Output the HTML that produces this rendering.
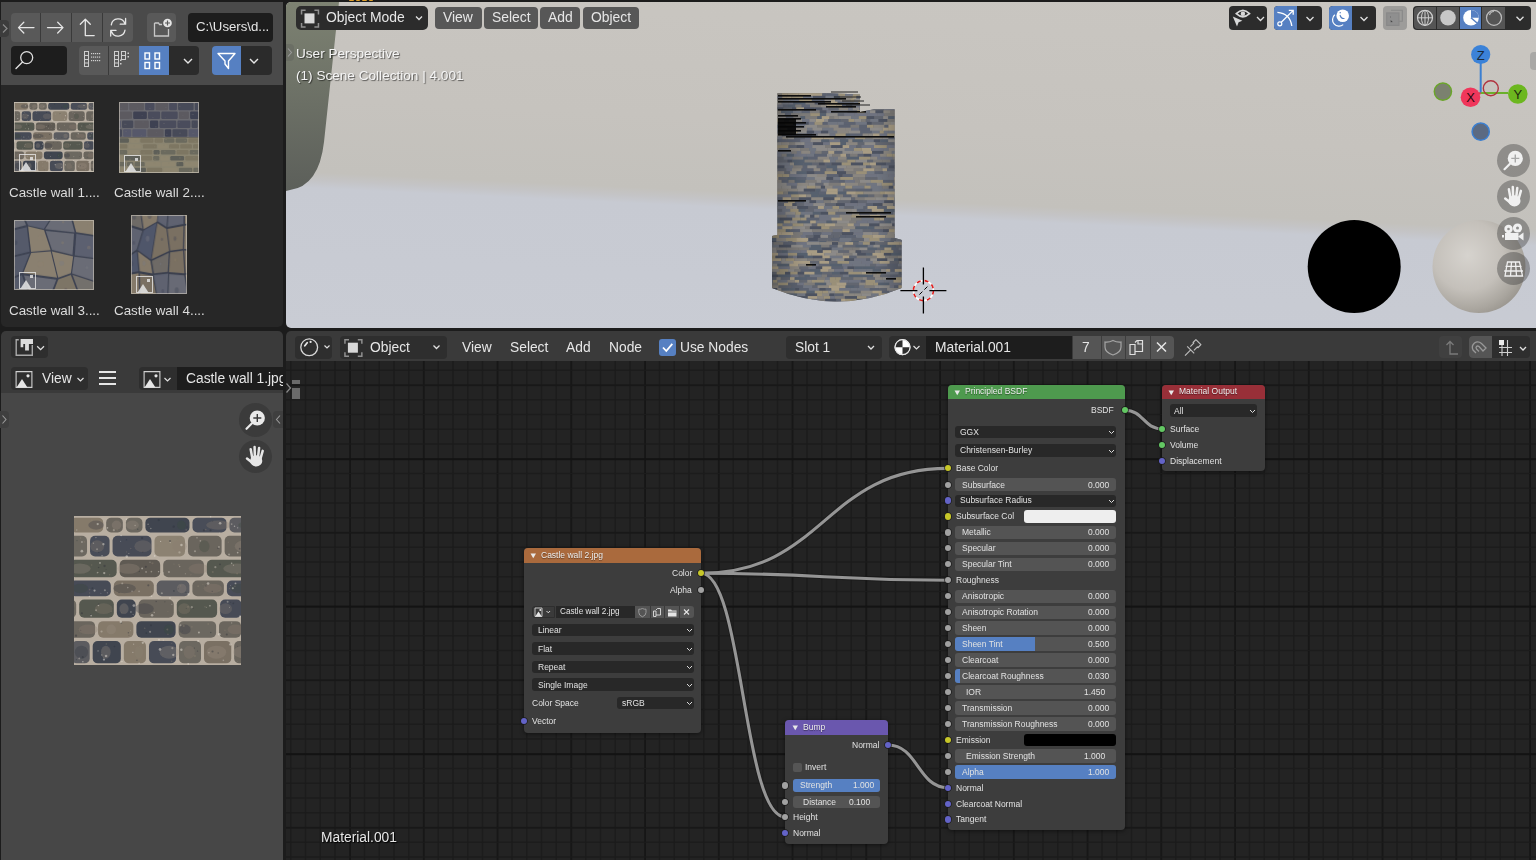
<!DOCTYPE html><html><head><meta charset="utf-8"><style>
*{box-sizing:border-box}
html,body{margin:0;padding:0}
body{width:1536px;height:860px;overflow:hidden;position:relative;background:#1c1c1c;font-family:"Liberation Sans", sans-serif;color:#e0e0e0}
.a{position:absolute}
.t{position:absolute;white-space:nowrap;line-height:1;will-change:transform}
.btn{position:absolute;background:#595959;border-radius:4px}
.fld{position:absolute;background:#1d1d1d;border-radius:4px}
.nd{position:absolute;border-radius:4px;background:#3d3d3d;box-shadow:0 1px 4px rgba(0,0,0,.5)}
.nh{position:absolute;left:0;top:0;right:0;border-radius:4px 4px 0 0}
.nt{position:absolute;white-space:nowrap;line-height:1;font-size:8.5px;color:#e4e4e4;will-change:transform}
.dd{position:absolute;background:#282828;border-radius:3px}
.sl{position:absolute;background:#545454;border-radius:3px;overflow:hidden}
.sk{position:absolute;width:7px;height:7px;border-radius:50%;border:1px solid #1e1e1e}
</style></head><body>
<svg width="0" height="0" style="position:absolute"><defs><filter id="soft"><feGaussianBlur stdDeviation="0.9"/></filter><symbol id="w1" viewBox="0 0 200 180" preserveAspectRatio="none"><g filter="url(#soft)"><rect width="200" height="180" fill="#b8aea1"/><rect x="-4.1" y="2.0" width="39.1" height="18.0" rx="6.0" fill="#857a6b"/><ellipse cx="26.5" cy="11.0" rx="9.4" ry="5.5" fill="#2f333c" opacity=".3"/><circle cx="19.1" cy="16.7" r="1.0" fill="#8a8070" opacity=".4"/><circle cx="6.2" cy="17.9" r="1.0" fill="#8a8070" opacity=".4"/><circle cx="14.6" cy="12.9" r="0.7" fill="#8a8070" opacity=".4"/><circle cx="3.3" cy="17.0" r="0.9" fill="#d8d0c4" opacity=".4"/><circle cx="21.3" cy="4.9" r="1.2" fill="#8a8070" opacity=".4"/><rect x="38.5" y="2.0" width="20.0" height="18.0" rx="6.0" fill="#6a655d"/><ellipse cx="51.0" cy="11.0" rx="5.8" ry="5.5" fill="#9a9080" opacity=".3"/><circle cx="51.9" cy="16.9" r="0.9" fill="#8a8070" opacity=".4"/><circle cx="47.7" cy="17.1" r="1.3" fill="#d8d0c4" opacity=".4"/><rect x="62.2" y="2.0" width="19.8" height="18.0" rx="6.0" fill="#6c6860"/><ellipse cx="70.0" cy="11.0" rx="7.7" ry="5.5" fill="#9a9080" opacity=".3"/><circle cx="76.3" cy="16.0" r="0.9" fill="#2e3038" opacity=".4"/><circle cx="73.2" cy="11.5" r="0.9" fill="#d8d0c4" opacity=".4"/><rect x="85.5" y="2.0" width="52.8" height="18.0" rx="6.0" fill="#3f4550"/><ellipse cx="128.7" cy="11.0" rx="5.4" ry="5.5" fill="#3d4a3a" opacity=".3"/><circle cx="135.6" cy="13.4" r="0.7" fill="#2e3038" opacity=".4"/><circle cx="134.4" cy="16.7" r="1.1" fill="#8a8070" opacity=".4"/><circle cx="119.4" cy="12.9" r="1.4" fill="#2e3038" opacity=".4"/><circle cx="101.5" cy="4.9" r="1.3" fill="#2e3038" opacity=".4"/><circle cx="92.0" cy="15.2" r="0.9" fill="#d8d0c4" opacity=".4"/><circle cx="88.7" cy="10.0" r="0.9" fill="#d8d0c4" opacity=".4"/><circle cx="89.9" cy="12.6" r="0.6" fill="#8a8070" opacity=".4"/><rect x="141.9" y="2.0" width="40.7" height="18.0" rx="6.0" fill="#4a4e58"/><ellipse cx="173.0" cy="11.0" rx="14.6" ry="5.5" fill="#8a7f70" opacity=".3"/><circle cx="180.3" cy="8.3" r="0.7" fill="#8a8070" opacity=".4"/><circle cx="163.5" cy="17.3" r="1.4" fill="#2e3038" opacity=".4"/><circle cx="166.2" cy="6.2" r="0.6" fill="#2e3038" opacity=".4"/><circle cx="155.5" cy="17.4" r="1.3" fill="#2e3038" opacity=".4"/><circle cx="157.8" cy="16.2" r="0.9" fill="#8a8070" opacity=".4"/><rect x="186.2" y="2.0" width="44.3" height="18.0" rx="6.0" fill="#5b5c60"/><ellipse cx="212.1" cy="11.0" rx="15.3" ry="5.5" fill="#3d4a3a" opacity=".3"/><circle cx="205.6" cy="14.1" r="0.8" fill="#2e3038" opacity=".4"/><circle cx="205.8" cy="7.6" r="0.8" fill="#2e3038" opacity=".4"/><circle cx="188.8" cy="9.8" r="1.1" fill="#d8d0c4" opacity=".4"/><circle cx="203.4" cy="12.2" r="0.7" fill="#8a8070" opacity=".4"/><circle cx="213.4" cy="10.5" r="1.1" fill="#2e3038" opacity=".4"/><rect x="-13.4" y="24.0" width="29.0" height="25.0" rx="6.0" fill="#6c6860"/><ellipse cx="-6.9" cy="36.5" rx="5.4" ry="7.2" fill="#2f333c" opacity=".3"/><circle cx="12.5" cy="31.3" r="1.0" fill="#8a8070" opacity=".4"/><circle cx="3.6" cy="29.7" r="0.7" fill="#2e3038" opacity=".4"/><circle cx="9.5" cy="31.5" r="1.2" fill="#d8d0c4" opacity=".4"/><circle cx="7.8" cy="26.6" r="1.1" fill="#8a8070" opacity=".4"/><rect x="19.2" y="24.0" width="23.4" height="25.0" rx="6.0" fill="#4a4e58"/><ellipse cx="27.8" cy="36.5" rx="8.2" ry="7.2" fill="#8a7f70" opacity=".3"/><circle cx="27.6" cy="40.2" r="1.1" fill="#d8d0c4" opacity=".4"/><circle cx="23.3" cy="32.8" r="0.9" fill="#d8d0c4" opacity=".4"/><circle cx="29.7" cy="44.0" r="0.7" fill="#2e3038" opacity=".4"/><rect x="46.2" y="24.0" width="46.6" height="25.0" rx="6.0" fill="#464b57"/><ellipse cx="82.6" cy="36.5" rx="10.3" ry="7.2" fill="#8a7f70" opacity=".3"/><circle cx="81.6" cy="26.7" r="1.4" fill="#2e3038" opacity=".4"/><circle cx="82.4" cy="43.6" r="0.7" fill="#2e3038" opacity=".4"/><circle cx="62.7" cy="43.4" r="0.7" fill="#8a8070" opacity=".4"/><circle cx="62.9" cy="28.7" r="0.8" fill="#2e3038" opacity=".4"/><circle cx="68.0" cy="39.3" r="0.8" fill="#8a8070" opacity=".4"/><circle cx="65.7" cy="45.3" r="0.7" fill="#d8d0c4" opacity=".4"/><rect x="96.4" y="24.0" width="36.5" height="25.0" rx="6.0" fill="#8c8272"/><ellipse cx="126.4" cy="36.5" rx="8.6" ry="7.2" fill="#8a7f70" opacity=".3"/><circle cx="99.6" cy="35.6" r="1.2" fill="#8a8070" opacity=".4"/><circle cx="115.3" cy="32.1" r="0.9" fill="#d8d0c4" opacity=".4"/><circle cx="126.3" cy="44.0" r="1.4" fill="#d8d0c4" opacity=".4"/><circle cx="124.6" cy="26.9" r="1.3" fill="#8a8070" opacity=".4"/><circle cx="115.0" cy="30.2" r="1.3" fill="#2e3038" opacity=".4"/><rect x="136.5" y="24.0" width="40.3" height="25.0" rx="6.0" fill="#6a655d"/><ellipse cx="156.1" cy="36.5" rx="6.2" ry="7.2" fill="#3d4a3a" opacity=".3"/><circle cx="147.3" cy="26.4" r="1.0" fill="#d8d0c4" opacity=".4"/><circle cx="172.4" cy="38.9" r="0.9" fill="#2e3038" opacity=".4"/><circle cx="173.6" cy="37.4" r="1.2" fill="#d8d0c4" opacity=".4"/><circle cx="151.3" cy="30.1" r="1.0" fill="#d8d0c4" opacity=".4"/><circle cx="144.9" cy="42.6" r="1.3" fill="#d8d0c4" opacity=".4"/><rect x="180.4" y="24.0" width="49.7" height="25.0" rx="6.0" fill="#6a655d"/><ellipse cx="204.8" cy="36.5" rx="12.3" ry="7.2" fill="#9a9080" opacity=".3"/><circle cx="184.9" cy="31.7" r="0.8" fill="#8a8070" opacity=".4"/><circle cx="206.2" cy="27.1" r="0.9" fill="#d8d0c4" opacity=".4"/><circle cx="221.5" cy="42.3" r="0.6" fill="#d8d0c4" opacity=".4"/><circle cx="185.7" cy="46.5" r="1.3" fill="#d8d0c4" opacity=".4"/><circle cx="206.0" cy="36.3" r="0.7" fill="#d8d0c4" opacity=".4"/><circle cx="198.5" cy="39.6" r="1.1" fill="#2e3038" opacity=".4"/><rect x="-4.8" y="53.0" width="55.9" height="21.0" rx="6.0" fill="#55584f"/><ellipse cx="6.8" cy="63.5" rx="13.2" ry="6.2" fill="#9a9080" opacity=".3"/><circle cx="38.4" cy="64.6" r="0.6" fill="#2e3038" opacity=".4"/><circle cx="28.5" cy="68.3" r="0.9" fill="#d8d0c4" opacity=".4"/><circle cx="29.5" cy="62.3" r="0.9" fill="#2e3038" opacity=".4"/><circle cx="36.6" cy="60.4" r="1.4" fill="#2e3038" opacity=".4"/><circle cx="21.1" cy="59.2" r="1.0" fill="#8a8070" opacity=".4"/><circle cx="27.8" cy="68.7" r="0.8" fill="#d8d0c4" opacity=".4"/><circle cx="42.7" cy="70.9" r="0.9" fill="#8a8070" opacity=".4"/><rect x="54.7" y="53.0" width="48.5" height="21.0" rx="6.0" fill="#5f5a53"/><ellipse cx="65.3" cy="63.5" rx="13.5" ry="6.2" fill="#9a9080" opacity=".3"/><circle cx="86.3" cy="67.5" r="1.1" fill="#d8d0c4" opacity=".4"/><circle cx="92.7" cy="67.2" r="1.0" fill="#d8d0c4" opacity=".4"/><circle cx="91.0" cy="55.8" r="0.7" fill="#d8d0c4" opacity=".4"/><circle cx="86.0" cy="61.4" r="1.3" fill="#2e3038" opacity=".4"/><circle cx="94.0" cy="57.1" r="1.3" fill="#8a8070" opacity=".4"/><circle cx="78.2" cy="66.8" r="0.8" fill="#2e3038" opacity=".4"/><rect x="106.8" y="53.0" width="48.8" height="21.0" rx="6.0" fill="#6a655d"/><ellipse cx="149.2" cy="63.5" rx="12.0" ry="6.2" fill="#8a7f70" opacity=".3"/><circle cx="113.7" cy="67.7" r="1.3" fill="#d8d0c4" opacity=".4"/><circle cx="133.4" cy="69.8" r="0.7" fill="#d8d0c4" opacity=".4"/><circle cx="119.7" cy="58.1" r="0.8" fill="#8a8070" opacity=".4"/><circle cx="140.0" cy="71.0" r="0.8" fill="#8a8070" opacity=".4"/><circle cx="126.6" cy="61.0" r="0.9" fill="#d8d0c4" opacity=".4"/><circle cx="125.6" cy="59.0" r="1.3" fill="#8a8070" opacity=".4"/><rect x="159.1" y="53.0" width="55.1" height="21.0" rx="6.0" fill="#55584f"/><ellipse cx="194.9" cy="63.5" rx="16.0" ry="6.2" fill="#9a9080" opacity=".3"/><circle cx="169.3" cy="61.8" r="1.3" fill="#d8d0c4" opacity=".4"/><circle cx="166.2" cy="67.7" r="1.3" fill="#8a8070" opacity=".4"/><circle cx="209.6" cy="65.0" r="1.3" fill="#d8d0c4" opacity=".4"/><circle cx="174.9" cy="58.4" r="1.1" fill="#2e3038" opacity=".4"/><circle cx="208.8" cy="69.5" r="1.0" fill="#2e3038" opacity=".4"/><circle cx="195.4" cy="69.5" r="1.1" fill="#8a8070" opacity=".4"/><circle cx="191.0" cy="59.5" r="0.8" fill="#d8d0c4" opacity=".4"/><rect x="-4.9" y="78.0" width="49.0" height="19.0" rx="6.0" fill="#464b57"/><ellipse cx="7.6" cy="87.5" rx="9.5" ry="5.8" fill="#3d4a3a" opacity=".3"/><circle cx="18.8" cy="93.0" r="0.9" fill="#8a8070" opacity=".4"/><circle cx="18.7" cy="89.0" r="1.0" fill="#8a8070" opacity=".4"/><circle cx="22.1" cy="87.2" r="1.2" fill="#2e3038" opacity=".4"/><circle cx="32.2" cy="93.2" r="0.6" fill="#d8d0c4" opacity=".4"/><circle cx="37.0" cy="89.7" r="1.2" fill="#d8d0c4" opacity=".4"/><circle cx="40.0" cy="92.8" r="0.8" fill="#d8d0c4" opacity=".4"/><rect x="47.7" y="78.0" width="47.9" height="19.0" rx="6.0" fill="#7a7064"/><ellipse cx="60.5" cy="87.5" rx="13.6" ry="5.8" fill="#2f333c" opacity=".3"/><circle cx="89.0" cy="83.8" r="1.3" fill="#2e3038" opacity=".4"/><circle cx="57.8" cy="81.4" r="1.2" fill="#d8d0c4" opacity=".4"/><circle cx="53.9" cy="92.5" r="0.8" fill="#2e3038" opacity=".4"/><circle cx="69.5" cy="91.0" r="0.9" fill="#d8d0c4" opacity=".4"/><circle cx="64.4" cy="86.5" r="1.0" fill="#d8d0c4" opacity=".4"/><circle cx="77.9" cy="91.1" r="1.0" fill="#d8d0c4" opacity=".4"/><rect x="99.1" y="78.0" width="39.1" height="19.0" rx="6.0" fill="#5b5c60"/><ellipse cx="128.9" cy="87.5" rx="5.7" ry="5.8" fill="#9a9080" opacity=".3"/><circle cx="105.2" cy="93.3" r="1.3" fill="#d8d0c4" opacity=".4"/><circle cx="119.6" cy="90.5" r="1.1" fill="#2e3038" opacity=".4"/><circle cx="127.6" cy="84.4" r="1.1" fill="#8a8070" opacity=".4"/><circle cx="134.1" cy="92.3" r="0.7" fill="#2e3038" opacity=".4"/><circle cx="124.7" cy="88.0" r="0.7" fill="#2e3038" opacity=".4"/><rect x="141.8" y="78.0" width="37.7" height="19.0" rx="6.0" fill="#6a655d"/><ellipse cx="166.2" cy="87.5" rx="11.0" ry="5.8" fill="#8a7f70" opacity=".3"/><circle cx="165.5" cy="91.0" r="0.7" fill="#2e3038" opacity=".4"/><circle cx="173.7" cy="89.8" r="0.7" fill="#8a8070" opacity=".4"/><circle cx="148.7" cy="85.0" r="1.2" fill="#8a8070" opacity=".4"/><circle cx="158.0" cy="84.5" r="0.7" fill="#2e3038" opacity=".4"/><circle cx="154.4" cy="82.6" r="0.7" fill="#8a8070" opacity=".4"/><rect x="183.1" y="78.0" width="25.3" height="19.0" rx="6.0" fill="#4a4e58"/><ellipse cx="196.3" cy="87.5" rx="8.4" ry="5.8" fill="#3d4a3a" opacity=".3"/><circle cx="187.4" cy="84.1" r="0.6" fill="#d8d0c4" opacity=".4"/><circle cx="186.2" cy="87.6" r="0.8" fill="#8a8070" opacity=".4"/><circle cx="192.7" cy="85.0" r="0.9" fill="#8a8070" opacity=".4"/><rect x="-18.4" y="101.0" width="21.0" height="22.0" rx="6.0" fill="#6c6860"/><ellipse cx="-4.9" cy="112.0" rx="5.4" ry="6.5" fill="#3d4a3a" opacity=".3"/><circle cx="-6.4" cy="115.3" r="1.1" fill="#8a8070" opacity=".4"/><circle cx="-14.4" cy="115.6" r="1.1" fill="#8a8070" opacity=".4"/><circle cx="-3.9" cy="117.7" r="1.2" fill="#8a8070" opacity=".4"/><rect x="6.2" y="101.0" width="41.5" height="22.0" rx="6.0" fill="#55584f"/><ellipse cx="35.6" cy="112.0" rx="10.5" ry="6.5" fill="#8a7f70" opacity=".3"/><circle cx="29.5" cy="106.6" r="0.8" fill="#2e3038" opacity=".4"/><circle cx="9.5" cy="117.5" r="1.3" fill="#2e3038" opacity=".4"/><circle cx="20.1" cy="119.3" r="0.8" fill="#2e3038" opacity=".4"/><circle cx="44.6" cy="115.4" r="0.8" fill="#8a8070" opacity=".4"/><circle cx="26.4" cy="113.8" r="1.2" fill="#d8d0c4" opacity=".4"/><rect x="51.3" y="101.0" width="22.5" height="22.0" rx="6.0" fill="#3f4550"/><ellipse cx="59.9" cy="112.0" rx="5.6" ry="6.5" fill="#9a9080" opacity=".3"/><circle cx="57.1" cy="117.1" r="0.8" fill="#8a8070" opacity=".4"/><circle cx="70.2" cy="120.0" r="0.7" fill="#2e3038" opacity=".4"/><circle cx="70.8" cy="119.1" r="0.7" fill="#d8d0c4" opacity=".4"/><rect x="77.4" y="101.0" width="42.1" height="22.0" rx="6.0" fill="#6a655d"/><ellipse cx="84.3" cy="112.0" rx="11.3" ry="6.5" fill="#2f333c" opacity=".3"/><circle cx="98.4" cy="103.3" r="0.9" fill="#2e3038" opacity=".4"/><circle cx="112.4" cy="115.5" r="0.7" fill="#8a8070" opacity=".4"/><circle cx="108.8" cy="103.6" r="0.7" fill="#2e3038" opacity=".4"/><circle cx="117.2" cy="106.7" r="0.7" fill="#d8d0c4" opacity=".4"/><circle cx="96.1" cy="116.6" r="1.0" fill="#d8d0c4" opacity=".4"/><rect x="123.1" y="101.0" width="48.3" height="22.0" rx="6.0" fill="#55584f"/><ellipse cx="132.1" cy="112.0" rx="7.5" ry="6.5" fill="#8a7f70" opacity=".3"/><circle cx="142.5" cy="111.5" r="0.7" fill="#2e3038" opacity=".4"/><circle cx="134.4" cy="111.8" r="0.6" fill="#2e3038" opacity=".4"/><circle cx="158.5" cy="110.2" r="0.7" fill="#d8d0c4" opacity=".4"/><circle cx="156.9" cy="109.6" r="0.9" fill="#8a8070" opacity=".4"/><circle cx="141.1" cy="110.2" r="1.4" fill="#d8d0c4" opacity=".4"/><circle cx="136.6" cy="109.7" r="1.3" fill="#8a8070" opacity=".4"/><rect x="175.0" y="101.0" width="25.8" height="22.0" rx="6.0" fill="#464b57"/><ellipse cx="181.5" cy="112.0" rx="7.8" ry="6.5" fill="#8a7f70" opacity=".3"/><circle cx="190.8" cy="105.5" r="1.1" fill="#2e3038" opacity=".4"/><circle cx="187.7" cy="104.1" r="0.6" fill="#2e3038" opacity=".4"/><circle cx="184.0" cy="103.6" r="1.2" fill="#d8d0c4" opacity=".4"/><rect x="-8.3" y="127.0" width="33.5" height="20.0" rx="6.0" fill="#6a655d"/><ellipse cx="17.1" cy="137.0" rx="11.5" ry="6.0" fill="#8a7f70" opacity=".3"/><circle cx="-3.3" cy="136.6" r="0.7" fill="#8a8070" opacity=".4"/><circle cx="-2.7" cy="143.6" r="1.1" fill="#8a8070" opacity=".4"/><circle cx="2.4" cy="144.7" r="1.4" fill="#2e3038" opacity=".4"/><circle cx="8.1" cy="138.0" r="0.6" fill="#2e3038" opacity=".4"/><rect x="28.8" y="127.0" width="42.3" height="20.0" rx="6.0" fill="#857a6b"/><ellipse cx="44.5" cy="137.0" rx="5.6" ry="6.0" fill="#9a9080" opacity=".3"/><circle cx="67.7" cy="138.5" r="0.6" fill="#d8d0c4" opacity=".4"/><circle cx="56.8" cy="129.3" r="1.0" fill="#2e3038" opacity=".4"/><circle cx="33.0" cy="139.5" r="1.3" fill="#d8d0c4" opacity=".4"/><circle cx="65.1" cy="141.1" r="0.9" fill="#2e3038" opacity=".4"/><circle cx="65.8" cy="144.0" r="0.6" fill="#2e3038" opacity=".4"/><rect x="74.7" y="127.0" width="47.0" height="20.0" rx="6.0" fill="#3f4550"/><ellipse cx="113.6" cy="137.0" rx="6.0" ry="6.0" fill="#3d4a3a" opacity=".3"/><circle cx="84.7" cy="135.6" r="1.0" fill="#8a8070" opacity=".4"/><circle cx="91.1" cy="139.9" r="1.3" fill="#d8d0c4" opacity=".4"/><circle cx="112.5" cy="142.8" r="0.9" fill="#8a8070" opacity=".4"/><circle cx="92.2" cy="131.9" r="1.2" fill="#2e3038" opacity=".4"/><circle cx="86.7" cy="141.5" r="1.0" fill="#2e3038" opacity=".4"/><circle cx="111.8" cy="137.1" r="1.2" fill="#8a8070" opacity=".4"/><rect x="125.3" y="127.0" width="44.9" height="20.0" rx="6.0" fill="#6c6860"/><ellipse cx="132.8" cy="137.0" rx="6.9" ry="6.0" fill="#2f333c" opacity=".3"/><circle cx="160.8" cy="130.5" r="1.2" fill="#8a8070" opacity=".4"/><circle cx="131.4" cy="132.8" r="1.3" fill="#8a8070" opacity=".4"/><circle cx="129.7" cy="138.8" r="0.6" fill="#2e3038" opacity=".4"/><circle cx="163.8" cy="140.7" r="0.9" fill="#2e3038" opacity=".4"/><circle cx="127.5" cy="132.1" r="1.2" fill="#d8d0c4" opacity=".4"/><circle cx="141.2" cy="134.0" r="1.0" fill="#8a8070" opacity=".4"/><rect x="173.7" y="127.0" width="26.4" height="20.0" rx="6.0" fill="#6a655d"/><ellipse cx="193.6" cy="137.0" rx="9.7" ry="6.0" fill="#8a7f70" opacity=".3"/><circle cx="188.8" cy="129.2" r="0.8" fill="#d8d0c4" opacity=".4"/><circle cx="180.8" cy="138.0" r="0.9" fill="#8a8070" opacity=".4"/><circle cx="183.0" cy="143.1" r="1.2" fill="#2e3038" opacity=".4"/><rect x="-2.6" y="151.0" width="21.4" height="27.0" rx="6.0" fill="#5b5c60"/><ellipse cx="8.9" cy="164.5" rx="7.9" ry="7.8" fill="#2f333c" opacity=".3"/><circle cx="2.9" cy="173.5" r="0.7" fill="#2e3038" opacity=".4"/><circle cx="6.3" cy="172.0" r="1.1" fill="#d8d0c4" opacity=".4"/><circle cx="10.5" cy="170.5" r="1.3" fill="#2e3038" opacity=".4"/><rect x="22.4" y="151.0" width="33.7" height="27.0" rx="6.0" fill="#3f4550"/><ellipse cx="38.1" cy="164.5" rx="5.8" ry="7.8" fill="#9a9080" opacity=".3"/><circle cx="48.4" cy="157.7" r="1.0" fill="#2e3038" opacity=".4"/><circle cx="33.3" cy="167.8" r="0.9" fill="#d8d0c4" opacity=".4"/><circle cx="38.8" cy="154.6" r="1.0" fill="#8a8070" opacity=".4"/><circle cx="35.3" cy="171.0" r="0.7" fill="#8a8070" opacity=".4"/><rect x="59.7" y="151.0" width="26.5" height="27.0" rx="6.0" fill="#857a6b"/><ellipse cx="77.7" cy="164.5" rx="5.3" ry="7.8" fill="#8a7f70" opacity=".3"/><circle cx="71.4" cy="154.9" r="0.8" fill="#d8d0c4" opacity=".4"/><circle cx="78.5" cy="157.8" r="0.8" fill="#8a8070" opacity=".4"/><circle cx="75.4" cy="174.4" r="1.0" fill="#2e3038" opacity=".4"/><rect x="89.8" y="151.0" width="32.4" height="27.0" rx="6.0" fill="#464b57"/><ellipse cx="114.1" cy="164.5" rx="11.6" ry="7.8" fill="#9a9080" opacity=".3"/><circle cx="117.0" cy="175.6" r="1.0" fill="#8a8070" opacity=".4"/><circle cx="117.8" cy="159.7" r="1.3" fill="#d8d0c4" opacity=".4"/><circle cx="117.0" cy="153.7" r="0.7" fill="#8a8070" opacity=".4"/><circle cx="106.5" cy="167.7" r="0.6" fill="#8a8070" opacity=".4"/><rect x="125.8" y="151.0" width="26.3" height="27.0" rx="6.0" fill="#6c6860"/><ellipse cx="138.0" cy="164.5" rx="6.7" ry="7.8" fill="#8a7f70" opacity=".3"/><circle cx="144.3" cy="159.6" r="0.7" fill="#2e3038" opacity=".4"/><circle cx="147.9" cy="163.2" r="0.8" fill="#2e3038" opacity=".4"/><circle cx="144.7" cy="169.1" r="1.4" fill="#8a8070" opacity=".4"/><rect x="155.7" y="151.0" width="32.6" height="27.0" rx="6.0" fill="#7a7064"/><ellipse cx="170.6" cy="164.5" rx="11.6" ry="7.8" fill="#9a9080" opacity=".3"/><circle cx="172.7" cy="165.5" r="0.9" fill="#2e3038" opacity=".4"/><circle cx="165.9" cy="163.7" r="1.3" fill="#2e3038" opacity=".4"/><circle cx="178.9" cy="174.4" r="1.0" fill="#d8d0c4" opacity=".4"/><circle cx="161.6" cy="165.2" r="1.0" fill="#d8d0c4" opacity=".4"/><rect x="191.8" y="151.0" width="54.5" height="27.0" rx="6.0" fill="#6a655d"/><ellipse cx="206.6" cy="164.5" rx="16.1" ry="7.8" fill="#9a9080" opacity=".3"/><circle cx="211.8" cy="175.2" r="0.9" fill="#8a8070" opacity=".4"/><circle cx="195.8" cy="157.3" r="0.6" fill="#2e3038" opacity=".4"/><circle cx="239.3" cy="172.2" r="1.1" fill="#d8d0c4" opacity=".4"/><circle cx="216.6" cy="159.0" r="1.1" fill="#2e3038" opacity=".4"/><circle cx="215.0" cy="159.0" r="0.6" fill="#2e3038" opacity=".4"/><circle cx="195.9" cy="175.9" r="0.7" fill="#8a8070" opacity=".4"/><circle cx="206.4" cy="156.1" r="1.2" fill="#2e3038" opacity=".4"/><circle cx="101.8" cy="149.6" r="1.2" fill="#e6e0d6" opacity=".5"/><circle cx="55.9" cy="30.4" r="0.6" fill="#e6e0d6" opacity=".5"/><circle cx="128.6" cy="161.5" r="1.5" fill="#e6e0d6" opacity=".5"/><circle cx="93.5" cy="119.8" r="1.5" fill="#e6e0d6" opacity=".5"/><circle cx="162.8" cy="108.5" r="1.0" fill="#e6e0d6" opacity=".5"/><circle cx="103.7" cy="30.7" r="0.8" fill="#e6e0d6" opacity=".5"/><circle cx="136.8" cy="178.6" r="1.1" fill="#e6e0d6" opacity=".5"/><circle cx="81.6" cy="63.3" r="1.1" fill="#e6e0d6" opacity=".5"/><circle cx="160.6" cy="81.5" r="1.6" fill="#e6e0d6" opacity=".5"/><circle cx="31.1" cy="56.7" r="1.1" fill="#e6e0d6" opacity=".5"/><circle cx="82.4" cy="153.2" r="1.4" fill="#e6e0d6" opacity=".5"/><circle cx="186.3" cy="110.2" r="0.6" fill="#e6e0d6" opacity=".5"/><circle cx="114.9" cy="99.0" r="1.1" fill="#e6e0d6" opacity=".5"/><circle cx="56.0" cy="127.7" r="1.5" fill="#e6e0d6" opacity=".5"/><circle cx="20.5" cy="120.4" r="1.0" fill="#e6e0d6" opacity=".5"/><circle cx="103.0" cy="161.2" r="1.6" fill="#e6e0d6" opacity=".5"/><circle cx="128.7" cy="35.1" r="1.5" fill="#e6e0d6" opacity=".5"/><circle cx="36.2" cy="69.0" r="1.4" fill="#e6e0d6" opacity=".5"/><circle cx="63.2" cy="48.8" r="1.5" fill="#e6e0d6" opacity=".5"/><circle cx="188.8" cy="57.1" r="1.0" fill="#e6e0d6" opacity=".5"/><circle cx="56.4" cy="23.7" r="0.9" fill="#e6e0d6" opacity=".5"/><circle cx="196.0" cy="14.3" r="0.8" fill="#e6e0d6" opacity=".5"/><circle cx="40.0" cy="14.3" r="1.1" fill="#e6e0d6" opacity=".5"/><circle cx="148.6" cy="150.9" r="1.2" fill="#e6e0d6" opacity=".5"/><circle cx="163.6" cy="1.0" r="0.9" fill="#e6e0d6" opacity=".5"/><circle cx="192.2" cy="12.5" r="0.9" fill="#e6e0d6" opacity=".5"/><circle cx="96.6" cy="48.2" r="1.1" fill="#e6e0d6" opacity=".5"/><circle cx="9.4" cy="42.5" r="1.6" fill="#e6e0d6" opacity=".5"/><circle cx="28.8" cy="163.0" r="0.8" fill="#e6e0d6" opacity=".5"/><circle cx="198.6" cy="121.4" r="1.2" fill="#e6e0d6" opacity=".5"/><circle cx="28.4" cy="9.8" r="1.4" fill="#e6e0d6" opacity=".5"/><circle cx="35.2" cy="34.1" r="1.4" fill="#e6e0d6" opacity=".5"/><circle cx="175.0" cy="8.8" r="1.6" fill="#e6e0d6" opacity=".5"/><circle cx="106.9" cy="68.8" r="0.7" fill="#e6e0d6" opacity=".5"/><circle cx="78.0" cy="177.8" r="0.9" fill="#e6e0d6" opacity=".5"/><circle cx="26.3" cy="26.1" r="0.7" fill="#e6e0d6" opacity=".5"/><circle cx="70.5" cy="164.7" r="0.7" fill="#e6e0d6" opacity=".5"/><circle cx="38.4" cy="169.1" r="1.6" fill="#e6e0d6" opacity=".5"/><circle cx="196.0" cy="44.3" r="1.0" fill="#e6e0d6" opacity=".5"/><circle cx="190.2" cy="87.3" r="1.3" fill="#e6e0d6" opacity=".5"/><circle cx="62.7" cy="3.8" r="0.9" fill="#e6e0d6" opacity=".5"/><circle cx="149.6" cy="140.7" r="1.2" fill="#e6e0d6" opacity=".5"/><circle cx="92.8" cy="96.9" r="1.0" fill="#e6e0d6" opacity=".5"/><circle cx="106.9" cy="149.9" r="0.8" fill="#e6e0d6" opacity=".5"/><circle cx="118.9" cy="167.9" r="1.4" fill="#e6e0d6" opacity=".5"/><circle cx="35.9" cy="173.4" r="1.4" fill="#e6e0d6" opacity=".5"/><circle cx="33.6" cy="47.9" r="0.8" fill="#e6e0d6" opacity=".5"/><circle cx="10.6" cy="176.1" r="1.0" fill="#e6e0d6" opacity=".5"/><circle cx="174.5" cy="20.6" r="0.6" fill="#e6e0d6" opacity=".5"/><circle cx="174.0" cy="142.9" r="1.6" fill="#e6e0d6" opacity=".5"/><circle cx="137.1" cy="94.5" r="1.4" fill="#e6e0d6" opacity=".5"/><circle cx="18.5" cy="97.3" r="1.0" fill="#e6e0d6" opacity=".5"/><circle cx="29.3" cy="108.1" r="0.9" fill="#e6e0d6" opacity=".5"/><circle cx="101.3" cy="67.2" r="0.9" fill="#e6e0d6" opacity=".5"/><circle cx="71.7" cy="108.2" r="1.6" fill="#e6e0d6" opacity=".5"/><circle cx="187.2" cy="155.2" r="1.4" fill="#e6e0d6" opacity=".5"/><circle cx="57.4" cy="175.8" r="0.9" fill="#e6e0d6" opacity=".5"/><circle cx="24.6" cy="90.1" r="1.3" fill="#e6e0d6" opacity=".5"/><circle cx="68.2" cy="116.1" r="0.9" fill="#e6e0d6" opacity=".5"/><circle cx="193.4" cy="81.5" r="1.1" fill="#e6e0d6" opacity=".5"/></g></symbol><symbol id="w2" viewBox="0 0 200 180" preserveAspectRatio="none"><rect width="200" height="90" fill="#6a6a70"/><rect x="-7.5" y="1.8" width="30.1" height="18.9" rx="3" fill="#5c5a60"/><rect x="3.9" y="15.4" width="2.8" height="2" fill="#6a6a70" opacity=".5"/><rect x="25.6" y="1.8" width="36.7" height="18.9" rx="3" fill="#5c5a60"/><rect x="45.1" y="14.5" width="2.4" height="2" fill="#6a6a70" opacity=".5"/><rect x="65.3" y="1.8" width="23.2" height="18.9" rx="3" fill="#4a4c5c"/><rect x="75.0" y="15.9" width="4.5" height="2" fill="#6a6a70" opacity=".5"/><rect x="91.5" y="1.8" width="31.1" height="18.9" rx="3" fill="#5c5a60"/><rect x="115.2" y="12.5" width="4.5" height="2" fill="#6a6a70" opacity=".5"/><rect x="125.5" y="1.8" width="19.3" height="18.9" rx="3" fill="#4a4c5c"/><rect x="136.4" y="3.9" width="2.1" height="2" fill="#6a6a70" opacity=".5"/><rect x="147.8" y="1.8" width="38.7" height="18.9" rx="3" fill="#474a58"/><rect x="150.2" y="9.7" width="3.8" height="2" fill="#6a6a70" opacity=".5"/><rect x="189.5" y="1.8" width="37.7" height="18.9" rx="3" fill="#474a58"/><rect x="198.0" y="7.3" width="2.0" height="2" fill="#6a6a70" opacity=".5"/><rect x="-0.2" y="24.3" width="32.7" height="18.9" rx="3" fill="#5c5a60"/><rect x="25.9" y="39.9" width="5.4" height="2" fill="#6a6a70" opacity=".5"/><rect x="35.5" y="24.3" width="34.1" height="18.9" rx="3" fill="#3e4152"/><rect x="56.8" y="32.9" width="2.1" height="2" fill="#6a6a70" opacity=".5"/><rect x="72.6" y="24.3" width="30.2" height="18.9" rx="3" fill="#4a4c5c"/><rect x="83.0" y="37.8" width="3.5" height="2" fill="#6a6a70" opacity=".5"/><rect x="105.8" y="24.3" width="40.9" height="18.9" rx="3" fill="#4a4c5c"/><rect x="114.3" y="38.9" width="2.2" height="2" fill="#6a6a70" opacity=".5"/><rect x="149.7" y="24.3" width="25.1" height="18.9" rx="3" fill="#5c5a60"/><rect x="158.4" y="33.7" width="2.8" height="2" fill="#6a6a70" opacity=".5"/><rect x="177.8" y="24.3" width="33.2" height="18.9" rx="3" fill="#3e4152"/><rect x="181.5" y="30.3" width="5.9" height="2" fill="#6a6a70" opacity=".5"/><rect x="-13.7" y="46.8" width="18.2" height="18.9" rx="3" fill="#56586a"/><rect x="-5.0" y="48.2" width="3.9" height="2" fill="#6a6a70" opacity=".5"/><rect x="7.5" y="46.8" width="28.1" height="18.9" rx="3" fill="#474a58"/><rect x="12.8" y="55.4" width="5.9" height="2" fill="#6a6a70" opacity=".5"/><rect x="38.7" y="46.8" width="35.8" height="18.9" rx="3" fill="#5c5a60"/><rect x="58.0" y="49.7" width="3.7" height="2" fill="#6a6a70" opacity=".5"/><rect x="77.4" y="46.8" width="20.7" height="18.9" rx="3" fill="#3e4152"/><rect x="90.0" y="62.1" width="4.4" height="2" fill="#6a6a70" opacity=".5"/><rect x="101.2" y="46.8" width="41.9" height="18.9" rx="3" fill="#4a4c5c"/><rect x="109.8" y="53.7" width="5.4" height="2" fill="#6a6a70" opacity=".5"/><rect x="146.1" y="46.8" width="32.3" height="18.9" rx="3" fill="#4a4c5c"/><rect x="148.7" y="50.1" width="3.8" height="2" fill="#6a6a70" opacity=".5"/><rect x="181.5" y="46.8" width="15.3" height="18.9" rx="3" fill="#474a58"/><rect x="185.4" y="52.3" width="2.3" height="2" fill="#6a6a70" opacity=".5"/><rect x="199.7" y="46.8" width="17.4" height="18.9" rx="3" fill="#474a58"/><rect x="207.2" y="48.2" width="3.5" height="2" fill="#6a6a70" opacity=".5"/><rect x="-10.9" y="69.3" width="18.4" height="18.9" rx="3" fill="#474a58"/><rect x="-4.4" y="78.8" width="5.5" height="2" fill="#6a6a70" opacity=".5"/><rect x="10.5" y="69.3" width="19.9" height="18.9" rx="3" fill="#56586a"/><rect x="15.7" y="73.8" width="4.4" height="2" fill="#6a6a70" opacity=".5"/><rect x="33.4" y="69.3" width="34.6" height="18.9" rx="3" fill="#56586a"/><rect x="54.6" y="84.1" width="2.8" height="2" fill="#6a6a70" opacity=".5"/><rect x="71.0" y="69.3" width="40.7" height="18.9" rx="3" fill="#5c5a60"/><rect x="92.2" y="76.6" width="2.4" height="2" fill="#6a6a70" opacity=".5"/><rect x="114.7" y="69.3" width="16.0" height="18.9" rx="3" fill="#3e4152"/><rect x="118.1" y="80.7" width="3.0" height="2" fill="#6a6a70" opacity=".5"/><rect x="133.7" y="69.3" width="37.2" height="18.9" rx="3" fill="#474a58"/><rect x="149.6" y="78.0" width="5.7" height="2" fill="#6a6a70" opacity=".5"/><rect x="174.0" y="69.3" width="41.4" height="18.9" rx="3" fill="#56586a"/><rect x="183.1" y="78.6" width="5.4" height="2" fill="#6a6a70" opacity=".5"/><g transform="translate(0,90)"><rect width="200" height="90" fill="#8a8470"/><rect x="-8.0" y="1.8" width="32.8" height="11.4" rx="3" fill="#5e5f58"/><rect x="-3.0" y="3.1" width="3.5" height="2" fill="#8a8470" opacity=".5"/><rect x="27.8" y="1.8" width="22.4" height="11.4" rx="3" fill="#8e8670"/><rect x="39.2" y="7.2" width="4.2" height="2" fill="#8a8470" opacity=".5"/><rect x="53.2" y="1.8" width="32.9" height="11.4" rx="3" fill="#7d7662"/><rect x="79.0" y="5.6" width="3.4" height="2" fill="#8a8470" opacity=".5"/><rect x="89.0" y="1.8" width="20.7" height="11.4" rx="3" fill="#7d7662"/><rect x="91.5" y="7.8" width="3.3" height="2" fill="#8a8470" opacity=".5"/><rect x="112.7" y="1.8" width="25.9" height="11.4" rx="3" fill="#6b6a5e"/><rect x="114.5" y="3.4" width="5.7" height="2" fill="#8a8470" opacity=".5"/><rect x="141.6" y="1.8" width="28.7" height="11.4" rx="3" fill="#6b6a5e"/><rect x="163.6" y="6.0" width="3.8" height="2" fill="#8a8470" opacity=".5"/><rect x="173.4" y="1.8" width="32.8" height="11.4" rx="3" fill="#7d7662"/><rect x="188.3" y="9.2" width="4.2" height="2" fill="#8a8470" opacity=".5"/><rect x="-18.0" y="16.8" width="38.9" height="11.4" rx="3" fill="#7d7662"/><rect x="-0.8" y="18.6" width="4.4" height="2" fill="#8a8470" opacity=".5"/><rect x="23.9" y="16.8" width="33.0" height="11.4" rx="3" fill="#8e8670"/><rect x="37.3" y="20.7" width="2.1" height="2" fill="#8a8470" opacity=".5"/><rect x="59.9" y="16.8" width="34.6" height="11.4" rx="3" fill="#7d7662"/><rect x="87.4" y="22.6" width="3.4" height="2" fill="#8a8470" opacity=".5"/><rect x="97.5" y="16.8" width="24.8" height="11.4" rx="3" fill="#8e8670"/><rect x="110.4" y="18.8" width="2.9" height="2" fill="#8a8470" opacity=".5"/><rect x="125.3" y="16.8" width="24.8" height="11.4" rx="3" fill="#7d7662"/><rect x="127.3" y="23.8" width="3.7" height="2" fill="#8a8470" opacity=".5"/><rect x="153.2" y="16.8" width="29.0" height="11.4" rx="3" fill="#7d7662"/><rect x="168.8" y="18.3" width="2.8" height="2" fill="#8a8470" opacity=".5"/><rect x="185.2" y="16.8" width="31.4" height="11.4" rx="3" fill="#7d7662"/><rect x="190.8" y="22.9" width="2.1" height="2" fill="#8a8470" opacity=".5"/><rect x="-4.0" y="31.8" width="24.3" height="11.4" rx="3" fill="#6b6a5e"/><rect x="5.8" y="35.6" width="3.4" height="2" fill="#8a8470" opacity=".5"/><rect x="23.3" y="31.8" width="27.3" height="11.4" rx="3" fill="#8e8670"/><rect x="29.4" y="39.9" width="3.9" height="2" fill="#8a8470" opacity=".5"/><rect x="53.6" y="31.8" width="29.8" height="11.4" rx="3" fill="#7d7662"/><rect x="59.2" y="38.2" width="5.6" height="2" fill="#8a8470" opacity=".5"/><rect x="86.4" y="31.8" width="15.2" height="11.4" rx="3" fill="#5e5f58"/><rect x="94.5" y="38.6" width="2.7" height="2" fill="#8a8470" opacity=".5"/><rect x="104.6" y="31.8" width="36.5" height="11.4" rx="3" fill="#6b6a5e"/><rect x="113.1" y="33.8" width="3.4" height="2" fill="#8a8470" opacity=".5"/><rect x="144.0" y="31.8" width="29.8" height="11.4" rx="3" fill="#7d7662"/><rect x="146.0" y="35.3" width="5.1" height="2" fill="#8a8470" opacity=".5"/><rect x="176.8" y="31.8" width="37.5" height="11.4" rx="3" fill="#6b6a5e"/><rect x="185.0" y="36.7" width="3.9" height="2" fill="#8a8470" opacity=".5"/><rect x="-11.0" y="46.8" width="22.1" height="11.4" rx="3" fill="#8e8670"/><rect x="3.1" y="49.1" width="3.2" height="2" fill="#8a8470" opacity=".5"/><rect x="14.1" y="46.8" width="38.6" height="11.4" rx="3" fill="#5e5f58"/><rect x="25.6" y="54.0" width="4.6" height="2" fill="#8a8470" opacity=".5"/><rect x="55.6" y="46.8" width="27.0" height="11.4" rx="3" fill="#7d7662"/><rect x="71.1" y="51.6" width="2.1" height="2" fill="#8a8470" opacity=".5"/><rect x="85.6" y="46.8" width="15.1" height="11.4" rx="3" fill="#6b6a5e"/><rect x="88.1" y="54.2" width="3.7" height="2" fill="#8a8470" opacity=".5"/><rect x="103.7" y="46.8" width="21.5" height="11.4" rx="3" fill="#8e8670"/><rect x="111.6" y="48.4" width="4.3" height="2" fill="#8a8470" opacity=".5"/><rect x="128.3" y="46.8" width="34.4" height="11.4" rx="3" fill="#5e5f58"/><rect x="149.8" y="50.9" width="4.4" height="2" fill="#8a8470" opacity=".5"/><rect x="165.7" y="46.8" width="39.3" height="11.4" rx="3" fill="#7d7662"/><rect x="185.3" y="50.4" width="3.5" height="2" fill="#8a8470" opacity=".5"/><rect x="-13.2" y="61.8" width="30.2" height="11.4" rx="3" fill="#6b6a5e"/><rect x="3.6" y="64.1" width="2.1" height="2" fill="#8a8470" opacity=".5"/><rect x="20.0" y="61.8" width="16.0" height="11.4" rx="3" fill="#6b6a5e"/><rect x="28.8" y="66.7" width="5.2" height="2" fill="#8a8470" opacity=".5"/><rect x="39.0" y="61.8" width="25.2" height="11.4" rx="3" fill="#6b6a5e"/><rect x="52.8" y="64.3" width="3.1" height="2" fill="#8a8470" opacity=".5"/><rect x="67.3" y="61.8" width="36.4" height="11.4" rx="3" fill="#8e8670"/><rect x="86.4" y="63.9" width="4.1" height="2" fill="#8a8470" opacity=".5"/><rect x="106.7" y="61.8" width="33.9" height="11.4" rx="3" fill="#8e8670"/><rect x="123.2" y="63.5" width="3.4" height="2" fill="#8a8470" opacity=".5"/><rect x="143.6" y="61.8" width="17.2" height="11.4" rx="3" fill="#5e5f58"/><rect x="146.4" y="63.6" width="3.2" height="2" fill="#8a8470" opacity=".5"/><rect x="163.8" y="61.8" width="33.8" height="11.4" rx="3" fill="#8e8670"/><rect x="174.7" y="63.2" width="4.0" height="2" fill="#8a8470" opacity=".5"/><rect x="200.6" y="61.8" width="27.0" height="11.4" rx="3" fill="#7d7662"/><rect x="203.2" y="67.2" width="3.8" height="2" fill="#8a8470" opacity=".5"/><rect x="-16.2" y="76.8" width="17.6" height="11.4" rx="3" fill="#7d7662"/><rect x="-14.6" y="80.5" width="3.1" height="2" fill="#8a8470" opacity=".5"/><rect x="4.4" y="76.8" width="20.4" height="11.4" rx="3" fill="#8e8670"/><rect x="9.6" y="81.6" width="2.6" height="2" fill="#8a8470" opacity=".5"/><rect x="27.9" y="76.8" width="39.4" height="11.4" rx="3" fill="#5e5f58"/><rect x="34.5" y="81.3" width="4.4" height="2" fill="#8a8470" opacity=".5"/><rect x="70.2" y="76.8" width="37.8" height="11.4" rx="3" fill="#7d7662"/><rect x="85.4" y="83.5" width="2.2" height="2" fill="#8a8470" opacity=".5"/><rect x="111.0" y="76.8" width="35.9" height="11.4" rx="3" fill="#8e8670"/><rect x="127.5" y="83.3" width="3.6" height="2" fill="#8a8470" opacity=".5"/><rect x="149.8" y="76.8" width="33.2" height="11.4" rx="3" fill="#6b6a5e"/><rect x="175.8" y="81.9" width="4.7" height="2" fill="#8a8470" opacity=".5"/><rect x="186.0" y="76.8" width="24.5" height="11.4" rx="3" fill="#6b6a5e"/><rect x="192.8" y="81.5" width="3.4" height="2" fill="#8a8470" opacity=".5"/></g></symbol><symbol id="w3" viewBox="0 0 200 180" preserveAspectRatio="none"><g filter="url(#soft)"><rect width="200" height="180" fill="#3e4352"/><polygon points="-39.7,-21.9 10.7,-32.6 30.3,13.1 -24.0,26.9" fill="#6a6c76"/><circle cx="-9.1" cy="-1.5" r="7.9" fill="#8c806e" opacity=".35"/><polygon points="-24.0,32.2 31.9,18.0 39.1,81.3 -38.5,100.7" fill="#545a6a"/><circle cx="3.1" cy="58.3" r="5.9" fill="#3e4352" opacity=".35"/><polygon points="-38.8,105.0 39.2,85.5 19.7,136.8 -18.2,153.1" fill="#545a6a"/><circle cx="-3.4" cy="121.8" r="6.1" fill="#3e4352" opacity=".35"/><polygon points="-17.6,157.5 19.8,141.4 46.0,222.4 -28.0,205.2" fill="#545a6a"/><circle cx="9.3" cy="179.1" r="3.8" fill="#8c806e" opacity=".35"/><polygon points="14.9,-34.2 104.3,-25.6 74.7,23.0 35.4,13.9" fill="#5c6070"/><circle cx="53.9" cy="-10.4" r="5.6" fill="#777a84" opacity=".35"/><polygon points="35.3,16.5 75.1,25.7 91.6,77.5 42.7,81.6" fill="#8a8070"/><circle cx="65.3" cy="47.0" r="6.7" fill="#8c806e" opacity=".35"/><polygon points="43.1,84.4 91.7,80.3 107.8,148.3 23.2,136.8" fill="#8a8070"/><circle cx="66.5" cy="114.1" r="7.7" fill="#8c806e" opacity=".35"/><polygon points="25.0,142.3 105.8,153.3 78.8,224.9 50.9,222.3" fill="#6a6c76"/><circle cx="64.5" cy="184.8" r="6.7" fill="#8c806e" opacity=".35"/><polygon points="107.6,-25.2 140.0,-14.1 151.6,31.5 77.8,23.6" fill="#6a6c76"/><circle cx="122.8" cy="5.5" r="3.2" fill="#8c806e" opacity=".35"/><polygon points="79.4,27.6 150.1,35.1 146.3,89.3 95.1,76.8" fill="#6a6c76"/><circle cx="121.5" cy="58.6" r="3.7" fill="#8c806e" opacity=".35"/><polygon points="94.6,80.7 147.8,93.7 142.3,136.5 110.6,148.2" fill="#8a8070"/><circle cx="119.3" cy="111.2" r="6.3" fill="#777a84" opacity=".35"/><polygon points="110.9,152.3 142.1,140.9 165.5,205.3 83.4,225.4" fill="#7d7466"/><circle cx="129.5" cy="179.6" r="3.8" fill="#3e4352" opacity=".35"/><polygon points="144.1,-13.8 225.0,-38.8 231.5,43.1 155.5,31.2" fill="#8a8070"/><circle cx="188.9" cy="9.4" r="5.4" fill="#8c806e" opacity=".35"/><polygon points="155.8,35.3 231.5,47.2 224.1,100.4 152.0,90.8" fill="#5c6070"/><circle cx="187.2" cy="70.7" r="4.9" fill="#8c806e" opacity=".35"/><polygon points="150.7,93.8 224.7,103.7 218.5,161.9 145.1,137.2" fill="#6a6c76"/><circle cx="182.4" cy="122.4" r="4.2" fill="#777a84" opacity=".35"/><polygon points="146.4,141.0 217.3,164.9 201.5,213.5 169.7,205.2" fill="#736f6c"/><circle cx="182.8" cy="185.7" r="7.5" fill="#8c806e" opacity=".35"/><polygon points="230.6,-37.9 288.5,-38.1 291.7,41.4 237.0,41.6" fill="#8a8070"/><circle cx="257.9" cy="-3.0" r="5.2" fill="#8c806e" opacity=".35"/><polygon points="236.7,48.0 291.2,47.8 273.9,86.3 229.5,99.7" fill="#6a6c76"/><circle cx="259.4" cy="66.7" r="5.7" fill="#3e4352" opacity=".35"/><polygon points="228.3,104.6 273.7,90.9 275.1,148.9 222.3,160.7" fill="#7d7466"/><circle cx="251.0" cy="123.1" r="7.3" fill="#8c806e" opacity=".35"/><polygon points="221.7,164.8 275.6,152.8 294.7,211.2 205.6,214.4" fill="#545a6a"/><circle cx="252.0" cy="186.8" r="5.5" fill="#777a84" opacity=".35"/></g></symbol><symbol id="w4" viewBox="0 0 200 180" preserveAspectRatio="none"><g filter="url(#soft)"><rect width="200" height="180" fill="#3a3f4e"/><polygon points="-23.8,-22.4 28.2,-28.4 41.4,31.0 -15.9,19.5" fill="#6e6a66"/><circle cx="11.1" cy="4.0" r="6.6" fill="#3e4352" opacity=".35"/><polygon points="-15.6,24.9 40.7,36.2 20.5,78.3 -20.8,96.5" fill="#5e6270"/><circle cx="10.1" cy="63.3" r="4.4" fill="#3e4352" opacity=".35"/><polygon points="-21.7,101.4 20.7,82.7 26.9,128.1 -13.4,132.4" fill="#50566a"/><circle cx="2.2" cy="110.8" r="6.1" fill="#3e4352" opacity=".35"/><polygon points="-13.2,136.9 27.1,132.6 30.7,208.1 -21.5,204.3" fill="#857a6a"/><circle cx="4.0" cy="175.0" r="3.8" fill="#8c806e" opacity=".35"/><polygon points="-22.6,208.7 31.3,212.6 25.3,271.7 -27.5,275.6" fill="#686a74"/><circle cx="2.9" cy="240.0" r="6.1" fill="#777a84" opacity=".35"/><polygon points="31.6,-29.7 100.4,-26.0 92.2,14.9 45.4,32.2" fill="#857a6a"/><circle cx="66.7" cy="1.0" r="7.6" fill="#3e4352" opacity=".35"/><polygon points="45.2,35.1 91.4,18.0 70.8,101.2 24.1,79.2" fill="#50566a"/><circle cx="59.4" cy="53.7" r="6.7" fill="#777a84" opacity=".35"/><polygon points="24.9,83.5 69.5,104.5 76.6,132.8 31.0,127.7" fill="#857a6a"/><circle cx="46.4" cy="109.8" r="5.9" fill="#777a84" opacity=".35"/><polygon points="31.8,133.4 77.7,138.4 97.1,208.0 35.3,207.5" fill="#7a7062"/><circle cx="57.5" cy="172.9" r="3.3" fill="#777a84" opacity=".35"/><polygon points="34.1,212.6 98.5,213.1 73.1,253.9 28.1,271.2" fill="#50566a"/><circle cx="57.8" cy="238.0" r="4.9" fill="#8c806e" opacity=".35"/><polygon points="102.9,-25.4 134.4,-34.5 126.8,27.3 94.9,14.2" fill="#5e6270"/><circle cx="117.9" cy="-8.2" r="3.2" fill="#8c806e" opacity=".35"/><polygon points="94.2,18.4 126.5,31.7 136.2,81.7 73.9,100.8" fill="#7a7062"/><circle cx="110.6" cy="55.4" r="3.6" fill="#3e4352" opacity=".35"/><polygon points="74.8,104.6 135.1,86.2 131.4,129.7 82.0,133.0" fill="#6e6a66"/><circle cx="105.8" cy="111.5" r="3.2" fill="#777a84" opacity=".35"/><polygon points="81.1,136.9 132.9,133.5 127.8,213.9 101.3,209.8" fill="#5e6270"/><circle cx="113.8" cy="173.5" r="4.5" fill="#3e4352" opacity=".35"/><polygon points="101.9,213.7 127.6,217.6 150.4,260.9 77.1,253.3" fill="#7a7062"/><circle cx="116.5" cy="232.4" r="4.9" fill="#3e4352" opacity=".35"/><polygon points="138.1,-34.4 187.5,-38.3 187.3,20.2 130.6,26.8" fill="#5e6270"/><circle cx="161.2" cy="-3.0" r="4.3" fill="#8c806e" opacity=".35"/><polygon points="130.3,31.7 187.6,25.0 185.6,77.3 139.9,81.1" fill="#7a7062"/><circle cx="157.2" cy="53.6" r="5.3" fill="#3e4352" opacity=".35"/><polygon points="139.7,84.8 186.1,80.9 190.8,132.6 135.8,129.9" fill="#7a7062"/><circle cx="158.2" cy="102.3" r="3.7" fill="#8c806e" opacity=".35"/><polygon points="136.6,134.5 190.6,137.2 205.0,199.1 131.7,212.4" fill="#686a74"/><circle cx="163.3" cy="172.0" r="7.1" fill="#3e4352" opacity=".35"/><polygon points="132.0,217.3 205.8,203.9 200.0,254.5 155.0,261.0" fill="#857a6a"/><circle cx="173.9" cy="238.7" r="4.3" fill="#8c806e" opacity=".35"/><polygon points="192.7,-38.3 259.2,-18.0 251.8,12.4 192.6,20.3" fill="#857a6a"/><circle cx="228.9" cy="-7.5" r="3.6" fill="#8c806e" opacity=".35"/><polygon points="191.8,24.3 252.4,16.2 258.1,80.8 189.8,77.4" fill="#857a6a"/><circle cx="221.3" cy="52.8" r="3.2" fill="#8c806e" opacity=".35"/><polygon points="190.0,80.8 258.4,84.2 268.2,130.0 194.8,132.7" fill="#7a7062"/><circle cx="228.0" cy="109.8" r="4.9" fill="#8c806e" opacity=".35"/><polygon points="194.8,135.7 269.1,133.0 272.1,185.0 209.7,199.7" fill="#857a6a"/><circle cx="233.3" cy="160.3" r="7.4" fill="#3e4352" opacity=".35"/><polygon points="209.7,202.7 272.2,188.0 261.2,257.4 203.8,254.6" fill="#6e6a66"/><circle cx="234.6" cy="228.0" r="7.5" fill="#777a84" opacity=".35"/></g></symbol></defs></svg><div class="a" style="left:1px;top:2px;width:282px;height:83px;background:#4a4a4a"></div><div class="a" style="left:1px;top:85px;width:282px;height:242px;background:#272727;border-radius:0 0 5px 5px"></div><div class="a" style="left:0;top:20px;width:9px;height:17px;background:#3c3c3c;border-radius:0 4px 4px 0"></div><svg class="a" style="left:1px;top:23px" width="8" height="11"><path d="M2 1.5 L6 5.5 L2 9.5" stroke="#8a8a8a" stroke-width="1.2" fill="none"/></svg><div class="btn" style="left:11px;top:13px;width:122px;height:29px"></div><div class="a" style="left:40px;top:13px;width:1px;height:29px;background:#3a3a3a"></div><div class="a" style="left:71px;top:13px;width:1px;height:29px;background:#3a3a3a"></div><div class="a" style="left:102px;top:13px;width:1px;height:29px;background:#3a3a3a"></div><svg class="a" style="left:0;top:0" width="140" height="45"><path d="M18.5 27.6 H34 M23.8 22.2 L18.5 27.6 L23.8 33" stroke="#e6e6e6" stroke-width="1.3" fill="none" stroke-linecap="round" stroke-linejoin="round"/><path d="M47.5 27.6 H63 M57.7 22.2 L63 27.6 L57.7 33" stroke="#e6e6e6" stroke-width="1.3" fill="none" stroke-linecap="round" stroke-linejoin="round"/><path d="M85.3 19.5 V35.6 H94.2 M80.3 24.3 L85.3 19.3 L90.3 24.3" stroke="#e6e6e6" stroke-width="1.3" fill="none" stroke-linecap="round" stroke-linejoin="round"/><path d="M124.8 23.5 A7 7 0 0 0 111.3 24.8 M111.5 31.5 A7 7 0 0 0 125 30.2 M125.6 18.5 V24.2 H120.2 M110.7 36 V30.4 H116" stroke="#e6e6e6" stroke-width="1.3" fill="none" stroke-linecap="round" stroke-linejoin="round"/></svg><div class="btn" style="left:147px;top:13px;width:29px;height:29px"></div><svg class="a" style="left:147px;top:13px" width="29" height="29"><path d="M7.5 10 H11.5 L12.5 11.5 H15 M7.5 10 V23 H21.5 V16" stroke="#c8c8c8" stroke-width="1.3" fill="none"/><circle cx="20.5" cy="10" r="4.3" fill="#e6e6e6"/><path d="M20.5 7.5V12.5M18 10H23" stroke="#595959" stroke-width="1.2"/></svg><div class="fld" style="left:188px;top:13px;width:85px;height:29px"></div><div class="t" style="left:196px;top:20px;font-size:13.2px;color:#e6e6e6">C:\Users\d...</div><div class="fld" style="left:11px;top:46px;width:56px;height:29px"></div><svg class="a" style="left:0;top:0" width="40" height="80"><circle cx="26.7" cy="57.6" r="6" stroke="#e0e0e0" stroke-width="1.3" fill="none"/><path d="M22.5 62 L16 68.5" stroke="#e0e0e0" stroke-width="1.4" stroke-linecap="round"/></svg><div class="btn" style="left:79px;top:46px;width:91px;height:29px;border-radius:4px 0 0 4px"></div><div class="a" style="left:108px;top:46px;width:1px;height:29px;background:#3a3a3a"></div><div class="a" style="left:139px;top:46px;width:30px;height:29px;background:#5680c2"></div><div class="a" style="left:169px;top:46px;width:30px;height:29px;background:#2b2b2b;border-radius:0 4px 4px 0"></div><svg class="a" style="left:79px;top:46px" width="120" height="29"><g fill="none" stroke="#cfcfcf" stroke-width="1"><rect x="5.5" y="5.5" width="4" height="15"/><path d="M5.5 9.5h4M5.5 13.5h4M5.5 17h4"/><rect x="35.5" y="5.5" width="4" height="15"/><path d="M35.5 9.5h4M35.5 13.5h4M35.5 17h4"/><rect x="42.5" y="5.5" width="4" height="8"/><path d="M42.5 9.5h4"/></g><g fill="#cfcfcf"><rect x="12.0" y="7" width="1.2" height="1.2"/><rect x="14.0" y="7" width="1.2" height="1.2"/><rect x="16.0" y="7" width="1.2" height="1.2"/><rect x="18.0" y="7" width="1.2" height="1.2"/><rect x="20.0" y="7" width="1.2" height="1.2"/><rect x="12.0" y="10.5" width="1.2" height="1.2"/><rect x="14.0" y="10.5" width="1.2" height="1.2"/><rect x="16.0" y="10.5" width="1.2" height="1.2"/><rect x="18.0" y="10.5" width="1.2" height="1.2"/><rect x="20.0" y="10.5" width="1.2" height="1.2"/><rect x="12.0" y="14" width="1.2" height="1.2"/><rect x="14.0" y="14" width="1.2" height="1.2"/><rect x="16.0" y="14" width="1.2" height="1.2"/><rect x="18.0" y="14" width="1.2" height="1.2"/><rect x="20.0" y="14" width="1.2" height="1.2"/><rect x="48.5" y="6.5" width="1.5" height="1.5"/><rect x="48.5" y="10" width="1.5" height="1.5"/><rect x="41" y="17" width="1.5" height="1.5"/><rect x="41" y="13.5" width="1.5" height="1.5"/></g><g fill="none" stroke="#fff" stroke-width="1.4"><rect x="66" y="7" width="4.5" height="6"/><rect x="76" y="7" width="4.5" height="6"/><rect x="66" y="16.5" width="4.5" height="6"/><rect x="76" y="16.5" width="4.5" height="6"/></g><path d="M105 13 L109 17 L113 13" stroke="#e6e6e6" stroke-width="1.4" fill="none"/></svg><div class="a" style="left:212px;top:46px;width:29px;height:29px;background:#5680c2;border-radius:4px 0 0 4px"></div><div class="a" style="left:241px;top:46px;width:31px;height:29px;background:#2b2b2b;border-radius:0 4px 4px 0"></div><svg class="a" style="left:212px;top:46px" width="60" height="29"><path d="M6 7.5 H23 L16.5 15 V22.5 L13 18 V15 Z" stroke="#fff" stroke-width="1.4" fill="none" stroke-linejoin="round"/><path d="M38 13 L42 17 L46 13" stroke="#e6e6e6" stroke-width="1.4" fill="none"/></svg><svg class="a" style="left:14px;top:102px" width="80" height="70"><use href="#w1" width="80" height="70"/><rect x="0.5" y="0.5" width="79" height="69" fill="none" stroke="#cfc8bd" stroke-width="1" opacity=".6"/><g transform="translate(5,52)"><rect x=".5" y=".5" width="16" height="16" fill="none" stroke="#e8e8e8" stroke-width="1" opacity=".8"/><path d="M1.5 16.5 L7 8 L12.5 16.5Z" fill="#e8e8e8" opacity=".85"/><rect x="11" y="3" width="3" height="3" fill="#e8e8e8" opacity=".8"/></g></svg><svg class="a" style="left:119px;top:102px" width="80" height="71"><use href="#w2" width="80" height="71"/><rect x="0.5" y="0.5" width="79" height="70" fill="none" stroke="#cfc8bd" stroke-width="1" opacity=".6"/><g transform="translate(5,53)"><rect x=".5" y=".5" width="16" height="16" fill="none" stroke="#e8e8e8" stroke-width="1" opacity=".8"/><path d="M1.5 16.5 L7 8 L12.5 16.5Z" fill="#e8e8e8" opacity=".85"/><rect x="11" y="3" width="3" height="3" fill="#e8e8e8" opacity=".8"/></g></svg><svg class="a" style="left:14px;top:220px" width="80" height="70"><use href="#w3" width="80" height="70"/><rect x="0.5" y="0.5" width="79" height="69" fill="none" stroke="#cfc8bd" stroke-width="1" opacity=".6"/><g transform="translate(5,52)"><rect x=".5" y=".5" width="16" height="16" fill="none" stroke="#e8e8e8" stroke-width="1" opacity=".8"/><path d="M1.5 16.5 L7 8 L12.5 16.5Z" fill="#e8e8e8" opacity=".85"/><rect x="11" y="3" width="3" height="3" fill="#e8e8e8" opacity=".8"/></g></svg><svg class="a" style="left:131px;top:215px" width="56" height="79"><use href="#w4" width="56" height="79"/><rect x="0.5" y="0.5" width="55" height="78" fill="none" stroke="#cfc8bd" stroke-width="1" opacity=".6"/><g transform="translate(5,61)"><rect x=".5" y=".5" width="16" height="16" fill="none" stroke="#e8e8e8" stroke-width="1" opacity=".8"/><path d="M1.5 16.5 L7 8 L12.5 16.5Z" fill="#e8e8e8" opacity=".85"/><rect x="11" y="3" width="3" height="3" fill="#e8e8e8" opacity=".8"/></g></svg><div class="t" style="left:9px;top:186px;font-size:13.4px;color:#dcdcdc">Castle wall 1....</div><div class="t" style="left:114px;top:186px;font-size:13.4px;color:#dcdcdc">Castle wall 2....</div><div class="t" style="left:9px;top:304px;font-size:13.4px;color:#dcdcdc">Castle wall 3....</div><div class="t" style="left:114px;top:304px;font-size:13.4px;color:#dcdcdc">Castle wall 4....</div><div class="a" style="left:286px;top:2px;width:1250px;height:326px;overflow:hidden;border-radius:5px 0 0 5px;background:linear-gradient(182.7deg,#c9c6c1 0%,#c6c3be 40%,#c3c1bc 59.2%,#c4c4c6 61.3%,#c7cad2 63.3%,#c9ccd4 100%)"><svg class="a" style="left:0;top:0" width="1250" height="326"><defs><clipPath id="tw"><path d="M491.4 91.2 L544 91.2 L574 92.5 L574 110 L588 107.3 L608.6 107.3 L608.6 236 L615.6 238 L615.6 286 Q551 313 486 286 L486 234 L491.4 233 Z"/></clipPath><radialGradient id="sph" cx="38%" cy="38%" r="68%"><stop offset="0" stop-color="#d6d3ce"/><stop offset=".55" stop-color="#c4c0ba"/><stop offset=".85" stop-color="#aaa69f"/><stop offset="1" stop-color="#9a968f"/></radialGradient><linearGradient id="tsh" x1="0" y1="0" x2="1" y2="0"><stop offset="0" stop-color="#000" stop-opacity=".25"/><stop offset=".25" stop-color="#000" stop-opacity="0"/><stop offset=".8" stop-color="#000" stop-opacity="0"/><stop offset="1" stop-color="#000" stop-opacity=".2"/></linearGradient><linearGradient id="obj" x1="0" y1="0" x2="0" y2="1"><stop offset="0" stop-color="#7d8272"/><stop offset="1" stop-color="#5c5f5a"/></linearGradient></defs><path d="M0 0 L53 0 L38 140 Q33 184 4 188 L0 189 Z" fill="url(#obj)"/><g clip-path="url(#tw)"><rect x="480" y="85" width="140" height="230" fill="#6c6b6a"/><rect x="480.3" y="232.0" width="10.7" height="3.1" fill="#626670"/><rect x="490.9" y="232.0" width="12.3" height="3.1" fill="#8a8680"/><rect x="503.2" y="232.0" width="11.6" height="3.1" fill="#9a9078"/><rect x="514.8" y="232.0" width="9.8" height="3.1" fill="#5c6270"/><rect x="524.6" y="232.0" width="5.0" height="3.1" fill="#707580"/><rect x="529.7" y="232.0" width="11.8" height="3.1" fill="#a89c84"/><rect x="541.5" y="232.0" width="8.9" height="3.1" fill="#4c5260"/><rect x="550.4" y="232.0" width="6.2" height="3.1" fill="#9a9078"/><rect x="556.6" y="232.0" width="7.7" height="3.1" fill="#5c6270"/><rect x="564.3" y="232.0" width="12.2" height="3.1" fill="#a89c84"/><rect x="576.5" y="232.0" width="5.4" height="3.1" fill="#6f7380"/><rect x="582.0" y="232.0" width="5.2" height="3.1" fill="#4c5260"/><rect x="587.2" y="232.0" width="8.0" height="3.1" fill="#5c6270"/><rect x="595.2" y="232.0" width="4.0" height="3.1" fill="#8a8680"/><rect x="599.2" y="232.0" width="5.9" height="3.1" fill="#9a9078"/><rect x="605.1" y="232.0" width="12.6" height="3.1" fill="#5c6270"/><rect x="617.8" y="232.0" width="11.9" height="3.1" fill="#7c7a78"/><rect x="482.1" y="234.7" width="5.8" height="3.1" fill="#626670"/><rect x="487.9" y="234.7" width="9.6" height="3.1" fill="#5c6270"/><rect x="497.5" y="234.7" width="12.5" height="3.1" fill="#9a9078"/><rect x="510.0" y="234.7" width="12.7" height="3.1" fill="#a89c84"/><rect x="522.7" y="234.7" width="6.7" height="3.1" fill="#56606e"/><rect x="529.4" y="234.7" width="7.7" height="3.1" fill="#5c6270"/><rect x="537.1" y="234.7" width="6.4" height="3.1" fill="#56606e"/><rect x="543.5" y="234.7" width="6.7" height="3.1" fill="#4c5260"/><rect x="550.2" y="234.7" width="9.3" height="3.1" fill="#4c5260"/><rect x="559.5" y="234.7" width="10.1" height="3.1" fill="#56606e"/><rect x="569.6" y="234.7" width="4.6" height="3.1" fill="#56606e"/><rect x="574.2" y="234.7" width="11.4" height="3.1" fill="#707580"/><rect x="585.6" y="234.7" width="10.3" height="3.1" fill="#5c6270"/><rect x="595.8" y="234.7" width="8.3" height="3.1" fill="#5c6270"/><rect x="604.2" y="234.7" width="4.5" height="3.1" fill="#8a8680"/><rect x="608.7" y="234.7" width="12.5" height="3.1" fill="#56606e"/><rect x="478.9" y="237.4" width="4.2" height="3.1" fill="#a89c84"/><rect x="483.1" y="237.4" width="7.3" height="3.1" fill="#4c5260"/><rect x="490.4" y="237.4" width="11.6" height="3.1" fill="#707580"/><rect x="502.0" y="237.4" width="4.4" height="3.1" fill="#5c6270"/><rect x="506.4" y="237.4" width="9.6" height="3.1" fill="#9a9078"/><rect x="516.0" y="237.4" width="5.1" height="3.1" fill="#9a9078"/><rect x="521.1" y="237.4" width="12.4" height="3.1" fill="#707580"/><rect x="533.4" y="237.4" width="7.1" height="3.1" fill="#56606e"/><rect x="540.5" y="237.4" width="12.0" height="3.1" fill="#7c7a78"/><rect x="552.6" y="237.4" width="11.0" height="3.1" fill="#6f7380"/><rect x="563.5" y="237.4" width="9.3" height="3.1" fill="#56606e"/><rect x="572.9" y="237.4" width="11.7" height="3.1" fill="#8a8680"/><rect x="584.6" y="237.4" width="7.9" height="3.1" fill="#6f7380"/><rect x="592.5" y="237.4" width="5.9" height="3.1" fill="#8c8a88"/><rect x="598.4" y="237.4" width="9.5" height="3.1" fill="#5c6270"/><rect x="607.9" y="237.4" width="7.1" height="3.1" fill="#8c8a88"/><rect x="614.9" y="237.4" width="4.8" height="3.1" fill="#626670"/><rect x="482.1" y="240.1" width="5.6" height="3.1" fill="#6f7380"/><rect x="487.7" y="240.1" width="9.6" height="3.1" fill="#7c7a78"/><rect x="497.3" y="240.1" width="13.0" height="3.1" fill="#5c6270"/><rect x="510.3" y="240.1" width="10.5" height="3.1" fill="#6f7380"/><rect x="520.8" y="240.1" width="12.9" height="3.1" fill="#8c8a88"/><rect x="533.7" y="240.1" width="12.3" height="3.1" fill="#8a8680"/><rect x="546.0" y="240.1" width="6.1" height="3.1" fill="#4c5260"/><rect x="552.1" y="240.1" width="7.1" height="3.1" fill="#7c7a78"/><rect x="559.2" y="240.1" width="8.1" height="3.1" fill="#a89c84"/><rect x="567.3" y="240.1" width="5.3" height="3.1" fill="#626670"/><rect x="572.6" y="240.1" width="4.3" height="3.1" fill="#707580"/><rect x="576.9" y="240.1" width="7.0" height="3.1" fill="#9a9078"/><rect x="583.9" y="240.1" width="5.2" height="3.1" fill="#4c5260"/><rect x="589.1" y="240.1" width="12.5" height="3.1" fill="#626670"/><rect x="601.6" y="240.1" width="12.1" height="3.1" fill="#a89c84"/><rect x="613.7" y="240.1" width="5.0" height="3.1" fill="#a89c84"/><rect x="481.8" y="242.8" width="4.5" height="3.1" fill="#a89c84"/><rect x="486.3" y="242.8" width="6.7" height="3.1" fill="#707580"/><rect x="492.9" y="242.8" width="12.3" height="3.1" fill="#4c5260"/><rect x="505.2" y="242.8" width="11.7" height="3.1" fill="#8c8a88"/><rect x="516.9" y="242.8" width="8.1" height="3.1" fill="#707580"/><rect x="525.0" y="242.8" width="10.2" height="3.1" fill="#56606e"/><rect x="535.2" y="242.8" width="8.3" height="3.1" fill="#7c7a78"/><rect x="543.5" y="242.8" width="8.2" height="3.1" fill="#5c6270"/><rect x="551.7" y="242.8" width="5.0" height="3.1" fill="#8c8a88"/><rect x="556.7" y="242.8" width="12.6" height="3.1" fill="#626670"/><rect x="569.4" y="242.8" width="12.4" height="3.1" fill="#56606e"/><rect x="581.8" y="242.8" width="5.6" height="3.1" fill="#707580"/><rect x="587.4" y="242.8" width="6.5" height="3.1" fill="#8c8a88"/><rect x="593.9" y="242.8" width="11.8" height="3.1" fill="#56606e"/><rect x="605.7" y="242.8" width="4.6" height="3.1" fill="#56606e"/><rect x="610.3" y="242.8" width="10.3" height="3.1" fill="#626670"/><rect x="483.8" y="245.5" width="6.8" height="3.1" fill="#8c8a88"/><rect x="490.5" y="245.5" width="10.3" height="3.1" fill="#7c7a78"/><rect x="500.9" y="245.5" width="11.5" height="3.1" fill="#7c7a78"/><rect x="512.4" y="245.5" width="10.9" height="3.1" fill="#7c7a78"/><rect x="523.3" y="245.5" width="12.6" height="3.1" fill="#56606e"/><rect x="535.9" y="245.5" width="9.8" height="3.1" fill="#4c5260"/><rect x="545.8" y="245.5" width="11.7" height="3.1" fill="#707580"/><rect x="557.5" y="245.5" width="8.9" height="3.1" fill="#7c7a78"/><rect x="566.4" y="245.5" width="6.9" height="3.1" fill="#7c7a78"/><rect x="573.3" y="245.5" width="8.2" height="3.1" fill="#8c8a88"/><rect x="581.5" y="245.5" width="9.8" height="3.1" fill="#56606e"/><rect x="591.3" y="245.5" width="7.1" height="3.1" fill="#626670"/><rect x="598.4" y="245.5" width="7.1" height="3.1" fill="#a89c84"/><rect x="605.5" y="245.5" width="7.2" height="3.1" fill="#5c6270"/><rect x="612.7" y="245.5" width="11.8" height="3.1" fill="#707580"/><rect x="478.1" y="248.2" width="12.6" height="3.1" fill="#8c8a88"/><rect x="490.8" y="248.2" width="5.3" height="3.1" fill="#5c6270"/><rect x="496.0" y="248.2" width="5.8" height="3.1" fill="#56606e"/><rect x="501.8" y="248.2" width="12.4" height="3.1" fill="#707580"/><rect x="514.3" y="248.2" width="6.5" height="3.1" fill="#6f7380"/><rect x="520.8" y="248.2" width="10.5" height="3.1" fill="#a89c84"/><rect x="531.3" y="248.2" width="5.5" height="3.1" fill="#4c5260"/><rect x="536.8" y="248.2" width="8.6" height="3.1" fill="#a89c84"/><rect x="545.5" y="248.2" width="6.7" height="3.1" fill="#8c8a88"/><rect x="552.2" y="248.2" width="11.0" height="3.1" fill="#626670"/><rect x="563.2" y="248.2" width="6.4" height="3.1" fill="#8a8680"/><rect x="569.6" y="248.2" width="5.8" height="3.1" fill="#4c5260"/><rect x="575.4" y="248.2" width="8.0" height="3.1" fill="#626670"/><rect x="583.3" y="248.2" width="5.6" height="3.1" fill="#626670"/><rect x="589.0" y="248.2" width="5.6" height="3.1" fill="#8a8680"/><rect x="594.6" y="248.2" width="12.9" height="3.1" fill="#9a9078"/><rect x="607.5" y="248.2" width="5.5" height="3.1" fill="#5c6270"/><rect x="613.0" y="248.2" width="5.0" height="3.1" fill="#5c6270"/><rect x="618.0" y="248.2" width="8.3" height="3.1" fill="#8c8a88"/><rect x="483.8" y="250.9" width="8.2" height="3.1" fill="#a89c84"/><rect x="492.0" y="250.9" width="10.0" height="3.1" fill="#6f7380"/><rect x="501.9" y="250.9" width="9.3" height="3.1" fill="#9a9078"/><rect x="511.2" y="250.9" width="10.5" height="3.1" fill="#56606e"/><rect x="521.7" y="250.9" width="4.0" height="3.1" fill="#a89c84"/><rect x="525.7" y="250.9" width="12.6" height="3.1" fill="#a89c84"/><rect x="538.3" y="250.9" width="11.8" height="3.1" fill="#8c8a88"/><rect x="550.1" y="250.9" width="7.4" height="3.1" fill="#8a8680"/><rect x="557.4" y="250.9" width="8.9" height="3.1" fill="#7c7a78"/><rect x="566.4" y="250.9" width="4.9" height="3.1" fill="#8c8a88"/><rect x="571.3" y="250.9" width="8.6" height="3.1" fill="#4c5260"/><rect x="579.9" y="250.9" width="6.6" height="3.1" fill="#56606e"/><rect x="586.5" y="250.9" width="11.4" height="3.1" fill="#a89c84"/><rect x="597.9" y="250.9" width="7.7" height="3.1" fill="#4c5260"/><rect x="605.6" y="250.9" width="9.8" height="3.1" fill="#56606e"/><rect x="615.3" y="250.9" width="8.2" height="3.1" fill="#5c6270"/><rect x="480.4" y="253.6" width="9.1" height="3.1" fill="#9a9078"/><rect x="489.5" y="253.6" width="12.7" height="3.1" fill="#4c5260"/><rect x="502.2" y="253.6" width="4.8" height="3.1" fill="#626670"/><rect x="507.0" y="253.6" width="4.0" height="3.1" fill="#6f7380"/><rect x="511.0" y="253.6" width="6.9" height="3.1" fill="#4c5260"/><rect x="518.0" y="253.6" width="8.9" height="3.1" fill="#56606e"/><rect x="526.8" y="253.6" width="9.7" height="3.1" fill="#4c5260"/><rect x="536.5" y="253.6" width="7.4" height="3.1" fill="#a89c84"/><rect x="543.9" y="253.6" width="12.8" height="3.1" fill="#707580"/><rect x="556.7" y="253.6" width="6.6" height="3.1" fill="#a89c84"/><rect x="563.3" y="253.6" width="7.5" height="3.1" fill="#5c6270"/><rect x="570.7" y="253.6" width="9.4" height="3.1" fill="#7c7a78"/><rect x="580.1" y="253.6" width="10.7" height="3.1" fill="#7c7a78"/><rect x="590.8" y="253.6" width="8.5" height="3.1" fill="#a89c84"/><rect x="599.2" y="253.6" width="4.2" height="3.1" fill="#7c7a78"/><rect x="603.4" y="253.6" width="8.4" height="3.1" fill="#7c7a78"/><rect x="611.8" y="253.6" width="5.3" height="3.1" fill="#8a8680"/><rect x="617.1" y="253.6" width="5.1" height="3.1" fill="#4c5260"/><rect x="478.2" y="256.3" width="6.2" height="3.1" fill="#8a8680"/><rect x="484.4" y="256.3" width="11.0" height="3.1" fill="#a89c84"/><rect x="495.5" y="256.3" width="4.1" height="3.1" fill="#8c8a88"/><rect x="499.6" y="256.3" width="9.0" height="3.1" fill="#9a9078"/><rect x="508.6" y="256.3" width="12.4" height="3.1" fill="#8a8680"/><rect x="521.1" y="256.3" width="6.2" height="3.1" fill="#7c7a78"/><rect x="527.3" y="256.3" width="11.6" height="3.1" fill="#7c7a78"/><rect x="538.9" y="256.3" width="6.6" height="3.1" fill="#4c5260"/><rect x="545.5" y="256.3" width="12.9" height="3.1" fill="#8c8a88"/><rect x="558.4" y="256.3" width="9.8" height="3.1" fill="#4c5260"/><rect x="568.2" y="256.3" width="11.9" height="3.1" fill="#6f7380"/><rect x="580.2" y="256.3" width="4.1" height="3.1" fill="#5c6270"/><rect x="584.3" y="256.3" width="6.7" height="3.1" fill="#8c8a88"/><rect x="591.0" y="256.3" width="10.4" height="3.1" fill="#4c5260"/><rect x="601.4" y="256.3" width="6.7" height="3.1" fill="#8c8a88"/><rect x="608.1" y="256.3" width="4.2" height="3.1" fill="#56606e"/><rect x="612.3" y="256.3" width="7.2" height="3.1" fill="#4c5260"/><rect x="483.2" y="259.0" width="4.0" height="3.1" fill="#8c8a88"/><rect x="487.2" y="259.0" width="8.1" height="3.1" fill="#6f7380"/><rect x="495.3" y="259.0" width="12.0" height="3.1" fill="#8c8a88"/><rect x="507.3" y="259.0" width="5.7" height="3.1" fill="#a89c84"/><rect x="513.0" y="259.0" width="11.0" height="3.1" fill="#a89c84"/><rect x="524.0" y="259.0" width="9.4" height="3.1" fill="#626670"/><rect x="533.4" y="259.0" width="9.8" height="3.1" fill="#a89c84"/><rect x="543.2" y="259.0" width="8.3" height="3.1" fill="#626670"/><rect x="551.5" y="259.0" width="11.7" height="3.1" fill="#9a9078"/><rect x="563.2" y="259.0" width="12.1" height="3.1" fill="#707580"/><rect x="575.3" y="259.0" width="11.5" height="3.1" fill="#6f7380"/><rect x="586.8" y="259.0" width="6.7" height="3.1" fill="#8a8680"/><rect x="593.5" y="259.0" width="10.3" height="3.1" fill="#a89c84"/><rect x="603.7" y="259.0" width="9.2" height="3.1" fill="#626670"/><rect x="613.0" y="259.0" width="11.0" height="3.1" fill="#7c7a78"/><rect x="483.1" y="261.7" width="8.3" height="3.1" fill="#8c8a88"/><rect x="491.4" y="261.7" width="12.0" height="3.1" fill="#56606e"/><rect x="503.4" y="261.7" width="8.8" height="3.1" fill="#a89c84"/><rect x="512.3" y="261.7" width="9.3" height="3.1" fill="#8a8680"/><rect x="521.6" y="261.7" width="4.6" height="3.1" fill="#9a9078"/><rect x="526.2" y="261.7" width="6.4" height="3.1" fill="#6f7380"/><rect x="532.6" y="261.7" width="11.1" height="3.1" fill="#626670"/><rect x="543.7" y="261.7" width="12.5" height="3.1" fill="#56606e"/><rect x="556.2" y="261.7" width="10.5" height="3.1" fill="#6f7380"/><rect x="566.7" y="261.7" width="13.0" height="3.1" fill="#707580"/><rect x="579.7" y="261.7" width="4.4" height="3.1" fill="#6f7380"/><rect x="584.1" y="261.7" width="6.0" height="3.1" fill="#626670"/><rect x="590.1" y="261.7" width="11.4" height="3.1" fill="#6f7380"/><rect x="601.5" y="261.7" width="10.4" height="3.1" fill="#5c6270"/><rect x="611.9" y="261.7" width="12.9" height="3.1" fill="#707580"/><rect x="483.1" y="264.4" width="9.5" height="3.1" fill="#a89c84"/><rect x="492.6" y="264.4" width="11.2" height="3.1" fill="#6f7380"/><rect x="503.8" y="264.4" width="9.6" height="3.1" fill="#8a8680"/><rect x="513.4" y="264.4" width="9.0" height="3.1" fill="#626670"/><rect x="522.4" y="264.4" width="7.4" height="3.1" fill="#6f7380"/><rect x="529.8" y="264.4" width="6.5" height="3.1" fill="#4c5260"/><rect x="536.3" y="264.4" width="9.2" height="3.1" fill="#a89c84"/><rect x="545.5" y="264.4" width="11.9" height="3.1" fill="#5c6270"/><rect x="557.4" y="264.4" width="4.1" height="3.1" fill="#6f7380"/><rect x="561.5" y="264.4" width="6.8" height="3.1" fill="#4c5260"/><rect x="568.4" y="264.4" width="8.4" height="3.1" fill="#56606e"/><rect x="576.8" y="264.4" width="12.4" height="3.1" fill="#56606e"/><rect x="589.2" y="264.4" width="12.2" height="3.1" fill="#5c6270"/><rect x="601.4" y="264.4" width="10.3" height="3.1" fill="#5c6270"/><rect x="611.7" y="264.4" width="9.1" height="3.1" fill="#626670"/><rect x="481.0" y="267.1" width="12.2" height="3.1" fill="#8c8a88"/><rect x="493.2" y="267.1" width="8.9" height="3.1" fill="#9a9078"/><rect x="502.1" y="267.1" width="6.4" height="3.1" fill="#8c8a88"/><rect x="508.5" y="267.1" width="6.1" height="3.1" fill="#7c7a78"/><rect x="514.6" y="267.1" width="8.7" height="3.1" fill="#5c6270"/><rect x="523.3" y="267.1" width="11.3" height="3.1" fill="#56606e"/><rect x="534.5" y="267.1" width="8.1" height="3.1" fill="#a89c84"/><rect x="542.6" y="267.1" width="5.6" height="3.1" fill="#8a8680"/><rect x="548.2" y="267.1" width="9.9" height="3.1" fill="#6f7380"/><rect x="558.1" y="267.1" width="9.2" height="3.1" fill="#8a8680"/><rect x="567.3" y="267.1" width="4.8" height="3.1" fill="#6f7380"/><rect x="572.1" y="267.1" width="8.6" height="3.1" fill="#707580"/><rect x="580.6" y="267.1" width="6.1" height="3.1" fill="#707580"/><rect x="586.8" y="267.1" width="8.3" height="3.1" fill="#56606e"/><rect x="595.1" y="267.1" width="5.0" height="3.1" fill="#8c8a88"/><rect x="600.1" y="267.1" width="4.3" height="3.1" fill="#a89c84"/><rect x="604.4" y="267.1" width="4.5" height="3.1" fill="#5c6270"/><rect x="608.8" y="267.1" width="12.5" height="3.1" fill="#a89c84"/><rect x="479.9" y="269.8" width="6.0" height="3.1" fill="#6f7380"/><rect x="485.9" y="269.8" width="4.8" height="3.1" fill="#626670"/><rect x="490.7" y="269.8" width="8.4" height="3.1" fill="#9a9078"/><rect x="499.1" y="269.8" width="5.3" height="3.1" fill="#4c5260"/><rect x="504.4" y="269.8" width="7.4" height="3.1" fill="#9a9078"/><rect x="511.7" y="269.8" width="6.6" height="3.1" fill="#4c5260"/><rect x="518.3" y="269.8" width="10.3" height="3.1" fill="#a89c84"/><rect x="528.7" y="269.8" width="7.4" height="3.1" fill="#56606e"/><rect x="536.1" y="269.8" width="9.8" height="3.1" fill="#626670"/><rect x="545.9" y="269.8" width="7.9" height="3.1" fill="#56606e"/><rect x="553.8" y="269.8" width="8.7" height="3.1" fill="#4c5260"/><rect x="562.5" y="269.8" width="12.9" height="3.1" fill="#9a9078"/><rect x="575.4" y="269.8" width="10.7" height="3.1" fill="#a89c84"/><rect x="586.1" y="269.8" width="4.6" height="3.1" fill="#8a8680"/><rect x="590.7" y="269.8" width="4.3" height="3.1" fill="#9a9078"/><rect x="595.0" y="269.8" width="5.8" height="3.1" fill="#707580"/><rect x="600.7" y="269.8" width="12.0" height="3.1" fill="#707580"/><rect x="612.7" y="269.8" width="10.0" height="3.1" fill="#56606e"/><rect x="484.0" y="272.5" width="8.2" height="3.1" fill="#4c5260"/><rect x="492.2" y="272.5" width="12.3" height="3.1" fill="#56606e"/><rect x="504.5" y="272.5" width="8.2" height="3.1" fill="#6f7380"/><rect x="512.7" y="272.5" width="5.7" height="3.1" fill="#626670"/><rect x="518.4" y="272.5" width="5.4" height="3.1" fill="#56606e"/><rect x="523.9" y="272.5" width="11.8" height="3.1" fill="#707580"/><rect x="535.7" y="272.5" width="5.4" height="3.1" fill="#7c7a78"/><rect x="541.1" y="272.5" width="5.0" height="3.1" fill="#5c6270"/><rect x="546.1" y="272.5" width="10.8" height="3.1" fill="#626670"/><rect x="556.8" y="272.5" width="6.1" height="3.1" fill="#707580"/><rect x="562.9" y="272.5" width="12.1" height="3.1" fill="#56606e"/><rect x="575.0" y="272.5" width="12.3" height="3.1" fill="#56606e"/><rect x="587.3" y="272.5" width="6.8" height="3.1" fill="#8a8680"/><rect x="594.2" y="272.5" width="10.2" height="3.1" fill="#626670"/><rect x="604.3" y="272.5" width="8.1" height="3.1" fill="#5c6270"/><rect x="612.5" y="272.5" width="5.1" height="3.1" fill="#626670"/><rect x="617.5" y="272.5" width="6.9" height="3.1" fill="#707580"/><rect x="480.0" y="275.2" width="10.6" height="3.1" fill="#5c6270"/><rect x="490.5" y="275.2" width="4.3" height="3.1" fill="#8a8680"/><rect x="494.8" y="275.2" width="9.2" height="3.1" fill="#626670"/><rect x="504.0" y="275.2" width="4.7" height="3.1" fill="#a89c84"/><rect x="508.7" y="275.2" width="12.2" height="3.1" fill="#56606e"/><rect x="520.9" y="275.2" width="10.1" height="3.1" fill="#5c6270"/><rect x="531.0" y="275.2" width="8.2" height="3.1" fill="#7c7a78"/><rect x="539.2" y="275.2" width="4.6" height="3.1" fill="#707580"/><rect x="543.8" y="275.2" width="5.5" height="3.1" fill="#9a9078"/><rect x="549.3" y="275.2" width="5.6" height="3.1" fill="#9a9078"/><rect x="554.9" y="275.2" width="12.5" height="3.1" fill="#626670"/><rect x="567.4" y="275.2" width="9.5" height="3.1" fill="#7c7a78"/><rect x="576.8" y="275.2" width="4.1" height="3.1" fill="#8a8680"/><rect x="580.9" y="275.2" width="8.1" height="3.1" fill="#626670"/><rect x="589.0" y="275.2" width="7.7" height="3.1" fill="#8a8680"/><rect x="596.7" y="275.2" width="4.3" height="3.1" fill="#8c8a88"/><rect x="601.0" y="275.2" width="9.1" height="3.1" fill="#6f7380"/><rect x="610.0" y="275.2" width="10.4" height="3.1" fill="#9a9078"/><rect x="478.6" y="277.9" width="8.4" height="3.1" fill="#707580"/><rect x="487.0" y="277.9" width="4.5" height="3.1" fill="#9a9078"/><rect x="491.5" y="277.9" width="9.8" height="3.1" fill="#707580"/><rect x="501.3" y="277.9" width="7.6" height="3.1" fill="#8a8680"/><rect x="508.9" y="277.9" width="4.4" height="3.1" fill="#a89c84"/><rect x="513.3" y="277.9" width="8.0" height="3.1" fill="#626670"/><rect x="521.3" y="277.9" width="4.5" height="3.1" fill="#8a8680"/><rect x="525.8" y="277.9" width="12.6" height="3.1" fill="#9a9078"/><rect x="538.3" y="277.9" width="5.6" height="3.1" fill="#8c8a88"/><rect x="544.0" y="277.9" width="9.8" height="3.1" fill="#9a9078"/><rect x="553.7" y="277.9" width="8.8" height="3.1" fill="#6f7380"/><rect x="562.5" y="277.9" width="12.3" height="3.1" fill="#6f7380"/><rect x="574.8" y="277.9" width="4.8" height="3.1" fill="#5c6270"/><rect x="579.6" y="277.9" width="9.4" height="3.1" fill="#9a9078"/><rect x="589.0" y="277.9" width="9.6" height="3.1" fill="#707580"/><rect x="598.6" y="277.9" width="8.9" height="3.1" fill="#707580"/><rect x="607.5" y="277.9" width="7.8" height="3.1" fill="#a89c84"/><rect x="615.3" y="277.9" width="8.7" height="3.1" fill="#5c6270"/><rect x="479.6" y="280.6" width="12.2" height="3.1" fill="#7c7a78"/><rect x="491.9" y="280.6" width="10.2" height="3.1" fill="#9a9078"/><rect x="502.1" y="280.6" width="9.0" height="3.1" fill="#5c6270"/><rect x="511.1" y="280.6" width="6.8" height="3.1" fill="#6f7380"/><rect x="517.9" y="280.6" width="11.0" height="3.1" fill="#7c7a78"/><rect x="528.9" y="280.6" width="11.4" height="3.1" fill="#56606e"/><rect x="540.3" y="280.6" width="5.2" height="3.1" fill="#8c8a88"/><rect x="545.4" y="280.6" width="4.7" height="3.1" fill="#9a9078"/><rect x="550.2" y="280.6" width="10.3" height="3.1" fill="#a89c84"/><rect x="560.5" y="280.6" width="12.7" height="3.1" fill="#626670"/><rect x="573.2" y="280.6" width="6.2" height="3.1" fill="#8a8680"/><rect x="579.4" y="280.6" width="8.4" height="3.1" fill="#9a9078"/><rect x="587.8" y="280.6" width="4.4" height="3.1" fill="#9a9078"/><rect x="592.2" y="280.6" width="11.2" height="3.1" fill="#56606e"/><rect x="603.4" y="280.6" width="12.0" height="3.1" fill="#6f7380"/><rect x="615.4" y="280.6" width="7.8" height="3.1" fill="#56606e"/><rect x="481.7" y="283.3" width="10.9" height="3.1" fill="#8a8680"/><rect x="492.6" y="283.3" width="12.1" height="3.1" fill="#626670"/><rect x="504.7" y="283.3" width="12.5" height="3.1" fill="#5c6270"/><rect x="517.2" y="283.3" width="9.2" height="3.1" fill="#707580"/><rect x="526.3" y="283.3" width="5.3" height="3.1" fill="#626670"/><rect x="531.6" y="283.3" width="11.0" height="3.1" fill="#8a8680"/><rect x="542.7" y="283.3" width="10.6" height="3.1" fill="#a89c84"/><rect x="553.2" y="283.3" width="6.4" height="3.1" fill="#a89c84"/><rect x="559.6" y="283.3" width="9.1" height="3.1" fill="#56606e"/><rect x="568.7" y="283.3" width="4.6" height="3.1" fill="#5c6270"/><rect x="573.3" y="283.3" width="5.2" height="3.1" fill="#707580"/><rect x="578.5" y="283.3" width="10.1" height="3.1" fill="#7c7a78"/><rect x="588.6" y="283.3" width="4.3" height="3.1" fill="#8c8a88"/><rect x="592.9" y="283.3" width="10.9" height="3.1" fill="#8c8a88"/><rect x="603.8" y="283.3" width="4.3" height="3.1" fill="#6f7380"/><rect x="608.0" y="283.3" width="4.5" height="3.1" fill="#5c6270"/><rect x="612.5" y="283.3" width="11.4" height="3.1" fill="#a89c84"/><rect x="478.8" y="286.0" width="12.5" height="3.1" fill="#4c5260"/><rect x="491.4" y="286.0" width="4.1" height="3.1" fill="#8c8a88"/><rect x="495.5" y="286.0" width="7.9" height="3.1" fill="#56606e"/><rect x="503.4" y="286.0" width="5.8" height="3.1" fill="#56606e"/><rect x="509.2" y="286.0" width="4.1" height="3.1" fill="#4c5260"/><rect x="513.3" y="286.0" width="9.6" height="3.1" fill="#5c6270"/><rect x="522.9" y="286.0" width="10.5" height="3.1" fill="#6f7380"/><rect x="533.4" y="286.0" width="6.4" height="3.1" fill="#4c5260"/><rect x="539.8" y="286.0" width="5.5" height="3.1" fill="#5c6270"/><rect x="545.4" y="286.0" width="8.0" height="3.1" fill="#a89c84"/><rect x="553.4" y="286.0" width="11.2" height="3.1" fill="#6f7380"/><rect x="564.6" y="286.0" width="7.0" height="3.1" fill="#707580"/><rect x="571.6" y="286.0" width="12.2" height="3.1" fill="#707580"/><rect x="583.8" y="286.0" width="9.4" height="3.1" fill="#5c6270"/><rect x="593.2" y="286.0" width="8.0" height="3.1" fill="#626670"/><rect x="601.1" y="286.0" width="12.4" height="3.1" fill="#8c8a88"/><rect x="613.6" y="286.0" width="8.3" height="3.1" fill="#707580"/><rect x="480.4" y="288.7" width="4.9" height="3.1" fill="#a89c84"/><rect x="485.4" y="288.7" width="10.2" height="3.1" fill="#9a9078"/><rect x="495.5" y="288.7" width="12.8" height="3.1" fill="#8a8680"/><rect x="508.3" y="288.7" width="12.2" height="3.1" fill="#9a9078"/><rect x="520.5" y="288.7" width="8.3" height="3.1" fill="#56606e"/><rect x="528.8" y="288.7" width="7.5" height="3.1" fill="#9a9078"/><rect x="536.4" y="288.7" width="5.8" height="3.1" fill="#9a9078"/><rect x="542.2" y="288.7" width="6.7" height="3.1" fill="#8c8a88"/><rect x="548.9" y="288.7" width="7.2" height="3.1" fill="#9a9078"/><rect x="556.1" y="288.7" width="7.3" height="3.1" fill="#9a9078"/><rect x="563.4" y="288.7" width="11.3" height="3.1" fill="#626670"/><rect x="574.8" y="288.7" width="11.6" height="3.1" fill="#8a8680"/><rect x="586.3" y="288.7" width="9.6" height="3.1" fill="#a89c84"/><rect x="595.9" y="288.7" width="7.1" height="3.1" fill="#5c6270"/><rect x="603.0" y="288.7" width="11.5" height="3.1" fill="#707580"/><rect x="614.5" y="288.7" width="7.4" height="3.1" fill="#6f7380"/><rect x="483.0" y="291.4" width="4.9" height="3.1" fill="#7c7a78"/><rect x="487.9" y="291.4" width="12.1" height="3.1" fill="#9a9078"/><rect x="500.0" y="291.4" width="11.2" height="3.1" fill="#56606e"/><rect x="511.1" y="291.4" width="8.3" height="3.1" fill="#707580"/><rect x="519.4" y="291.4" width="11.8" height="3.1" fill="#4c5260"/><rect x="531.2" y="291.4" width="4.8" height="3.1" fill="#9a9078"/><rect x="536.0" y="291.4" width="7.4" height="3.1" fill="#8a8680"/><rect x="543.4" y="291.4" width="4.9" height="3.1" fill="#4c5260"/><rect x="548.3" y="291.4" width="9.3" height="3.1" fill="#5c6270"/><rect x="557.6" y="291.4" width="11.3" height="3.1" fill="#8a8680"/><rect x="568.9" y="291.4" width="6.9" height="3.1" fill="#8a8680"/><rect x="575.8" y="291.4" width="9.5" height="3.1" fill="#8c8a88"/><rect x="585.3" y="291.4" width="7.4" height="3.1" fill="#707580"/><rect x="592.7" y="291.4" width="8.9" height="3.1" fill="#a89c84"/><rect x="601.6" y="291.4" width="8.0" height="3.1" fill="#4c5260"/><rect x="609.7" y="291.4" width="12.3" height="3.1" fill="#8c8a88"/><rect x="480.0" y="294.1" width="8.8" height="3.1" fill="#a89c84"/><rect x="488.8" y="294.1" width="7.3" height="3.1" fill="#4c5260"/><rect x="496.1" y="294.1" width="4.2" height="3.1" fill="#8c8a88"/><rect x="500.3" y="294.1" width="5.9" height="3.1" fill="#7c7a78"/><rect x="506.1" y="294.1" width="4.7" height="3.1" fill="#6f7380"/><rect x="510.8" y="294.1" width="11.0" height="3.1" fill="#4c5260"/><rect x="521.8" y="294.1" width="9.2" height="3.1" fill="#a89c84"/><rect x="531.0" y="294.1" width="6.8" height="3.1" fill="#8a8680"/><rect x="537.8" y="294.1" width="6.5" height="3.1" fill="#9a9078"/><rect x="544.2" y="294.1" width="4.6" height="3.1" fill="#6f7380"/><rect x="548.9" y="294.1" width="10.0" height="3.1" fill="#7c7a78"/><rect x="558.9" y="294.1" width="12.1" height="3.1" fill="#4c5260"/><rect x="571.0" y="294.1" width="9.5" height="3.1" fill="#9a9078"/><rect x="580.5" y="294.1" width="8.3" height="3.1" fill="#6f7380"/><rect x="588.8" y="294.1" width="12.1" height="3.1" fill="#9a9078"/><rect x="600.9" y="294.1" width="7.1" height="3.1" fill="#8c8a88"/><rect x="608.0" y="294.1" width="7.8" height="3.1" fill="#8a8680"/><rect x="615.8" y="294.1" width="10.0" height="3.1" fill="#a89c84"/><rect x="482.9" y="296.8" width="9.9" height="3.1" fill="#9a9078"/><rect x="492.8" y="296.8" width="12.2" height="3.1" fill="#4c5260"/><rect x="505.0" y="296.8" width="6.9" height="3.1" fill="#56606e"/><rect x="511.9" y="296.8" width="5.0" height="3.1" fill="#8c8a88"/><rect x="516.9" y="296.8" width="10.2" height="3.1" fill="#56606e"/><rect x="527.1" y="296.8" width="6.2" height="3.1" fill="#6f7380"/><rect x="533.3" y="296.8" width="5.9" height="3.1" fill="#7c7a78"/><rect x="539.2" y="296.8" width="11.2" height="3.1" fill="#4c5260"/><rect x="550.4" y="296.8" width="4.7" height="3.1" fill="#5c6270"/><rect x="555.1" y="296.8" width="4.7" height="3.1" fill="#a89c84"/><rect x="559.8" y="296.8" width="10.9" height="3.1" fill="#9a9078"/><rect x="570.7" y="296.8" width="9.9" height="3.1" fill="#4c5260"/><rect x="580.6" y="296.8" width="9.1" height="3.1" fill="#626670"/><rect x="589.7" y="296.8" width="11.9" height="3.1" fill="#a89c84"/><rect x="601.6" y="296.8" width="7.8" height="3.1" fill="#a89c84"/><rect x="609.3" y="296.8" width="8.3" height="3.1" fill="#4c5260"/><rect x="617.7" y="296.8" width="12.1" height="3.1" fill="#7c7a78"/><rect x="481.5" y="299.5" width="4.8" height="3.1" fill="#56606e"/><rect x="486.3" y="299.5" width="5.7" height="3.1" fill="#8a8680"/><rect x="491.9" y="299.5" width="5.3" height="3.1" fill="#7c7a78"/><rect x="497.3" y="299.5" width="9.1" height="3.1" fill="#4c5260"/><rect x="506.3" y="299.5" width="9.1" height="3.1" fill="#a89c84"/><rect x="515.4" y="299.5" width="5.7" height="3.1" fill="#4c5260"/><rect x="521.1" y="299.5" width="4.9" height="3.1" fill="#56606e"/><rect x="526.0" y="299.5" width="10.6" height="3.1" fill="#8a8680"/><rect x="536.6" y="299.5" width="12.6" height="3.1" fill="#5c6270"/><rect x="549.2" y="299.5" width="11.5" height="3.1" fill="#6f7380"/><rect x="560.7" y="299.5" width="6.9" height="3.1" fill="#707580"/><rect x="567.6" y="299.5" width="9.8" height="3.1" fill="#9a9078"/><rect x="577.4" y="299.5" width="12.0" height="3.1" fill="#4c5260"/><rect x="589.4" y="299.5" width="11.6" height="3.1" fill="#707580"/><rect x="601.0" y="299.5" width="11.6" height="3.1" fill="#8a8680"/><rect x="612.5" y="299.5" width="5.7" height="3.1" fill="#5c6270"/><rect x="483.3" y="302.2" width="7.0" height="3.1" fill="#56606e"/><rect x="490.4" y="302.2" width="9.5" height="3.1" fill="#6f7380"/><rect x="499.9" y="302.2" width="9.2" height="3.1" fill="#707580"/><rect x="509.1" y="302.2" width="10.6" height="3.1" fill="#5c6270"/><rect x="519.7" y="302.2" width="10.4" height="3.1" fill="#8c8a88"/><rect x="530.1" y="302.2" width="12.6" height="3.1" fill="#626670"/><rect x="542.7" y="302.2" width="11.8" height="3.1" fill="#6f7380"/><rect x="554.5" y="302.2" width="7.3" height="3.1" fill="#6f7380"/><rect x="561.8" y="302.2" width="5.8" height="3.1" fill="#56606e"/><rect x="567.6" y="302.2" width="7.4" height="3.1" fill="#707580"/><rect x="575.0" y="302.2" width="12.0" height="3.1" fill="#6f7380"/><rect x="587.0" y="302.2" width="6.2" height="3.1" fill="#8c8a88"/><rect x="593.2" y="302.2" width="8.2" height="3.1" fill="#8a8680"/><rect x="601.4" y="302.2" width="5.1" height="3.1" fill="#4c5260"/><rect x="606.4" y="302.2" width="12.7" height="3.1" fill="#5c6270"/><rect x="479.9" y="304.9" width="8.5" height="3.1" fill="#56606e"/><rect x="488.4" y="304.9" width="12.5" height="3.1" fill="#6f7380"/><rect x="500.9" y="304.9" width="8.4" height="3.1" fill="#7c7a78"/><rect x="509.3" y="304.9" width="4.1" height="3.1" fill="#707580"/><rect x="513.4" y="304.9" width="13.0" height="3.1" fill="#9a9078"/><rect x="526.4" y="304.9" width="12.3" height="3.1" fill="#a89c84"/><rect x="538.7" y="304.9" width="5.3" height="3.1" fill="#707580"/><rect x="544.0" y="304.9" width="9.8" height="3.1" fill="#6f7380"/><rect x="553.7" y="304.9" width="9.2" height="3.1" fill="#7c7a78"/><rect x="562.9" y="304.9" width="7.7" height="3.1" fill="#6f7380"/><rect x="570.6" y="304.9" width="8.7" height="3.1" fill="#8a8680"/><rect x="579.3" y="304.9" width="6.0" height="3.1" fill="#9a9078"/><rect x="585.2" y="304.9" width="6.4" height="3.1" fill="#6f7380"/><rect x="591.7" y="304.9" width="5.3" height="3.1" fill="#6f7380"/><rect x="597.0" y="304.9" width="9.0" height="3.1" fill="#a89c84"/><rect x="606.0" y="304.9" width="12.9" height="3.1" fill="#8c8a88"/><rect x="484.9" y="88.0" width="11.7" height="3.3" fill="#9a9078"/><rect x="496.6" y="88.0" width="4.8" height="3.3" fill="#56606e"/><rect x="501.5" y="88.0" width="5.2" height="3.3" fill="#6f7380"/><rect x="506.6" y="88.0" width="4.0" height="3.3" fill="#5c6270"/><rect x="510.7" y="88.0" width="7.2" height="3.3" fill="#8a8680"/><rect x="517.9" y="88.0" width="4.2" height="3.3" fill="#8c8a88"/><rect x="522.1" y="88.0" width="8.1" height="3.3" fill="#a89c84"/><rect x="530.2" y="88.0" width="11.8" height="3.3" fill="#6f7380"/><rect x="542.0" y="88.0" width="4.5" height="3.3" fill="#9a9078"/><rect x="546.5" y="88.0" width="5.7" height="3.3" fill="#707580"/><rect x="552.3" y="88.0" width="4.1" height="3.3" fill="#8c8a88"/><rect x="556.4" y="88.0" width="4.8" height="3.3" fill="#7c7a78"/><rect x="561.1" y="88.0" width="9.4" height="3.3" fill="#626670"/><rect x="570.5" y="88.0" width="8.2" height="3.3" fill="#8a8680"/><rect x="578.8" y="88.0" width="4.5" height="3.3" fill="#a89c84"/><rect x="583.2" y="88.0" width="10.9" height="3.3" fill="#8c8a88"/><rect x="594.2" y="88.0" width="7.9" height="3.3" fill="#4c5260"/><rect x="602.1" y="88.0" width="12.5" height="3.3" fill="#626670"/><rect x="486.1" y="90.9" width="9.7" height="3.3" fill="#8a8680"/><rect x="495.9" y="90.9" width="5.9" height="3.3" fill="#a89c84"/><rect x="501.8" y="90.9" width="10.9" height="3.3" fill="#a89c84"/><rect x="512.7" y="90.9" width="11.3" height="3.3" fill="#a89c84"/><rect x="524.0" y="90.9" width="12.2" height="3.3" fill="#a89c84"/><rect x="536.3" y="90.9" width="4.1" height="3.3" fill="#5c6270"/><rect x="540.4" y="90.9" width="12.0" height="3.3" fill="#5c6270"/><rect x="552.4" y="90.9" width="6.7" height="3.3" fill="#9a9078"/><rect x="559.2" y="90.9" width="7.8" height="3.3" fill="#6f7380"/><rect x="567.0" y="90.9" width="12.9" height="3.3" fill="#9a9078"/><rect x="579.9" y="90.9" width="7.5" height="3.3" fill="#9a9078"/><rect x="587.4" y="90.9" width="6.4" height="3.3" fill="#707580"/><rect x="593.9" y="90.9" width="7.3" height="3.3" fill="#8a8680"/><rect x="601.2" y="90.9" width="10.0" height="3.3" fill="#6f7380"/><rect x="485.4" y="93.8" width="10.8" height="3.3" fill="#6f7380"/><rect x="496.2" y="93.8" width="4.7" height="3.3" fill="#a89c84"/><rect x="500.9" y="93.8" width="4.3" height="3.3" fill="#a89c84"/><rect x="505.2" y="93.8" width="12.0" height="3.3" fill="#9a9078"/><rect x="517.2" y="93.8" width="9.8" height="3.3" fill="#707580"/><rect x="527.0" y="93.8" width="12.6" height="3.3" fill="#4c5260"/><rect x="539.6" y="93.8" width="8.1" height="3.3" fill="#707580"/><rect x="547.8" y="93.8" width="6.1" height="3.3" fill="#56606e"/><rect x="553.9" y="93.8" width="12.4" height="3.3" fill="#8a8680"/><rect x="566.3" y="93.8" width="4.1" height="3.3" fill="#a89c84"/><rect x="570.5" y="93.8" width="4.8" height="3.3" fill="#5c6270"/><rect x="575.2" y="93.8" width="10.8" height="3.3" fill="#56606e"/><rect x="586.0" y="93.8" width="7.0" height="3.3" fill="#9a9078"/><rect x="593.0" y="93.8" width="5.4" height="3.3" fill="#8c8a88"/><rect x="598.4" y="93.8" width="12.1" height="3.3" fill="#8c8a88"/><rect x="610.5" y="93.8" width="4.8" height="3.3" fill="#6f7380"/><rect x="489.4" y="96.7" width="7.6" height="3.3" fill="#7c7a78"/><rect x="497.0" y="96.7" width="7.3" height="3.3" fill="#707580"/><rect x="504.3" y="96.7" width="8.9" height="3.3" fill="#707580"/><rect x="513.2" y="96.7" width="12.7" height="3.3" fill="#9a9078"/><rect x="525.9" y="96.7" width="12.7" height="3.3" fill="#5c6270"/><rect x="538.6" y="96.7" width="6.4" height="3.3" fill="#8c8a88"/><rect x="545.0" y="96.7" width="4.1" height="3.3" fill="#a89c84"/><rect x="549.1" y="96.7" width="5.2" height="3.3" fill="#707580"/><rect x="554.3" y="96.7" width="10.0" height="3.3" fill="#8a8680"/><rect x="564.3" y="96.7" width="4.1" height="3.3" fill="#9a9078"/><rect x="568.3" y="96.7" width="7.8" height="3.3" fill="#8c8a88"/><rect x="576.1" y="96.7" width="10.4" height="3.3" fill="#9a9078"/><rect x="586.5" y="96.7" width="11.1" height="3.3" fill="#8a8680"/><rect x="597.7" y="96.7" width="11.2" height="3.3" fill="#9a9078"/><rect x="608.9" y="96.7" width="4.3" height="3.3" fill="#a89c84"/><rect x="484.7" y="99.6" width="11.0" height="3.3" fill="#8c8a88"/><rect x="495.7" y="99.6" width="6.7" height="3.3" fill="#707580"/><rect x="502.4" y="99.6" width="4.9" height="3.3" fill="#6f7380"/><rect x="507.3" y="99.6" width="12.3" height="3.3" fill="#56606e"/><rect x="519.6" y="99.6" width="9.1" height="3.3" fill="#7c7a78"/><rect x="528.7" y="99.6" width="10.4" height="3.3" fill="#4c5260"/><rect x="539.1" y="99.6" width="12.5" height="3.3" fill="#a89c84"/><rect x="551.7" y="99.6" width="6.7" height="3.3" fill="#5c6270"/><rect x="558.4" y="99.6" width="9.3" height="3.3" fill="#626670"/><rect x="567.7" y="99.6" width="4.7" height="3.3" fill="#707580"/><rect x="572.4" y="99.6" width="4.5" height="3.3" fill="#9a9078"/><rect x="576.9" y="99.6" width="8.8" height="3.3" fill="#a89c84"/><rect x="585.7" y="99.6" width="4.9" height="3.3" fill="#8c8a88"/><rect x="590.6" y="99.6" width="6.7" height="3.3" fill="#8c8a88"/><rect x="597.3" y="99.6" width="7.4" height="3.3" fill="#a89c84"/><rect x="604.6" y="99.6" width="5.2" height="3.3" fill="#56606e"/><rect x="609.9" y="99.6" width="4.6" height="3.3" fill="#8a8680"/><rect x="486.6" y="102.5" width="5.9" height="3.3" fill="#707580"/><rect x="492.5" y="102.5" width="4.4" height="3.3" fill="#6f7380"/><rect x="496.9" y="102.5" width="5.1" height="3.3" fill="#5c6270"/><rect x="501.9" y="102.5" width="7.4" height="3.3" fill="#56606e"/><rect x="509.3" y="102.5" width="6.4" height="3.3" fill="#7c7a78"/><rect x="515.6" y="102.5" width="8.4" height="3.3" fill="#5c6270"/><rect x="524.0" y="102.5" width="10.7" height="3.3" fill="#7c7a78"/><rect x="534.7" y="102.5" width="6.3" height="3.3" fill="#8a8680"/><rect x="540.9" y="102.5" width="9.6" height="3.3" fill="#a89c84"/><rect x="550.6" y="102.5" width="5.5" height="3.3" fill="#9a9078"/><rect x="556.1" y="102.5" width="10.3" height="3.3" fill="#4c5260"/><rect x="566.4" y="102.5" width="11.9" height="3.3" fill="#707580"/><rect x="578.3" y="102.5" width="12.2" height="3.3" fill="#5c6270"/><rect x="590.5" y="102.5" width="9.3" height="3.3" fill="#4c5260"/><rect x="599.8" y="102.5" width="4.5" height="3.3" fill="#56606e"/><rect x="604.3" y="102.5" width="9.1" height="3.3" fill="#8a8680"/><rect x="487.3" y="105.4" width="10.2" height="3.3" fill="#4c5260"/><rect x="497.5" y="105.4" width="8.4" height="3.3" fill="#626670"/><rect x="506.0" y="105.4" width="4.4" height="3.3" fill="#4c5260"/><rect x="510.3" y="105.4" width="7.7" height="3.3" fill="#a89c84"/><rect x="518.0" y="105.4" width="10.5" height="3.3" fill="#4c5260"/><rect x="528.5" y="105.4" width="8.0" height="3.3" fill="#4c5260"/><rect x="536.5" y="105.4" width="6.0" height="3.3" fill="#6f7380"/><rect x="542.5" y="105.4" width="10.4" height="3.3" fill="#626670"/><rect x="552.8" y="105.4" width="9.3" height="3.3" fill="#8a8680"/><rect x="562.2" y="105.4" width="4.6" height="3.3" fill="#707580"/><rect x="566.8" y="105.4" width="6.7" height="3.3" fill="#8c8a88"/><rect x="573.5" y="105.4" width="12.0" height="3.3" fill="#6f7380"/><rect x="585.5" y="105.4" width="12.6" height="3.3" fill="#626670"/><rect x="598.1" y="105.4" width="11.6" height="3.3" fill="#6f7380"/><rect x="609.7" y="105.4" width="7.6" height="3.3" fill="#7c7a78"/><rect x="488.4" y="108.3" width="6.7" height="3.3" fill="#8a8680"/><rect x="495.1" y="108.3" width="11.9" height="3.3" fill="#56606e"/><rect x="507.0" y="108.3" width="8.6" height="3.3" fill="#707580"/><rect x="515.7" y="108.3" width="8.2" height="3.3" fill="#5c6270"/><rect x="523.9" y="108.3" width="9.9" height="3.3" fill="#7c7a78"/><rect x="533.8" y="108.3" width="6.8" height="3.3" fill="#4c5260"/><rect x="540.6" y="108.3" width="5.8" height="3.3" fill="#6f7380"/><rect x="546.5" y="108.3" width="5.4" height="3.3" fill="#6f7380"/><rect x="551.8" y="108.3" width="9.8" height="3.3" fill="#707580"/><rect x="561.6" y="108.3" width="9.6" height="3.3" fill="#626670"/><rect x="571.2" y="108.3" width="7.6" height="3.3" fill="#9a9078"/><rect x="578.7" y="108.3" width="5.2" height="3.3" fill="#707580"/><rect x="584.0" y="108.3" width="5.5" height="3.3" fill="#8c8a88"/><rect x="589.5" y="108.3" width="8.0" height="3.3" fill="#4c5260"/><rect x="597.5" y="108.3" width="7.1" height="3.3" fill="#8a8680"/><rect x="604.6" y="108.3" width="5.3" height="3.3" fill="#7c7a78"/><rect x="609.9" y="108.3" width="9.1" height="3.3" fill="#8c8a88"/><rect x="486.8" y="111.2" width="12.1" height="3.3" fill="#8c8a88"/><rect x="498.9" y="111.2" width="6.2" height="3.3" fill="#5c6270"/><rect x="505.0" y="111.2" width="7.8" height="3.3" fill="#7c7a78"/><rect x="512.8" y="111.2" width="11.5" height="3.3" fill="#7c7a78"/><rect x="524.3" y="111.2" width="9.6" height="3.3" fill="#9a9078"/><rect x="533.9" y="111.2" width="6.3" height="3.3" fill="#56606e"/><rect x="540.2" y="111.2" width="11.6" height="3.3" fill="#8c8a88"/><rect x="551.8" y="111.2" width="6.4" height="3.3" fill="#626670"/><rect x="558.2" y="111.2" width="10.4" height="3.3" fill="#6f7380"/><rect x="568.6" y="111.2" width="12.6" height="3.3" fill="#6f7380"/><rect x="581.2" y="111.2" width="10.2" height="3.3" fill="#6f7380"/><rect x="591.4" y="111.2" width="7.0" height="3.3" fill="#6f7380"/><rect x="598.4" y="111.2" width="11.8" height="3.3" fill="#7c7a78"/><rect x="610.3" y="111.2" width="11.6" height="3.3" fill="#4c5260"/><rect x="488.9" y="114.1" width="11.0" height="3.3" fill="#8c8a88"/><rect x="499.9" y="114.1" width="7.5" height="3.3" fill="#626670"/><rect x="507.4" y="114.1" width="7.0" height="3.3" fill="#7c7a78"/><rect x="514.4" y="114.1" width="4.9" height="3.3" fill="#56606e"/><rect x="519.3" y="114.1" width="11.9" height="3.3" fill="#7c7a78"/><rect x="531.2" y="114.1" width="4.6" height="3.3" fill="#56606e"/><rect x="535.8" y="114.1" width="7.7" height="3.3" fill="#a89c84"/><rect x="543.5" y="114.1" width="4.6" height="3.3" fill="#7c7a78"/><rect x="548.1" y="114.1" width="4.6" height="3.3" fill="#8a8680"/><rect x="552.7" y="114.1" width="12.5" height="3.3" fill="#8c8a88"/><rect x="565.2" y="114.1" width="7.7" height="3.3" fill="#707580"/><rect x="572.8" y="114.1" width="7.7" height="3.3" fill="#9a9078"/><rect x="580.6" y="114.1" width="7.8" height="3.3" fill="#4c5260"/><rect x="588.4" y="114.1" width="8.9" height="3.3" fill="#626670"/><rect x="597.2" y="114.1" width="5.0" height="3.3" fill="#8c8a88"/><rect x="602.2" y="114.1" width="6.9" height="3.3" fill="#56606e"/><rect x="609.1" y="114.1" width="12.5" height="3.3" fill="#707580"/><rect x="487.7" y="117.0" width="5.5" height="3.3" fill="#9a9078"/><rect x="493.2" y="117.0" width="5.0" height="3.3" fill="#8c8a88"/><rect x="498.3" y="117.0" width="4.9" height="3.3" fill="#626670"/><rect x="503.1" y="117.0" width="12.9" height="3.3" fill="#8c8a88"/><rect x="516.0" y="117.0" width="7.4" height="3.3" fill="#6f7380"/><rect x="523.4" y="117.0" width="6.4" height="3.3" fill="#8c8a88"/><rect x="529.9" y="117.0" width="8.1" height="3.3" fill="#a89c84"/><rect x="538.0" y="117.0" width="4.4" height="3.3" fill="#8c8a88"/><rect x="542.3" y="117.0" width="12.8" height="3.3" fill="#5c6270"/><rect x="555.2" y="117.0" width="7.4" height="3.3" fill="#626670"/><rect x="562.6" y="117.0" width="5.6" height="3.3" fill="#9a9078"/><rect x="568.2" y="117.0" width="6.9" height="3.3" fill="#8c8a88"/><rect x="575.2" y="117.0" width="4.6" height="3.3" fill="#7c7a78"/><rect x="579.8" y="117.0" width="4.5" height="3.3" fill="#626670"/><rect x="584.3" y="117.0" width="8.2" height="3.3" fill="#707580"/><rect x="592.5" y="117.0" width="9.0" height="3.3" fill="#4c5260"/><rect x="601.5" y="117.0" width="9.7" height="3.3" fill="#7c7a78"/><rect x="488.3" y="119.9" width="10.7" height="3.3" fill="#7c7a78"/><rect x="499.0" y="119.9" width="8.1" height="3.3" fill="#a89c84"/><rect x="507.1" y="119.9" width="10.8" height="3.3" fill="#4c5260"/><rect x="517.9" y="119.9" width="4.9" height="3.3" fill="#4c5260"/><rect x="522.8" y="119.9" width="5.8" height="3.3" fill="#6f7380"/><rect x="528.6" y="119.9" width="8.0" height="3.3" fill="#9a9078"/><rect x="536.6" y="119.9" width="5.2" height="3.3" fill="#5c6270"/><rect x="541.8" y="119.9" width="9.8" height="3.3" fill="#707580"/><rect x="551.6" y="119.9" width="6.3" height="3.3" fill="#707580"/><rect x="557.9" y="119.9" width="11.7" height="3.3" fill="#5c6270"/><rect x="569.7" y="119.9" width="11.2" height="3.3" fill="#707580"/><rect x="580.9" y="119.9" width="4.9" height="3.3" fill="#4c5260"/><rect x="585.8" y="119.9" width="12.0" height="3.3" fill="#626670"/><rect x="597.8" y="119.9" width="7.2" height="3.3" fill="#8a8680"/><rect x="605.0" y="119.9" width="8.9" height="3.3" fill="#8c8a88"/><rect x="489.3" y="122.8" width="10.9" height="3.3" fill="#56606e"/><rect x="500.1" y="122.8" width="9.2" height="3.3" fill="#707580"/><rect x="509.3" y="122.8" width="9.8" height="3.3" fill="#707580"/><rect x="519.1" y="122.8" width="11.9" height="3.3" fill="#8c8a88"/><rect x="531.0" y="122.8" width="12.3" height="3.3" fill="#7c7a78"/><rect x="543.2" y="122.8" width="9.4" height="3.3" fill="#8a8680"/><rect x="552.7" y="122.8" width="11.9" height="3.3" fill="#5c6270"/><rect x="564.6" y="122.8" width="8.7" height="3.3" fill="#7c7a78"/><rect x="573.3" y="122.8" width="7.7" height="3.3" fill="#5c6270"/><rect x="581.0" y="122.8" width="6.6" height="3.3" fill="#9a9078"/><rect x="587.6" y="122.8" width="10.8" height="3.3" fill="#8a8680"/><rect x="598.5" y="122.8" width="4.0" height="3.3" fill="#5c6270"/><rect x="602.5" y="122.8" width="6.8" height="3.3" fill="#a89c84"/><rect x="609.3" y="122.8" width="10.0" height="3.3" fill="#a89c84"/><rect x="485.1" y="125.7" width="9.3" height="3.3" fill="#707580"/><rect x="494.4" y="125.7" width="7.1" height="3.3" fill="#8c8a88"/><rect x="501.5" y="125.7" width="8.5" height="3.3" fill="#4c5260"/><rect x="510.0" y="125.7" width="11.1" height="3.3" fill="#8a8680"/><rect x="521.1" y="125.7" width="5.4" height="3.3" fill="#707580"/><rect x="526.5" y="125.7" width="9.9" height="3.3" fill="#8c8a88"/><rect x="536.4" y="125.7" width="11.1" height="3.3" fill="#707580"/><rect x="547.5" y="125.7" width="11.5" height="3.3" fill="#8a8680"/><rect x="559.1" y="125.7" width="6.0" height="3.3" fill="#8a8680"/><rect x="565.1" y="125.7" width="8.3" height="3.3" fill="#6f7380"/><rect x="573.4" y="125.7" width="10.6" height="3.3" fill="#5c6270"/><rect x="584.0" y="125.7" width="12.8" height="3.3" fill="#8c8a88"/><rect x="596.8" y="125.7" width="6.1" height="3.3" fill="#a89c84"/><rect x="603.0" y="125.7" width="9.9" height="3.3" fill="#a89c84"/><rect x="487.5" y="128.6" width="11.8" height="3.3" fill="#626670"/><rect x="499.3" y="128.6" width="6.5" height="3.3" fill="#8a8680"/><rect x="505.7" y="128.6" width="5.8" height="3.3" fill="#9a9078"/><rect x="511.6" y="128.6" width="9.2" height="3.3" fill="#8c8a88"/><rect x="520.8" y="128.6" width="7.4" height="3.3" fill="#4c5260"/><rect x="528.2" y="128.6" width="6.8" height="3.3" fill="#6f7380"/><rect x="534.9" y="128.6" width="7.4" height="3.3" fill="#4c5260"/><rect x="542.3" y="128.6" width="9.0" height="3.3" fill="#707580"/><rect x="551.2" y="128.6" width="11.1" height="3.3" fill="#8a8680"/><rect x="562.3" y="128.6" width="12.0" height="3.3" fill="#8c8a88"/><rect x="574.3" y="128.6" width="11.6" height="3.3" fill="#5c6270"/><rect x="585.9" y="128.6" width="7.8" height="3.3" fill="#707580"/><rect x="593.7" y="128.6" width="4.1" height="3.3" fill="#9a9078"/><rect x="597.9" y="128.6" width="5.0" height="3.3" fill="#707580"/><rect x="602.8" y="128.6" width="12.0" height="3.3" fill="#707580"/><rect x="487.1" y="131.5" width="8.7" height="3.3" fill="#8a8680"/><rect x="495.8" y="131.5" width="10.9" height="3.3" fill="#4c5260"/><rect x="506.8" y="131.5" width="9.6" height="3.3" fill="#4c5260"/><rect x="516.4" y="131.5" width="9.5" height="3.3" fill="#4c5260"/><rect x="525.9" y="131.5" width="5.8" height="3.3" fill="#626670"/><rect x="531.7" y="131.5" width="12.0" height="3.3" fill="#8c8a88"/><rect x="543.7" y="131.5" width="5.8" height="3.3" fill="#6f7380"/><rect x="549.5" y="131.5" width="10.3" height="3.3" fill="#9a9078"/><rect x="559.8" y="131.5" width="4.9" height="3.3" fill="#56606e"/><rect x="564.7" y="131.5" width="12.0" height="3.3" fill="#5c6270"/><rect x="576.7" y="131.5" width="6.0" height="3.3" fill="#8a8680"/><rect x="582.6" y="131.5" width="4.3" height="3.3" fill="#8a8680"/><rect x="587.0" y="131.5" width="6.7" height="3.3" fill="#a89c84"/><rect x="593.7" y="131.5" width="7.5" height="3.3" fill="#6f7380"/><rect x="601.2" y="131.5" width="12.1" height="3.3" fill="#9a9078"/><rect x="488.7" y="134.4" width="7.6" height="3.3" fill="#707580"/><rect x="496.3" y="134.4" width="5.3" height="3.3" fill="#8a8680"/><rect x="501.6" y="134.4" width="6.5" height="3.3" fill="#8c8a88"/><rect x="508.1" y="134.4" width="10.9" height="3.3" fill="#626670"/><rect x="519.0" y="134.4" width="6.4" height="3.3" fill="#6f7380"/><rect x="525.4" y="134.4" width="11.8" height="3.3" fill="#a89c84"/><rect x="537.3" y="134.4" width="11.1" height="3.3" fill="#a89c84"/><rect x="548.4" y="134.4" width="11.4" height="3.3" fill="#626670"/><rect x="559.8" y="134.4" width="9.0" height="3.3" fill="#707580"/><rect x="568.9" y="134.4" width="10.6" height="3.3" fill="#9a9078"/><rect x="579.5" y="134.4" width="6.9" height="3.3" fill="#7c7a78"/><rect x="586.4" y="134.4" width="10.4" height="3.3" fill="#8a8680"/><rect x="596.8" y="134.4" width="5.7" height="3.3" fill="#8c8a88"/><rect x="602.6" y="134.4" width="12.7" height="3.3" fill="#5c6270"/><rect x="487.8" y="137.3" width="4.9" height="3.3" fill="#4c5260"/><rect x="492.7" y="137.3" width="7.9" height="3.3" fill="#5c6270"/><rect x="500.6" y="137.3" width="9.6" height="3.3" fill="#5c6270"/><rect x="510.2" y="137.3" width="4.1" height="3.3" fill="#5c6270"/><rect x="514.3" y="137.3" width="10.3" height="3.3" fill="#6f7380"/><rect x="524.6" y="137.3" width="10.7" height="3.3" fill="#8c8a88"/><rect x="535.3" y="137.3" width="8.2" height="3.3" fill="#56606e"/><rect x="543.5" y="137.3" width="10.5" height="3.3" fill="#6f7380"/><rect x="554.0" y="137.3" width="8.4" height="3.3" fill="#56606e"/><rect x="562.4" y="137.3" width="4.1" height="3.3" fill="#8a8680"/><rect x="566.5" y="137.3" width="10.5" height="3.3" fill="#56606e"/><rect x="577.0" y="137.3" width="10.8" height="3.3" fill="#707580"/><rect x="587.8" y="137.3" width="6.4" height="3.3" fill="#4c5260"/><rect x="594.2" y="137.3" width="8.1" height="3.3" fill="#56606e"/><rect x="602.2" y="137.3" width="9.5" height="3.3" fill="#8c8a88"/><rect x="487.5" y="140.2" width="7.5" height="3.3" fill="#8c8a88"/><rect x="495.1" y="140.2" width="8.0" height="3.3" fill="#8a8680"/><rect x="503.0" y="140.2" width="6.1" height="3.3" fill="#7c7a78"/><rect x="509.1" y="140.2" width="5.0" height="3.3" fill="#8c8a88"/><rect x="514.1" y="140.2" width="4.6" height="3.3" fill="#8c8a88"/><rect x="518.7" y="140.2" width="8.4" height="3.3" fill="#6f7380"/><rect x="527.1" y="140.2" width="10.0" height="3.3" fill="#4c5260"/><rect x="537.1" y="140.2" width="6.8" height="3.3" fill="#6f7380"/><rect x="543.9" y="140.2" width="10.6" height="3.3" fill="#a89c84"/><rect x="554.5" y="140.2" width="5.6" height="3.3" fill="#56606e"/><rect x="560.0" y="140.2" width="11.7" height="3.3" fill="#8a8680"/><rect x="571.7" y="140.2" width="6.8" height="3.3" fill="#626670"/><rect x="578.5" y="140.2" width="11.0" height="3.3" fill="#8c8a88"/><rect x="589.5" y="140.2" width="12.0" height="3.3" fill="#626670"/><rect x="601.5" y="140.2" width="11.8" height="3.3" fill="#626670"/><rect x="486.2" y="143.1" width="4.4" height="3.3" fill="#8c8a88"/><rect x="490.5" y="143.1" width="11.9" height="3.3" fill="#9a9078"/><rect x="502.5" y="143.1" width="8.0" height="3.3" fill="#5c6270"/><rect x="510.5" y="143.1" width="7.8" height="3.3" fill="#4c5260"/><rect x="518.3" y="143.1" width="8.0" height="3.3" fill="#6f7380"/><rect x="526.3" y="143.1" width="12.7" height="3.3" fill="#8c8a88"/><rect x="539.0" y="143.1" width="6.2" height="3.3" fill="#7c7a78"/><rect x="545.2" y="143.1" width="11.5" height="3.3" fill="#4c5260"/><rect x="556.7" y="143.1" width="6.7" height="3.3" fill="#a89c84"/><rect x="563.4" y="143.1" width="6.6" height="3.3" fill="#6f7380"/><rect x="570.1" y="143.1" width="5.4" height="3.3" fill="#626670"/><rect x="575.5" y="143.1" width="12.5" height="3.3" fill="#6f7380"/><rect x="588.0" y="143.1" width="12.9" height="3.3" fill="#9a9078"/><rect x="600.9" y="143.1" width="7.2" height="3.3" fill="#6f7380"/><rect x="608.1" y="143.1" width="8.2" height="3.3" fill="#6f7380"/><rect x="485.0" y="146.0" width="8.5" height="3.3" fill="#8a8680"/><rect x="493.5" y="146.0" width="10.2" height="3.3" fill="#707580"/><rect x="503.7" y="146.0" width="10.3" height="3.3" fill="#8a8680"/><rect x="514.0" y="146.0" width="9.4" height="3.3" fill="#7c7a78"/><rect x="523.3" y="146.0" width="6.8" height="3.3" fill="#707580"/><rect x="530.1" y="146.0" width="11.4" height="3.3" fill="#8c8a88"/><rect x="541.5" y="146.0" width="8.7" height="3.3" fill="#8c8a88"/><rect x="550.2" y="146.0" width="8.6" height="3.3" fill="#8c8a88"/><rect x="558.8" y="146.0" width="9.1" height="3.3" fill="#707580"/><rect x="567.9" y="146.0" width="7.7" height="3.3" fill="#9a9078"/><rect x="575.6" y="146.0" width="9.5" height="3.3" fill="#a89c84"/><rect x="585.2" y="146.0" width="12.4" height="3.3" fill="#6f7380"/><rect x="597.6" y="146.0" width="5.2" height="3.3" fill="#707580"/><rect x="602.8" y="146.0" width="6.9" height="3.3" fill="#8a8680"/><rect x="609.7" y="146.0" width="6.8" height="3.3" fill="#56606e"/><rect x="487.5" y="148.9" width="12.5" height="3.3" fill="#6f7380"/><rect x="499.9" y="148.9" width="5.6" height="3.3" fill="#707580"/><rect x="505.5" y="148.9" width="5.3" height="3.3" fill="#7c7a78"/><rect x="510.8" y="148.9" width="4.4" height="3.3" fill="#6f7380"/><rect x="515.2" y="148.9" width="9.3" height="3.3" fill="#8a8680"/><rect x="524.5" y="148.9" width="4.6" height="3.3" fill="#6f7380"/><rect x="529.1" y="148.9" width="6.7" height="3.3" fill="#7c7a78"/><rect x="535.7" y="148.9" width="6.6" height="3.3" fill="#626670"/><rect x="542.3" y="148.9" width="6.1" height="3.3" fill="#a89c84"/><rect x="548.4" y="148.9" width="8.1" height="3.3" fill="#5c6270"/><rect x="556.5" y="148.9" width="10.3" height="3.3" fill="#8c8a88"/><rect x="566.7" y="148.9" width="10.2" height="3.3" fill="#8c8a88"/><rect x="577.0" y="148.9" width="9.1" height="3.3" fill="#a89c84"/><rect x="586.1" y="148.9" width="11.6" height="3.3" fill="#4c5260"/><rect x="597.6" y="148.9" width="8.2" height="3.3" fill="#8a8680"/><rect x="605.8" y="148.9" width="5.6" height="3.3" fill="#707580"/><rect x="484.0" y="151.8" width="11.6" height="3.3" fill="#6f7380"/><rect x="495.7" y="151.8" width="5.0" height="3.3" fill="#7c7a78"/><rect x="500.7" y="151.8" width="7.3" height="3.3" fill="#56606e"/><rect x="508.0" y="151.8" width="12.5" height="3.3" fill="#6f7380"/><rect x="520.5" y="151.8" width="7.5" height="3.3" fill="#707580"/><rect x="528.0" y="151.8" width="13.0" height="3.3" fill="#5c6270"/><rect x="541.0" y="151.8" width="5.3" height="3.3" fill="#8c8a88"/><rect x="546.3" y="151.8" width="8.1" height="3.3" fill="#7c7a78"/><rect x="554.4" y="151.8" width="5.6" height="3.3" fill="#a89c84"/><rect x="560.0" y="151.8" width="4.1" height="3.3" fill="#626670"/><rect x="564.1" y="151.8" width="7.6" height="3.3" fill="#7c7a78"/><rect x="571.7" y="151.8" width="5.8" height="3.3" fill="#5c6270"/><rect x="577.5" y="151.8" width="7.9" height="3.3" fill="#4c5260"/><rect x="585.4" y="151.8" width="8.6" height="3.3" fill="#6f7380"/><rect x="594.1" y="151.8" width="6.6" height="3.3" fill="#8a8680"/><rect x="600.6" y="151.8" width="5.7" height="3.3" fill="#9a9078"/><rect x="606.4" y="151.8" width="9.9" height="3.3" fill="#9a9078"/><rect x="485.9" y="154.7" width="11.9" height="3.3" fill="#626670"/><rect x="497.7" y="154.7" width="8.5" height="3.3" fill="#6f7380"/><rect x="506.3" y="154.7" width="11.0" height="3.3" fill="#7c7a78"/><rect x="517.3" y="154.7" width="4.9" height="3.3" fill="#56606e"/><rect x="522.2" y="154.7" width="9.5" height="3.3" fill="#5c6270"/><rect x="531.7" y="154.7" width="11.6" height="3.3" fill="#8a8680"/><rect x="543.3" y="154.7" width="4.4" height="3.3" fill="#707580"/><rect x="547.7" y="154.7" width="4.3" height="3.3" fill="#707580"/><rect x="552.0" y="154.7" width="8.7" height="3.3" fill="#8a8680"/><rect x="560.7" y="154.7" width="12.3" height="3.3" fill="#56606e"/><rect x="573.0" y="154.7" width="11.1" height="3.3" fill="#9a9078"/><rect x="584.1" y="154.7" width="7.3" height="3.3" fill="#8a8680"/><rect x="591.4" y="154.7" width="4.3" height="3.3" fill="#6f7380"/><rect x="595.7" y="154.7" width="10.8" height="3.3" fill="#6f7380"/><rect x="606.6" y="154.7" width="12.9" height="3.3" fill="#7c7a78"/><rect x="489.3" y="157.6" width="12.1" height="3.3" fill="#626670"/><rect x="501.4" y="157.6" width="5.0" height="3.3" fill="#4c5260"/><rect x="506.4" y="157.6" width="12.3" height="3.3" fill="#56606e"/><rect x="518.6" y="157.6" width="11.0" height="3.3" fill="#7c7a78"/><rect x="529.7" y="157.6" width="7.7" height="3.3" fill="#7c7a78"/><rect x="537.4" y="157.6" width="6.8" height="3.3" fill="#a89c84"/><rect x="544.1" y="157.6" width="5.6" height="3.3" fill="#707580"/><rect x="549.7" y="157.6" width="11.5" height="3.3" fill="#7c7a78"/><rect x="561.3" y="157.6" width="8.2" height="3.3" fill="#9a9078"/><rect x="569.5" y="157.6" width="11.7" height="3.3" fill="#8c8a88"/><rect x="581.2" y="157.6" width="6.0" height="3.3" fill="#626670"/><rect x="587.1" y="157.6" width="9.2" height="3.3" fill="#7c7a78"/><rect x="596.3" y="157.6" width="8.4" height="3.3" fill="#7c7a78"/><rect x="604.6" y="157.6" width="4.0" height="3.3" fill="#5c6270"/><rect x="608.7" y="157.6" width="5.1" height="3.3" fill="#6f7380"/><rect x="484.5" y="160.5" width="6.9" height="3.3" fill="#9a9078"/><rect x="491.3" y="160.5" width="12.6" height="3.3" fill="#707580"/><rect x="503.9" y="160.5" width="4.1" height="3.3" fill="#8a8680"/><rect x="508.0" y="160.5" width="9.3" height="3.3" fill="#56606e"/><rect x="517.3" y="160.5" width="8.7" height="3.3" fill="#56606e"/><rect x="526.0" y="160.5" width="6.9" height="3.3" fill="#626670"/><rect x="532.9" y="160.5" width="5.9" height="3.3" fill="#4c5260"/><rect x="538.8" y="160.5" width="6.7" height="3.3" fill="#5c6270"/><rect x="545.5" y="160.5" width="10.2" height="3.3" fill="#4c5260"/><rect x="555.7" y="160.5" width="9.3" height="3.3" fill="#9a9078"/><rect x="564.9" y="160.5" width="12.2" height="3.3" fill="#4c5260"/><rect x="577.1" y="160.5" width="6.7" height="3.3" fill="#9a9078"/><rect x="583.8" y="160.5" width="6.1" height="3.3" fill="#a89c84"/><rect x="590.0" y="160.5" width="10.0" height="3.3" fill="#4c5260"/><rect x="599.9" y="160.5" width="6.0" height="3.3" fill="#5c6270"/><rect x="605.9" y="160.5" width="5.9" height="3.3" fill="#5c6270"/><rect x="489.3" y="163.4" width="9.3" height="3.3" fill="#4c5260"/><rect x="498.6" y="163.4" width="8.4" height="3.3" fill="#707580"/><rect x="507.0" y="163.4" width="9.7" height="3.3" fill="#7c7a78"/><rect x="516.7" y="163.4" width="4.7" height="3.3" fill="#5c6270"/><rect x="521.4" y="163.4" width="9.3" height="3.3" fill="#8c8a88"/><rect x="530.7" y="163.4" width="9.9" height="3.3" fill="#626670"/><rect x="540.5" y="163.4" width="10.7" height="3.3" fill="#56606e"/><rect x="551.2" y="163.4" width="9.1" height="3.3" fill="#8c8a88"/><rect x="560.3" y="163.4" width="12.9" height="3.3" fill="#8a8680"/><rect x="573.2" y="163.4" width="6.7" height="3.3" fill="#8c8a88"/><rect x="580.0" y="163.4" width="5.5" height="3.3" fill="#5c6270"/><rect x="585.4" y="163.4" width="9.9" height="3.3" fill="#7c7a78"/><rect x="595.3" y="163.4" width="7.4" height="3.3" fill="#707580"/><rect x="602.8" y="163.4" width="11.7" height="3.3" fill="#4c5260"/><rect x="486.1" y="166.3" width="5.2" height="3.3" fill="#707580"/><rect x="491.3" y="166.3" width="8.9" height="3.3" fill="#626670"/><rect x="500.3" y="166.3" width="5.8" height="3.3" fill="#6f7380"/><rect x="506.0" y="166.3" width="9.5" height="3.3" fill="#8a8680"/><rect x="515.5" y="166.3" width="12.2" height="3.3" fill="#5c6270"/><rect x="527.7" y="166.3" width="6.7" height="3.3" fill="#8a8680"/><rect x="534.4" y="166.3" width="5.8" height="3.3" fill="#5c6270"/><rect x="540.2" y="166.3" width="6.5" height="3.3" fill="#7c7a78"/><rect x="546.7" y="166.3" width="4.7" height="3.3" fill="#56606e"/><rect x="551.4" y="166.3" width="6.8" height="3.3" fill="#6f7380"/><rect x="558.2" y="166.3" width="9.6" height="3.3" fill="#8a8680"/><rect x="567.8" y="166.3" width="9.4" height="3.3" fill="#7c7a78"/><rect x="577.2" y="166.3" width="11.3" height="3.3" fill="#a89c84"/><rect x="588.5" y="166.3" width="8.0" height="3.3" fill="#7c7a78"/><rect x="596.5" y="166.3" width="4.6" height="3.3" fill="#a89c84"/><rect x="601.1" y="166.3" width="8.4" height="3.3" fill="#5c6270"/><rect x="609.5" y="166.3" width="7.7" height="3.3" fill="#707580"/><rect x="484.4" y="169.2" width="4.6" height="3.3" fill="#a89c84"/><rect x="488.9" y="169.2" width="9.5" height="3.3" fill="#8a8680"/><rect x="498.4" y="169.2" width="5.8" height="3.3" fill="#626670"/><rect x="504.2" y="169.2" width="6.3" height="3.3" fill="#8c8a88"/><rect x="510.6" y="169.2" width="10.2" height="3.3" fill="#56606e"/><rect x="520.7" y="169.2" width="7.9" height="3.3" fill="#4c5260"/><rect x="528.6" y="169.2" width="10.1" height="3.3" fill="#5c6270"/><rect x="538.7" y="169.2" width="12.3" height="3.3" fill="#9a9078"/><rect x="551.0" y="169.2" width="9.1" height="3.3" fill="#4c5260"/><rect x="560.1" y="169.2" width="9.9" height="3.3" fill="#7c7a78"/><rect x="570.1" y="169.2" width="10.8" height="3.3" fill="#9a9078"/><rect x="580.9" y="169.2" width="7.8" height="3.3" fill="#707580"/><rect x="588.6" y="169.2" width="8.7" height="3.3" fill="#5c6270"/><rect x="597.3" y="169.2" width="10.9" height="3.3" fill="#707580"/><rect x="608.2" y="169.2" width="8.3" height="3.3" fill="#707580"/><rect x="487.3" y="172.1" width="9.1" height="3.3" fill="#9a9078"/><rect x="496.4" y="172.1" width="6.9" height="3.3" fill="#9a9078"/><rect x="503.4" y="172.1" width="12.6" height="3.3" fill="#6f7380"/><rect x="516.0" y="172.1" width="5.1" height="3.3" fill="#707580"/><rect x="521.1" y="172.1" width="9.9" height="3.3" fill="#8c8a88"/><rect x="530.9" y="172.1" width="9.9" height="3.3" fill="#8a8680"/><rect x="540.8" y="172.1" width="11.7" height="3.3" fill="#5c6270"/><rect x="552.5" y="172.1" width="4.1" height="3.3" fill="#4c5260"/><rect x="556.7" y="172.1" width="10.1" height="3.3" fill="#5c6270"/><rect x="566.8" y="172.1" width="12.6" height="3.3" fill="#8a8680"/><rect x="579.4" y="172.1" width="11.5" height="3.3" fill="#6f7380"/><rect x="590.8" y="172.1" width="11.6" height="3.3" fill="#707580"/><rect x="602.4" y="172.1" width="12.2" height="3.3" fill="#6f7380"/><rect x="485.5" y="175.0" width="7.0" height="3.3" fill="#a89c84"/><rect x="492.5" y="175.0" width="8.8" height="3.3" fill="#626670"/><rect x="501.3" y="175.0" width="8.7" height="3.3" fill="#56606e"/><rect x="509.9" y="175.0" width="10.4" height="3.3" fill="#5c6270"/><rect x="520.4" y="175.0" width="8.4" height="3.3" fill="#707580"/><rect x="528.8" y="175.0" width="11.6" height="3.3" fill="#8c8a88"/><rect x="540.4" y="175.0" width="6.9" height="3.3" fill="#4c5260"/><rect x="547.3" y="175.0" width="6.9" height="3.3" fill="#707580"/><rect x="554.2" y="175.0" width="12.9" height="3.3" fill="#9a9078"/><rect x="567.1" y="175.0" width="5.7" height="3.3" fill="#7c7a78"/><rect x="572.8" y="175.0" width="6.5" height="3.3" fill="#7c7a78"/><rect x="579.3" y="175.0" width="6.1" height="3.3" fill="#626670"/><rect x="585.4" y="175.0" width="6.2" height="3.3" fill="#626670"/><rect x="591.6" y="175.0" width="4.6" height="3.3" fill="#707580"/><rect x="596.2" y="175.0" width="12.1" height="3.3" fill="#707580"/><rect x="608.2" y="175.0" width="6.1" height="3.3" fill="#a89c84"/><rect x="488.4" y="177.9" width="7.3" height="3.3" fill="#8a8680"/><rect x="495.7" y="177.9" width="6.8" height="3.3" fill="#5c6270"/><rect x="502.6" y="177.9" width="6.1" height="3.3" fill="#7c7a78"/><rect x="508.7" y="177.9" width="10.9" height="3.3" fill="#56606e"/><rect x="519.6" y="177.9" width="10.9" height="3.3" fill="#7c7a78"/><rect x="530.5" y="177.9" width="4.9" height="3.3" fill="#8c8a88"/><rect x="535.4" y="177.9" width="8.3" height="3.3" fill="#6f7380"/><rect x="543.7" y="177.9" width="8.8" height="3.3" fill="#626670"/><rect x="552.5" y="177.9" width="6.4" height="3.3" fill="#5c6270"/><rect x="558.9" y="177.9" width="10.0" height="3.3" fill="#6f7380"/><rect x="568.9" y="177.9" width="4.9" height="3.3" fill="#7c7a78"/><rect x="573.9" y="177.9" width="10.9" height="3.3" fill="#8c8a88"/><rect x="584.7" y="177.9" width="12.4" height="3.3" fill="#9a9078"/><rect x="597.1" y="177.9" width="6.9" height="3.3" fill="#5c6270"/><rect x="604.0" y="177.9" width="4.4" height="3.3" fill="#626670"/><rect x="608.4" y="177.9" width="7.8" height="3.3" fill="#8a8680"/><rect x="489.3" y="180.8" width="11.5" height="3.3" fill="#8c8a88"/><rect x="500.8" y="180.8" width="10.4" height="3.3" fill="#6f7380"/><rect x="511.3" y="180.8" width="11.3" height="3.3" fill="#8a8680"/><rect x="522.6" y="180.8" width="6.8" height="3.3" fill="#8c8a88"/><rect x="529.4" y="180.8" width="8.2" height="3.3" fill="#626670"/><rect x="537.6" y="180.8" width="5.3" height="3.3" fill="#8c8a88"/><rect x="542.9" y="180.8" width="11.8" height="3.3" fill="#7c7a78"/><rect x="554.7" y="180.8" width="4.7" height="3.3" fill="#a89c84"/><rect x="559.5" y="180.8" width="12.7" height="3.3" fill="#8a8680"/><rect x="572.1" y="180.8" width="8.1" height="3.3" fill="#7c7a78"/><rect x="580.2" y="180.8" width="10.6" height="3.3" fill="#707580"/><rect x="590.9" y="180.8" width="4.9" height="3.3" fill="#8c8a88"/><rect x="595.8" y="180.8" width="11.0" height="3.3" fill="#9a9078"/><rect x="606.8" y="180.8" width="12.9" height="3.3" fill="#6f7380"/><rect x="489.4" y="183.7" width="6.1" height="3.3" fill="#8c8a88"/><rect x="495.5" y="183.7" width="9.6" height="3.3" fill="#8c8a88"/><rect x="505.1" y="183.7" width="5.7" height="3.3" fill="#626670"/><rect x="510.8" y="183.7" width="10.0" height="3.3" fill="#8c8a88"/><rect x="520.9" y="183.7" width="8.7" height="3.3" fill="#9a9078"/><rect x="529.6" y="183.7" width="5.3" height="3.3" fill="#8a8680"/><rect x="534.9" y="183.7" width="4.2" height="3.3" fill="#4c5260"/><rect x="539.1" y="183.7" width="7.6" height="3.3" fill="#8a8680"/><rect x="546.8" y="183.7" width="12.6" height="3.3" fill="#707580"/><rect x="559.4" y="183.7" width="7.0" height="3.3" fill="#9a9078"/><rect x="566.4" y="183.7" width="12.1" height="3.3" fill="#707580"/><rect x="578.5" y="183.7" width="6.3" height="3.3" fill="#9a9078"/><rect x="584.8" y="183.7" width="11.7" height="3.3" fill="#707580"/><rect x="596.5" y="183.7" width="6.3" height="3.3" fill="#7c7a78"/><rect x="602.8" y="183.7" width="4.8" height="3.3" fill="#4c5260"/><rect x="607.6" y="183.7" width="8.9" height="3.3" fill="#a89c84"/><rect x="489.7" y="186.6" width="12.0" height="3.3" fill="#8a8680"/><rect x="501.7" y="186.6" width="10.0" height="3.3" fill="#8a8680"/><rect x="511.7" y="186.6" width="6.1" height="3.3" fill="#8c8a88"/><rect x="517.8" y="186.6" width="11.5" height="3.3" fill="#4c5260"/><rect x="529.3" y="186.6" width="5.4" height="3.3" fill="#56606e"/><rect x="534.7" y="186.6" width="6.1" height="3.3" fill="#6f7380"/><rect x="540.8" y="186.6" width="11.0" height="3.3" fill="#a89c84"/><rect x="551.8" y="186.6" width="5.6" height="3.3" fill="#707580"/><rect x="557.4" y="186.6" width="12.5" height="3.3" fill="#626670"/><rect x="569.9" y="186.6" width="8.4" height="3.3" fill="#5c6270"/><rect x="578.3" y="186.6" width="8.0" height="3.3" fill="#5c6270"/><rect x="586.3" y="186.6" width="11.8" height="3.3" fill="#707580"/><rect x="598.1" y="186.6" width="5.0" height="3.3" fill="#707580"/><rect x="603.2" y="186.6" width="6.7" height="3.3" fill="#707580"/><rect x="609.8" y="186.6" width="6.9" height="3.3" fill="#56606e"/><rect x="485.0" y="189.5" width="12.4" height="3.3" fill="#9a9078"/><rect x="497.4" y="189.5" width="4.7" height="3.3" fill="#7c7a78"/><rect x="502.0" y="189.5" width="9.9" height="3.3" fill="#56606e"/><rect x="512.0" y="189.5" width="12.2" height="3.3" fill="#626670"/><rect x="524.2" y="189.5" width="8.7" height="3.3" fill="#56606e"/><rect x="532.8" y="189.5" width="7.3" height="3.3" fill="#5c6270"/><rect x="540.2" y="189.5" width="11.6" height="3.3" fill="#a89c84"/><rect x="551.8" y="189.5" width="8.6" height="3.3" fill="#56606e"/><rect x="560.5" y="189.5" width="9.4" height="3.3" fill="#a89c84"/><rect x="569.9" y="189.5" width="7.7" height="3.3" fill="#9a9078"/><rect x="577.6" y="189.5" width="9.4" height="3.3" fill="#8a8680"/><rect x="587.0" y="189.5" width="7.1" height="3.3" fill="#8a8680"/><rect x="594.1" y="189.5" width="4.9" height="3.3" fill="#9a9078"/><rect x="598.9" y="189.5" width="12.2" height="3.3" fill="#a89c84"/><rect x="485.5" y="192.4" width="9.5" height="3.3" fill="#707580"/><rect x="495.0" y="192.4" width="10.0" height="3.3" fill="#6f7380"/><rect x="505.1" y="192.4" width="7.9" height="3.3" fill="#9a9078"/><rect x="512.9" y="192.4" width="7.3" height="3.3" fill="#a89c84"/><rect x="520.2" y="192.4" width="5.0" height="3.3" fill="#8a8680"/><rect x="525.3" y="192.4" width="7.4" height="3.3" fill="#56606e"/><rect x="532.7" y="192.4" width="12.6" height="3.3" fill="#56606e"/><rect x="545.2" y="192.4" width="5.4" height="3.3" fill="#56606e"/><rect x="550.6" y="192.4" width="6.5" height="3.3" fill="#7c7a78"/><rect x="557.1" y="192.4" width="8.4" height="3.3" fill="#5c6270"/><rect x="565.6" y="192.4" width="6.1" height="3.3" fill="#8a8680"/><rect x="571.6" y="192.4" width="10.8" height="3.3" fill="#56606e"/><rect x="582.5" y="192.4" width="6.0" height="3.3" fill="#626670"/><rect x="588.4" y="192.4" width="8.5" height="3.3" fill="#7c7a78"/><rect x="596.9" y="192.4" width="4.8" height="3.3" fill="#5c6270"/><rect x="601.7" y="192.4" width="9.5" height="3.3" fill="#8c8a88"/><rect x="485.8" y="195.3" width="10.9" height="3.3" fill="#5c6270"/><rect x="496.7" y="195.3" width="8.3" height="3.3" fill="#a89c84"/><rect x="505.0" y="195.3" width="7.9" height="3.3" fill="#7c7a78"/><rect x="512.9" y="195.3" width="12.4" height="3.3" fill="#4c5260"/><rect x="525.3" y="195.3" width="12.1" height="3.3" fill="#8a8680"/><rect x="537.4" y="195.3" width="11.1" height="3.3" fill="#4c5260"/><rect x="548.5" y="195.3" width="5.7" height="3.3" fill="#a89c84"/><rect x="554.2" y="195.3" width="10.8" height="3.3" fill="#8c8a88"/><rect x="565.0" y="195.3" width="4.2" height="3.3" fill="#626670"/><rect x="569.2" y="195.3" width="9.2" height="3.3" fill="#7c7a78"/><rect x="578.4" y="195.3" width="10.9" height="3.3" fill="#8a8680"/><rect x="589.3" y="195.3" width="11.8" height="3.3" fill="#8c8a88"/><rect x="601.1" y="195.3" width="7.2" height="3.3" fill="#a89c84"/><rect x="608.3" y="195.3" width="10.2" height="3.3" fill="#6f7380"/><rect x="485.8" y="198.2" width="6.0" height="3.3" fill="#5c6270"/><rect x="491.8" y="198.2" width="10.2" height="3.3" fill="#626670"/><rect x="502.0" y="198.2" width="6.9" height="3.3" fill="#9a9078"/><rect x="508.9" y="198.2" width="9.5" height="3.3" fill="#5c6270"/><rect x="518.3" y="198.2" width="5.2" height="3.3" fill="#707580"/><rect x="523.6" y="198.2" width="6.6" height="3.3" fill="#4c5260"/><rect x="530.2" y="198.2" width="7.6" height="3.3" fill="#707580"/><rect x="537.8" y="198.2" width="6.9" height="3.3" fill="#7c7a78"/><rect x="544.7" y="198.2" width="6.8" height="3.3" fill="#8a8680"/><rect x="551.5" y="198.2" width="12.8" height="3.3" fill="#626670"/><rect x="564.3" y="198.2" width="7.6" height="3.3" fill="#4c5260"/><rect x="571.9" y="198.2" width="9.1" height="3.3" fill="#626670"/><rect x="580.9" y="198.2" width="6.1" height="3.3" fill="#6f7380"/><rect x="587.0" y="198.2" width="11.2" height="3.3" fill="#6f7380"/><rect x="598.2" y="198.2" width="9.2" height="3.3" fill="#4c5260"/><rect x="607.5" y="198.2" width="7.7" height="3.3" fill="#626670"/><rect x="486.3" y="201.1" width="11.7" height="3.3" fill="#5c6270"/><rect x="498.0" y="201.1" width="8.5" height="3.3" fill="#a89c84"/><rect x="506.4" y="201.1" width="4.3" height="3.3" fill="#4c5260"/><rect x="510.7" y="201.1" width="7.3" height="3.3" fill="#626670"/><rect x="518.1" y="201.1" width="9.2" height="3.3" fill="#6f7380"/><rect x="527.3" y="201.1" width="11.6" height="3.3" fill="#8c8a88"/><rect x="538.9" y="201.1" width="11.1" height="3.3" fill="#626670"/><rect x="550.0" y="201.1" width="8.9" height="3.3" fill="#4c5260"/><rect x="558.9" y="201.1" width="12.5" height="3.3" fill="#6f7380"/><rect x="571.4" y="201.1" width="8.5" height="3.3" fill="#6f7380"/><rect x="579.9" y="201.1" width="7.1" height="3.3" fill="#5c6270"/><rect x="587.0" y="201.1" width="9.6" height="3.3" fill="#4c5260"/><rect x="596.7" y="201.1" width="10.7" height="3.3" fill="#8a8680"/><rect x="607.4" y="201.1" width="7.5" height="3.3" fill="#5c6270"/><rect x="487.3" y="204.0" width="4.7" height="3.3" fill="#626670"/><rect x="492.0" y="204.0" width="8.0" height="3.3" fill="#6f7380"/><rect x="500.0" y="204.0" width="6.5" height="3.3" fill="#8a8680"/><rect x="506.4" y="204.0" width="4.9" height="3.3" fill="#8c8a88"/><rect x="511.3" y="204.0" width="11.1" height="3.3" fill="#4c5260"/><rect x="522.4" y="204.0" width="9.4" height="3.3" fill="#626670"/><rect x="531.9" y="204.0" width="6.1" height="3.3" fill="#a89c84"/><rect x="537.9" y="204.0" width="8.5" height="3.3" fill="#707580"/><rect x="546.5" y="204.0" width="6.7" height="3.3" fill="#9a9078"/><rect x="553.2" y="204.0" width="5.3" height="3.3" fill="#707580"/><rect x="558.5" y="204.0" width="9.5" height="3.3" fill="#626670"/><rect x="567.9" y="204.0" width="9.4" height="3.3" fill="#707580"/><rect x="577.4" y="204.0" width="4.2" height="3.3" fill="#5c6270"/><rect x="581.5" y="204.0" width="9.7" height="3.3" fill="#a89c84"/><rect x="591.2" y="204.0" width="9.7" height="3.3" fill="#5c6270"/><rect x="600.9" y="204.0" width="10.1" height="3.3" fill="#a89c84"/><rect x="611.0" y="204.0" width="10.8" height="3.3" fill="#a89c84"/><rect x="489.0" y="206.9" width="7.2" height="3.3" fill="#626670"/><rect x="496.2" y="206.9" width="8.1" height="3.3" fill="#707580"/><rect x="504.3" y="206.9" width="8.4" height="3.3" fill="#9a9078"/><rect x="512.7" y="206.9" width="6.9" height="3.3" fill="#56606e"/><rect x="519.7" y="206.9" width="8.3" height="3.3" fill="#626670"/><rect x="528.0" y="206.9" width="12.7" height="3.3" fill="#6f7380"/><rect x="540.6" y="206.9" width="12.0" height="3.3" fill="#8a8680"/><rect x="552.6" y="206.9" width="12.5" height="3.3" fill="#8a8680"/><rect x="565.1" y="206.9" width="5.7" height="3.3" fill="#8c8a88"/><rect x="570.9" y="206.9" width="8.0" height="3.3" fill="#5c6270"/><rect x="578.9" y="206.9" width="7.0" height="3.3" fill="#626670"/><rect x="585.8" y="206.9" width="12.1" height="3.3" fill="#a89c84"/><rect x="597.9" y="206.9" width="12.9" height="3.3" fill="#56606e"/><rect x="610.8" y="206.9" width="6.5" height="3.3" fill="#6f7380"/><rect x="489.3" y="209.8" width="10.2" height="3.3" fill="#6f7380"/><rect x="499.4" y="209.8" width="10.0" height="3.3" fill="#8c8a88"/><rect x="509.5" y="209.8" width="5.3" height="3.3" fill="#9a9078"/><rect x="514.8" y="209.8" width="12.0" height="3.3" fill="#707580"/><rect x="526.8" y="209.8" width="7.9" height="3.3" fill="#56606e"/><rect x="534.7" y="209.8" width="7.4" height="3.3" fill="#4c5260"/><rect x="542.2" y="209.8" width="7.3" height="3.3" fill="#9a9078"/><rect x="549.5" y="209.8" width="4.8" height="3.3" fill="#626670"/><rect x="554.2" y="209.8" width="11.9" height="3.3" fill="#626670"/><rect x="566.2" y="209.8" width="6.8" height="3.3" fill="#8a8680"/><rect x="573.0" y="209.8" width="10.6" height="3.3" fill="#4c5260"/><rect x="583.6" y="209.8" width="7.5" height="3.3" fill="#4c5260"/><rect x="591.0" y="209.8" width="6.9" height="3.3" fill="#5c6270"/><rect x="597.9" y="209.8" width="9.3" height="3.3" fill="#5c6270"/><rect x="607.2" y="209.8" width="4.1" height="3.3" fill="#707580"/><rect x="486.2" y="212.7" width="4.4" height="3.3" fill="#8a8680"/><rect x="490.6" y="212.7" width="10.1" height="3.3" fill="#7c7a78"/><rect x="500.7" y="212.7" width="8.5" height="3.3" fill="#707580"/><rect x="509.2" y="212.7" width="4.7" height="3.3" fill="#8c8a88"/><rect x="513.9" y="212.7" width="4.7" height="3.3" fill="#56606e"/><rect x="518.6" y="212.7" width="5.6" height="3.3" fill="#8c8a88"/><rect x="524.1" y="212.7" width="4.4" height="3.3" fill="#4c5260"/><rect x="528.5" y="212.7" width="4.6" height="3.3" fill="#8a8680"/><rect x="533.1" y="212.7" width="9.1" height="3.3" fill="#6f7380"/><rect x="542.1" y="212.7" width="11.4" height="3.3" fill="#707580"/><rect x="553.6" y="212.7" width="11.8" height="3.3" fill="#8a8680"/><rect x="565.3" y="212.7" width="8.8" height="3.3" fill="#9a9078"/><rect x="574.2" y="212.7" width="9.5" height="3.3" fill="#8a8680"/><rect x="583.7" y="212.7" width="10.3" height="3.3" fill="#a89c84"/><rect x="594.0" y="212.7" width="7.2" height="3.3" fill="#8a8680"/><rect x="601.1" y="212.7" width="10.9" height="3.3" fill="#9a9078"/><rect x="487.2" y="215.6" width="6.4" height="3.3" fill="#56606e"/><rect x="493.6" y="215.6" width="12.7" height="3.3" fill="#4c5260"/><rect x="506.3" y="215.6" width="8.2" height="3.3" fill="#9a9078"/><rect x="514.5" y="215.6" width="6.1" height="3.3" fill="#9a9078"/><rect x="520.6" y="215.6" width="12.8" height="3.3" fill="#5c6270"/><rect x="533.4" y="215.6" width="11.9" height="3.3" fill="#6f7380"/><rect x="545.4" y="215.6" width="10.6" height="3.3" fill="#a89c84"/><rect x="555.9" y="215.6" width="9.6" height="3.3" fill="#8a8680"/><rect x="565.6" y="215.6" width="10.2" height="3.3" fill="#7c7a78"/><rect x="575.7" y="215.6" width="12.4" height="3.3" fill="#707580"/><rect x="588.1" y="215.6" width="5.8" height="3.3" fill="#9a9078"/><rect x="593.9" y="215.6" width="4.2" height="3.3" fill="#a89c84"/><rect x="598.1" y="215.6" width="12.4" height="3.3" fill="#5c6270"/><rect x="610.5" y="215.6" width="5.3" height="3.3" fill="#7c7a78"/><rect x="489.0" y="218.5" width="8.8" height="3.3" fill="#56606e"/><rect x="497.8" y="218.5" width="6.4" height="3.3" fill="#9a9078"/><rect x="504.2" y="218.5" width="7.3" height="3.3" fill="#8c8a88"/><rect x="511.4" y="218.5" width="12.8" height="3.3" fill="#56606e"/><rect x="524.2" y="218.5" width="5.7" height="3.3" fill="#a89c84"/><rect x="529.9" y="218.5" width="10.5" height="3.3" fill="#707580"/><rect x="540.4" y="218.5" width="6.2" height="3.3" fill="#56606e"/><rect x="546.6" y="218.5" width="4.5" height="3.3" fill="#626670"/><rect x="551.1" y="218.5" width="12.5" height="3.3" fill="#8c8a88"/><rect x="563.6" y="218.5" width="6.6" height="3.3" fill="#7c7a78"/><rect x="570.3" y="218.5" width="11.2" height="3.3" fill="#6f7380"/><rect x="581.5" y="218.5" width="12.2" height="3.3" fill="#6f7380"/><rect x="593.6" y="218.5" width="5.1" height="3.3" fill="#5c6270"/><rect x="598.7" y="218.5" width="6.3" height="3.3" fill="#56606e"/><rect x="605.0" y="218.5" width="6.4" height="3.3" fill="#707580"/><rect x="484.3" y="221.4" width="12.4" height="3.3" fill="#9a9078"/><rect x="496.7" y="221.4" width="9.9" height="3.3" fill="#707580"/><rect x="506.6" y="221.4" width="11.0" height="3.3" fill="#9a9078"/><rect x="517.6" y="221.4" width="8.2" height="3.3" fill="#8c8a88"/><rect x="525.8" y="221.4" width="5.5" height="3.3" fill="#626670"/><rect x="531.3" y="221.4" width="7.3" height="3.3" fill="#9a9078"/><rect x="538.6" y="221.4" width="10.4" height="3.3" fill="#a89c84"/><rect x="549.0" y="221.4" width="12.5" height="3.3" fill="#8a8680"/><rect x="561.5" y="221.4" width="6.4" height="3.3" fill="#a89c84"/><rect x="567.9" y="221.4" width="6.0" height="3.3" fill="#6f7380"/><rect x="573.9" y="221.4" width="9.2" height="3.3" fill="#8a8680"/><rect x="583.2" y="221.4" width="10.4" height="3.3" fill="#4c5260"/><rect x="593.6" y="221.4" width="12.6" height="3.3" fill="#8c8a88"/><rect x="606.2" y="221.4" width="10.2" height="3.3" fill="#4c5260"/><rect x="489.3" y="224.3" width="7.1" height="3.3" fill="#707580"/><rect x="496.3" y="224.3" width="10.4" height="3.3" fill="#a89c84"/><rect x="506.7" y="224.3" width="12.5" height="3.3" fill="#8c8a88"/><rect x="519.1" y="224.3" width="4.7" height="3.3" fill="#7c7a78"/><rect x="523.9" y="224.3" width="11.5" height="3.3" fill="#4c5260"/><rect x="535.3" y="224.3" width="8.4" height="3.3" fill="#9a9078"/><rect x="543.7" y="224.3" width="13.0" height="3.3" fill="#7c7a78"/><rect x="556.7" y="224.3" width="12.6" height="3.3" fill="#8a8680"/><rect x="569.3" y="224.3" width="12.2" height="3.3" fill="#56606e"/><rect x="581.5" y="224.3" width="7.1" height="3.3" fill="#56606e"/><rect x="588.5" y="224.3" width="9.0" height="3.3" fill="#7c7a78"/><rect x="597.5" y="224.3" width="5.8" height="3.3" fill="#7c7a78"/><rect x="603.3" y="224.3" width="11.0" height="3.3" fill="#7c7a78"/><rect x="489.1" y="227.2" width="10.7" height="3.3" fill="#9a9078"/><rect x="499.8" y="227.2" width="4.7" height="3.3" fill="#56606e"/><rect x="504.6" y="227.2" width="9.6" height="3.3" fill="#5c6270"/><rect x="514.1" y="227.2" width="12.3" height="3.3" fill="#8c8a88"/><rect x="526.4" y="227.2" width="9.9" height="3.3" fill="#7c7a78"/><rect x="536.3" y="227.2" width="10.5" height="3.3" fill="#7c7a78"/><rect x="546.8" y="227.2" width="9.7" height="3.3" fill="#6f7380"/><rect x="556.5" y="227.2" width="7.4" height="3.3" fill="#a89c84"/><rect x="563.9" y="227.2" width="12.9" height="3.3" fill="#707580"/><rect x="576.8" y="227.2" width="7.9" height="3.3" fill="#626670"/><rect x="584.7" y="227.2" width="12.2" height="3.3" fill="#5c6270"/><rect x="597.0" y="227.2" width="5.9" height="3.3" fill="#4c5260"/><rect x="602.9" y="227.2" width="7.3" height="3.3" fill="#9a9078"/><rect x="610.2" y="227.2" width="8.5" height="3.3" fill="#7c7a78"/><rect x="487.7" y="230.1" width="8.1" height="3.3" fill="#a89c84"/><rect x="495.9" y="230.1" width="11.4" height="3.3" fill="#a89c84"/><rect x="507.3" y="230.1" width="9.5" height="3.3" fill="#7c7a78"/><rect x="516.8" y="230.1" width="10.2" height="3.3" fill="#6f7380"/><rect x="527.0" y="230.1" width="8.6" height="3.3" fill="#5c6270"/><rect x="535.6" y="230.1" width="10.0" height="3.3" fill="#6f7380"/><rect x="545.6" y="230.1" width="10.2" height="3.3" fill="#626670"/><rect x="555.8" y="230.1" width="11.8" height="3.3" fill="#4c5260"/><rect x="567.6" y="230.1" width="9.5" height="3.3" fill="#6f7380"/><rect x="577.1" y="230.1" width="9.0" height="3.3" fill="#8c8a88"/><rect x="586.1" y="230.1" width="6.7" height="3.3" fill="#8a8680"/><rect x="592.8" y="230.1" width="8.9" height="3.3" fill="#707580"/><rect x="601.6" y="230.1" width="8.6" height="3.3" fill="#8a8680"/><rect x="610.2" y="230.1" width="8.0" height="3.3" fill="#6f7380"/><rect x="486.2" y="233.0" width="7.0" height="3.3" fill="#9a9078"/><rect x="493.1" y="233.0" width="12.3" height="3.3" fill="#707580"/><rect x="505.4" y="233.0" width="9.0" height="3.3" fill="#7c7a78"/><rect x="514.4" y="233.0" width="5.4" height="3.3" fill="#6f7380"/><rect x="519.8" y="233.0" width="7.7" height="3.3" fill="#626670"/><rect x="527.5" y="233.0" width="7.1" height="3.3" fill="#4c5260"/><rect x="534.6" y="233.0" width="7.4" height="3.3" fill="#8c8a88"/><rect x="542.0" y="233.0" width="5.3" height="3.3" fill="#626670"/><rect x="547.3" y="233.0" width="6.3" height="3.3" fill="#626670"/><rect x="553.6" y="233.0" width="6.2" height="3.3" fill="#5c6270"/><rect x="559.8" y="233.0" width="10.3" height="3.3" fill="#5c6270"/><rect x="570.2" y="233.0" width="6.3" height="3.3" fill="#707580"/><rect x="576.5" y="233.0" width="9.7" height="3.3" fill="#9a9078"/><rect x="586.3" y="233.0" width="12.8" height="3.3" fill="#a89c84"/><rect x="599.1" y="233.0" width="12.6" height="3.3" fill="#8a8680"/><rect x="484.8" y="235.9" width="5.6" height="3.3" fill="#56606e"/><rect x="490.4" y="235.9" width="9.3" height="3.3" fill="#8a8680"/><rect x="499.7" y="235.9" width="11.0" height="3.3" fill="#9a9078"/><rect x="510.7" y="235.9" width="11.7" height="3.3" fill="#a89c84"/><rect x="522.3" y="235.9" width="9.6" height="3.3" fill="#4c5260"/><rect x="531.9" y="235.9" width="9.5" height="3.3" fill="#626670"/><rect x="541.5" y="235.9" width="4.1" height="3.3" fill="#626670"/><rect x="545.6" y="235.9" width="8.0" height="3.3" fill="#5c6270"/><rect x="553.6" y="235.9" width="12.1" height="3.3" fill="#707580"/><rect x="565.7" y="235.9" width="12.3" height="3.3" fill="#626670"/><rect x="578.0" y="235.9" width="5.4" height="3.3" fill="#8c8a88"/><rect x="583.4" y="235.9" width="10.3" height="3.3" fill="#9a9078"/><rect x="593.7" y="235.9" width="11.0" height="3.3" fill="#707580"/><rect x="604.8" y="235.9" width="5.7" height="3.3" fill="#626670"/><rect x="610.5" y="235.9" width="12.3" height="3.3" fill="#707580"/><rect x="484" y="85" width="134" height="225" fill="url(#tsh)"/><rect x="492" y="93" width="33" height="1.6" fill="#0d0d0d"/><rect x="492" y="96" width="68" height="1.6" fill="#0d0d0d"/><rect x="492" y="99" width="53" height="1.6" fill="#0d0d0d"/><rect x="532" y="101" width="43" height="1.6" fill="#0d0d0d"/><rect x="540" y="104" width="30" height="1.6" fill="#0d0d0d"/><rect x="492" y="107" width="38" height="1.6" fill="#0d0d0d"/><rect x="545" y="109" width="35" height="1.6" fill="#0d0d0d"/><rect x="492" y="113" width="20" height="1.6" fill="#0d0d0d"/><rect x="492" y="116" width="23" height="1.6" fill="#0d0d0d"/><rect x="492" y="120" width="28" height="1.6" fill="#0d0d0d"/><rect x="492" y="124" width="26" height="1.6" fill="#0d0d0d"/><rect x="492" y="128" width="23" height="1.6" fill="#0d0d0d"/><rect x="492" y="132" width="38" height="1.6" fill="#0d0d0d"/><rect x="500" y="134" width="108" height="1.6" fill="#0d0d0d"/><rect x="492" y="198" width="28" height="1.6" fill="#0d0d0d"/><rect x="560" y="210" width="45" height="1.6" fill="#0d0d0d"/><rect x="492" y="148" width="13" height="1.6" fill="#0d0d0d"/><rect x="570" y="214" width="30" height="1.6" fill="#0d0d0d"/><rect x="600" y="276" width="10" height="1.6" fill="#0d0d0d"/><rect x="580" y="270" width="20" height="1.6" fill="#0d0d0d"/><rect x="520" y="262" width="10" height="1.6" fill="#0d0d0d"/><rect x="492" y="117" width="18" height="16" fill="#050505" opacity=".9"/></g><path d="M545 90 H572 M548 95 H575 M556 99 H578 M560 103 H584" stroke="#222" stroke-width="1"/><g transform="translate(637.4,288.6)"><circle r="10" fill="none" stroke="#fff" stroke-width="1.6"/><circle r="10" fill="none" stroke="#e02020" stroke-width="1.6" stroke-dasharray="4 4"/><path d="M0 -23 V-6 M0 6 V23 M-23 0 H-6 M6 0 H23" stroke="#000" stroke-width="1.3"/><path d="M-4 4 L-1 1 M1 -1 L4 -4" stroke="#000" stroke-width="1"/></g><circle cx="1068.2" cy="264.6" r="46.5" fill="#000"/><circle cx="1193" cy="264.6" r="46.5" fill="url(#sph)"/></svg></div><div class="a" style="left:296px;top:6px;width:132px;height:24px;background:#2c2c2c;border-radius:5px"></div><svg class="a" style="left:296px;top:6px" width="132" height="24"><g transform="translate(-0.4,0)"><g stroke="#8f8f8f" stroke-width="1.5" fill="none"><path d="M5.95 8.4V4.35H10M18.8 4.35H22.85V8.4M22.85 16.9V20.95H18.8M10 20.95H5.95V16.9"/></g><rect x="8.9" y="7.4" width="10" height="10" fill="#d8d8d8"/></g><path d="M120 10.5 L123 13.5 L126 10.5" stroke="#e0e0e0" stroke-width="1.3" fill="none"/></svg><div class="t" style="left:326px;top:11px;font-size:13.9px;color:#e6e6e6">Object Mode</div><div class="a" style="left:435px;top:7px;width:46.5px;height:21.5px;background:#575757;border-radius:4px"></div><div class="t" style="left:443px;top:11px;font-size:13.9px;color:#e6e6e6">View</div><div class="a" style="left:484px;top:7px;width:53.6px;height:21.5px;background:#575757;border-radius:4px"></div><div class="t" style="left:492px;top:11px;font-size:13.9px;color:#e6e6e6">Select</div><div class="a" style="left:540.3px;top:7px;width:40.2px;height:21.5px;background:#575757;border-radius:4px"></div><div class="t" style="left:548px;top:11px;font-size:13.9px;color:#e6e6e6">Add</div><div class="a" style="left:583px;top:7px;width:55.8px;height:21.5px;background:#575757;border-radius:4px"></div><div class="t" style="left:591px;top:11px;font-size:13.9px;color:#e6e6e6">Object</div><div class="t" style="left:296px;top:46.5px;font-size:13.6px;color:#f4f4f4;text-shadow:1px 1px 1px rgba(0,0,0,.55)">User Perspective</div><div class="t" style="left:296px;top:69px;font-size:13.6px;color:#f4f4f4;text-shadow:1px 1px 1px rgba(0,0,0,.55)">(1) Scene Collection | 4.001</div><div class="a" style="left:286px;top:44px;width:8px;height:17px;background:rgba(80,80,80,.25);border-radius:0 4px 4px 0"></div><svg class="a" style="left:286px;top:47px" width="8" height="11"><path d="M2 1.5 L5.5 5.5 L2 9.5" stroke="#999" stroke-width="1.1" fill="none"/></svg><div class="a" style="left:1229px;top:6px;width:38.4px;height:23.5px;background:#2c2c2c;border-radius:4px"></div><div class="a" style="left:1274.4px;top:6px;width:47.2px;height:23.5px;background:#2c2c2c;border-radius:4px"></div><div class="a" style="left:1274.4px;top:6px;width:22.6px;height:23.5px;background:#5680c2;border-radius:4px 0 0 4px"></div><div class="a" style="left:1328.6px;top:6px;width:47.4px;height:23.5px;background:#2c2c2c;border-radius:4px"></div><div class="a" style="left:1328.6px;top:6px;width:23.1px;height:23.5px;background:#5680c2;border-radius:4px 0 0 4px"></div><div class="a" style="left:1382.7px;top:6px;width:24px;height:23.5px;background:#9d9c9a;border-radius:4px"></div><div class="a" style="left:1413px;top:6px;width:118px;height:23.5px;background:#2c2c2c;border-radius:4px"></div><div class="a" style="left:1413.8px;top:6.8px;width:22.0px;height:22px;background:#555;border-radius:4px 0 0 4px"></div><div class="a" style="left:1436.6px;top:6.8px;width:22.3px;height:22px;background:#555;border-radius:0"></div><div class="a" style="left:1459.7px;top:6.8px;width:21.7px;height:22px;background:#5680c2;border-radius:0"></div><div class="a" style="left:1482.2px;top:6.8px;width:23.0px;height:22px;background:#555;border-radius:0"></div><svg class="a" style="left:1220px;top:0" width="316" height="40"><g transform="translate(-1220,0)"><path d="M1236.3 13.7 Q1242.9 7.2 1249.5 13.7 Q1242.9 19.8 1236.3 13.7Z" fill="none" stroke="#d8d8d8" stroke-width="1.7"/><circle cx="1242.9" cy="13.7" r="2.2" fill="#d8d8d8"/><path d="M1232.8 16.4 L1242.4 20.8 L1238.6 22.2 L1237 26.4Z" fill="#d8d8d8"/><path d="M1277.4 12.4 Q1290 13.5 1291.8 26" stroke="#fff" stroke-width="1.3" fill="none"/><circle cx="1279.8" cy="23.8" r="2" fill="none" stroke="#fff" stroke-width="1.2"/><path d="M1281.3 22.3 L1293.2 10.4 M1288.8 10.4 H1293.2 V14.8" stroke="#fff" stroke-width="1.3" fill="none"/><circle cx="1342.7" cy="15.8" r="6.3" fill="#fff"/><path d="M1340 15 Q1341 19 1344.5 18.5 M1339.5 12.8 h1.5" stroke="#5680c2" stroke-width="1.1" fill="none"/><path d="M1334.8 14.8 A5.6 5.6 0 1 0 1343.2 24.6" stroke="#fff" stroke-width="1.2" fill="none"/></g><path d="M37 17 L40.5 20.5 L44 17" stroke="#e0e0e0" stroke-width="1.3" fill="none"/><path d="M86.5 17 L90.0 20.5 L93.5 17" stroke="#e0e0e0" stroke-width="1.3" fill="none"/><path d="M140.5 17 L144.0 20.5 L147.5 17" stroke="#e0e0e0" stroke-width="1.3" fill="none"/><path d="M171 10.3 H182.3 V21.3 H179" fill="none" stroke="#888" stroke-width="1.1"/><rect x="166.7" y="12.9" width="12.3" height="12.5" fill="#8f8f8f" stroke="#888" stroke-width="1.1"/><path d="M170.5 16 v2 M170.5 20 v2 h2" stroke="#7a7a7a" stroke-width="1"/><circle cx="205" cy="17.8" r="7.5" fill="none" stroke="#cfcfcf" stroke-width="1.2"/><path d="M197.5 17.8 H212.5 M205 10.3 V25.3" stroke="#cfcfcf" stroke-width="1"/><ellipse cx="205" cy="17.8" rx="3.5" ry="7.5" fill="none" stroke="#cfcfcf" stroke-width="1"/><circle cx="228" cy="17.8" r="7.8" fill="#c8c8c8"/><circle cx="251" cy="17.8" r="7.8" fill="#fff"/><path d="M251 10 V17.8 H258.8 A7.8 7.8 0 0 0 251 10Z" fill="#5680c2"/><path d="M251 17.8 L257 23" stroke="#5680c2" stroke-width="1.5"/><circle cx="274" cy="17.8" r="7.5" fill="none" stroke="#bdbdbd" stroke-width="1.2"/><path d="M269.5 15 A5 5 0 0 1 274 11.5" stroke="#bdbdbd" stroke-width="1.2" fill="none"/><path d="M296.5 16.8 L300.0 20.3 L303.5 16.8" stroke="#e0e0e0" stroke-width="1.3" fill="none"/></svg><svg class="a" style="left:1420px;top:35px" width="116" height="120"><path d="M60.7 58 V19.5" stroke="#3b7fd1" stroke-width="2"/><path d="M60.7 58 H88" stroke="#6ab02c" stroke-width="2"/><path d="M60.7 58 L50.5 62" stroke="#d43a4e" stroke-width="2"/><circle cx="70.8" cy="53.2" r="7.5" fill="none" stroke="#b0333f" stroke-width="1.4"/><circle cx="22.9" cy="56.6" r="8.6" fill="#7b816f" stroke="#6aa52a" stroke-width="1.5"/><circle cx="60.7" cy="96.7" r="8.6" fill="#5b6a82" stroke="#3b7fd1" stroke-width="1.5"/><circle cx="60.7" cy="19.5" r="9.6" fill="#3b82d8"/><text x="60.7" y="24.5" font-size="13" text-anchor="middle" fill="#1a2a3a" font-family="Liberation Sans">Z</text><circle cx="97.8" cy="59" r="9.8" fill="#6cb71f"/><text x="97.8" y="64" font-size="13" text-anchor="middle" fill="#1e2a10" font-family="Liberation Sans">Y</text><circle cx="50.5" cy="62.3" r="9.8" fill="#f0365b"/><text x="50.5" y="67.3" font-size="13" text-anchor="middle" fill="#2a0a10" font-family="Liberation Sans">X</text></svg><div class="a" style="left:1496.9px;top:143.6px;width:33.2px;height:33.2px;border-radius:50%;background:rgba(60,60,60,.4)"></div><div class="a" style="left:1496.9px;top:179.7px;width:33.2px;height:33.2px;border-radius:50%;background:rgba(60,60,60,.4)"></div><div class="a" style="left:1496.9px;top:216.6px;width:33.2px;height:33.2px;border-radius:50%;background:rgba(60,60,60,.4)"></div><div class="a" style="left:1496.9px;top:251.7px;width:33.2px;height:33.2px;border-radius:50%;background:rgba(60,60,60,.4)"></div><svg class="a" style="left:0;top:0" width="1536" height="300"><circle cx="1515.3" cy="158.39999999999998" r="7.6" fill="#f0f0f0"/><path d="M1515.3 154.39999999999998 V162.39999999999998 M1511.3 158.39999999999998 H1519.3" stroke="rgba(60,60,60,.4)" stroke-width="1.4"/><path d="M1510.0 163.7 L1504.5 169.2" stroke="#f0f0f0" stroke-width="2.2" stroke-linecap="round"/><g stroke="#f0f0f0" stroke-linecap="round" fill="none" stroke-width="2.5"><path d="M1510.5 198.3 L1508.9 189.3 M1513.1 198.3 L1512.8 187.0 M1516.1 198.3 L1517.3 187.9 M1518.5 199.3 L1520.9 190.9"/><path d="M1510.5 202.8 L1505.2 198.60000000000002"/></g><ellipse cx="1514.4" cy="200.9" rx="6.1" ry="5.6" fill="#f0f0f0"/><g fill="#f0f0f0"><circle cx="1508.5" cy="229" r="4.2"/><circle cx="1517.5" cy="228" r="4.6"/><rect x="1505" y="233" width="13.5" height="7"/><path d="M1518 236.5 L1523.5 232.5 V240.5Z"/><rect x="1502" y="235" width="2" height="2.5"/></g><g fill="#8f8f8e"><circle cx="1508.5" cy="229" r="1.3"/><circle cx="1517.5" cy="228" r="1.5"/></g><g stroke="#f0f0f0" fill="none" stroke-width="1.3"><path d="M1505 276 L1507.5 262 H1519.5 L1522.5 276 Z"/><path d="M1504.2 271 H1523 M1505.5 266.3 H1521.5 M1511.5 262 L1510.5 276 M1515.5 262 L1516.5 276"/></g></svg><div class="a" style="left:1530px;top:52px;width:6px;height:18px;background:#a9a8a6;border-radius:4px 0 0 4px"></div><div class="a" style="left:349.2px;top:0;width:4.6px;height:1.2px;background:#e0a02a;border-radius:0 0 1px 1px"></div><div class="a" style="left:355.5px;top:0;width:4.6px;height:1.2px;background:#e0a02a;border-radius:0 0 1px 1px"></div><div class="a" style="left:362px;top:0;width:4.6px;height:1.2px;background:#e0a02a;border-radius:0 0 1px 1px"></div><div class="a" style="left:368.6px;top:0;width:4.6px;height:1.2px;background:#e0a02a;border-radius:0 0 1px 1px"></div><div class="a" style="left:1531px;top:378px;width:5px;height:16px;background:#2a2a2a;border-radius:4px 0 0 4px"></div><div class="a" style="left:1px;top:331px;width:282px;height:62px;background:#3a3a3a;border-radius:5px 5px 0 0"></div><div class="a" style="left:1px;top:393px;width:282px;height:467px;background:#474747"></div><div class="a" style="left:10.7px;top:335.7px;width:37px;height:22.5px;background:#2e2e2e;border-radius:4px"></div><svg class="a" style="left:0;top:330px" width="50" height="30"><path d="M18.8 9.7 H16.2 V25.2 H32.3 V15" stroke="#a8a8a8" stroke-width="1.4" fill="none"/><path d="M20.6 9 H33 V13.9 H28.9 V20.5 H25.1 V13.9 H23.3 V17.3 H20.6Z" fill="#dcdcdc"/><path d="M37.2 16.2 L40.6 19.6 L44 16.2" stroke="#e0e0e0" stroke-width="1.3" fill="none"/></svg><div class="a" style="left:10.7px;top:367px;width:77px;height:23.4px;background:#2e2e2e;border-radius:4px"></div><svg class="a" style="left:0;top:360px" width="200" height="40"><g transform="translate(15.5,11)"><path d="M.6 .6 H16.4 V16.4 H.6Z" fill="none" stroke="#d0d0d0" stroke-width="1.1"/><path d="M1 16.5 L6.5 8 L12 16.5Z" fill="#e6e6e6"/><circle cx="12.5" cy="4.8" r="1.6" fill="#e6e6e6"/></g><path d="M77.5 18 L80.5 21 L83.5 18" stroke="#e0e0e0" stroke-width="1.2" fill="none"/><g fill="#e6e6e6"><rect x="99" y="11" width="17" height="2"/><rect x="99" y="17" width="17" height="2"/><rect x="99" y="23" width="17" height="2"/></g><g transform="translate(143.5,11)"><path d="M.6 .6 H16.4 V16.4 H.6Z" fill="none" stroke="#d0d0d0" stroke-width="1.1"/><path d="M1 16.5 L6.5 8 L12 16.5Z" fill="#e6e6e6"/><circle cx="12.5" cy="4.8" r="1.6" fill="#e6e6e6"/></g><path d="M164.5 18 L167.5 21 L170.5 18" stroke="#e0e0e0" stroke-width="1.2" fill="none"/></svg><div class="t" style="left:41.5px;top:372px;font-size:13.8px;color:#e6e6e6">View</div><div class="a" style="left:138.7px;top:367px;width:40px;height:23.4px;background:#2e2e2e;border-radius:4px 0 0 4px"></div><svg class="a" style="left:0;top:360px" width="200" height="40"><g transform="translate(143.5,11)"><path d="M.6 .6 H16.4 V16.4 H.6Z" fill="none" stroke="#d0d0d0" stroke-width="1.1"/><path d="M1 16.5 L6.5 8 L12 16.5Z" fill="#e6e6e6"/><circle cx="12.5" cy="4.8" r="1.6" fill="#e6e6e6"/></g><path d="M164.5 18 L167.5 21 L170.5 18" stroke="#e0e0e0" stroke-width="1.2" fill="none"/></svg><div class="a" style="left:177px;top:367px;width:106px;height:23.4px;background:#1d1d1d;overflow:hidden"><div class="t" style="left:8.5px;top:5px;font-size:13.8px;color:#e6e6e6">Castle wall 1.jpg</div></div><div class="a" style="left:0;top:411px;width:9px;height:17px;background:#3f3f3f;border-radius:0 4px 4px 0"></div><svg class="a" style="left:0;top:414px" width="9" height="11"><path d="M2.5 1.5 L6 5.5 L2.5 9.5" stroke="#9a9a9a" stroke-width="1.1" fill="none"/></svg><div class="a" style="left:273px;top:411px;width:10px;height:17px;background:#3f3f3f;border-radius:4px 0 0 4px"></div><svg class="a" style="left:273px;top:414px" width="10" height="11"><path d="M7 1.5 L3.5 5.5 L7 9.5" stroke="#9a9a9a" stroke-width="1.1" fill="none"/></svg><div class="a" style="left:238.5px;top:403px;width:33.5px;height:33.5px;border-radius:50%;background:#3b3b3b"></div><div class="a" style="left:238.5px;top:439.5px;width:33.5px;height:33.5px;border-radius:50%;background:#3b3b3b"></div><svg class="a" style="left:0;top:0" width="290" height="480"><circle cx="257.3" cy="418.0" r="7.6" fill="#eaeaea"/><path d="M257.3 414.0 V422.0 M253.3 418.0 H261.3" stroke="#3b3b3b" stroke-width="1.4"/><path d="M252.0 423.3 L246.5 428.8" stroke="#eaeaea" stroke-width="2.2" stroke-linecap="round"/><g stroke="#e6e6e6" stroke-linecap="round" fill="none" stroke-width="2.5"><path d="M252.3 458.3 L250.70000000000002 449.3 M254.9 458.3 L254.60000000000002 447.0 M257.90000000000003 458.3 L259.1 447.90000000000003 M260.3 459.3 L262.7 450.90000000000003"/><path d="M252.3 462.8 L247.0 458.6"/></g><ellipse cx="256.2" cy="460.90000000000003" rx="6.1" ry="5.6" fill="#e6e6e6"/></svg><svg class="a" style="left:74px;top:516px" width="167" height="149"><use href="#w1" width="167" height="149"/></svg><svg class="a" style="left:0;top:0" width="1536" height="860"><rect x="286" y="361" width="1250" height="499" fill="#232323"/><rect x="290.15" y="361" width="1.2" height="499" fill="#1c1c1c"/><rect x="304.90" y="361" width="1.2" height="499" fill="#1c1c1c"/><rect x="319.65" y="361" width="1.2" height="499" fill="#1c1c1c"/><rect x="334.40" y="361" width="1.2" height="499" fill="#1c1c1c"/><rect x="349.15" y="361" width="1.8" height="499" fill="#171717"/><rect x="363.90" y="361" width="1.2" height="499" fill="#1c1c1c"/><rect x="378.65" y="361" width="1.2" height="499" fill="#1c1c1c"/><rect x="393.40" y="361" width="1.2" height="499" fill="#1c1c1c"/><rect x="408.15" y="361" width="1.2" height="499" fill="#1c1c1c"/><rect x="422.90" y="361" width="1.8" height="499" fill="#171717"/><rect x="437.65" y="361" width="1.2" height="499" fill="#1c1c1c"/><rect x="452.40" y="361" width="1.2" height="499" fill="#1c1c1c"/><rect x="467.15" y="361" width="1.2" height="499" fill="#1c1c1c"/><rect x="481.90" y="361" width="1.2" height="499" fill="#1c1c1c"/><rect x="496.65" y="361" width="1.8" height="499" fill="#171717"/><rect x="511.40" y="361" width="1.2" height="499" fill="#1c1c1c"/><rect x="526.15" y="361" width="1.2" height="499" fill="#1c1c1c"/><rect x="540.90" y="361" width="1.2" height="499" fill="#1c1c1c"/><rect x="555.65" y="361" width="1.2" height="499" fill="#1c1c1c"/><rect x="570.40" y="361" width="1.8" height="499" fill="#171717"/><rect x="585.15" y="361" width="1.2" height="499" fill="#1c1c1c"/><rect x="599.90" y="361" width="1.2" height="499" fill="#1c1c1c"/><rect x="614.65" y="361" width="1.2" height="499" fill="#1c1c1c"/><rect x="629.40" y="361" width="1.2" height="499" fill="#1c1c1c"/><rect x="644.15" y="361" width="1.8" height="499" fill="#171717"/><rect x="658.90" y="361" width="1.2" height="499" fill="#1c1c1c"/><rect x="673.65" y="361" width="1.2" height="499" fill="#1c1c1c"/><rect x="688.40" y="361" width="1.2" height="499" fill="#1c1c1c"/><rect x="703.15" y="361" width="1.2" height="499" fill="#1c1c1c"/><rect x="717.90" y="361" width="1.8" height="499" fill="#171717"/><rect x="732.65" y="361" width="1.2" height="499" fill="#1c1c1c"/><rect x="747.40" y="361" width="1.2" height="499" fill="#1c1c1c"/><rect x="762.15" y="361" width="1.2" height="499" fill="#1c1c1c"/><rect x="776.90" y="361" width="1.2" height="499" fill="#1c1c1c"/><rect x="791.65" y="361" width="1.8" height="499" fill="#171717"/><rect x="806.40" y="361" width="1.2" height="499" fill="#1c1c1c"/><rect x="821.15" y="361" width="1.2" height="499" fill="#1c1c1c"/><rect x="835.90" y="361" width="1.2" height="499" fill="#1c1c1c"/><rect x="850.65" y="361" width="1.2" height="499" fill="#1c1c1c"/><rect x="865.40" y="361" width="1.8" height="499" fill="#171717"/><rect x="880.15" y="361" width="1.2" height="499" fill="#1c1c1c"/><rect x="894.90" y="361" width="1.2" height="499" fill="#1c1c1c"/><rect x="909.65" y="361" width="1.2" height="499" fill="#1c1c1c"/><rect x="924.40" y="361" width="1.2" height="499" fill="#1c1c1c"/><rect x="939.15" y="361" width="1.8" height="499" fill="#171717"/><rect x="953.90" y="361" width="1.2" height="499" fill="#1c1c1c"/><rect x="968.65" y="361" width="1.2" height="499" fill="#1c1c1c"/><rect x="983.40" y="361" width="1.2" height="499" fill="#1c1c1c"/><rect x="998.15" y="361" width="1.2" height="499" fill="#1c1c1c"/><rect x="1012.90" y="361" width="1.8" height="499" fill="#171717"/><rect x="1027.65" y="361" width="1.2" height="499" fill="#1c1c1c"/><rect x="1042.40" y="361" width="1.2" height="499" fill="#1c1c1c"/><rect x="1057.15" y="361" width="1.2" height="499" fill="#1c1c1c"/><rect x="1071.90" y="361" width="1.2" height="499" fill="#1c1c1c"/><rect x="1086.65" y="361" width="1.8" height="499" fill="#171717"/><rect x="1101.40" y="361" width="1.2" height="499" fill="#1c1c1c"/><rect x="1116.15" y="361" width="1.2" height="499" fill="#1c1c1c"/><rect x="1130.90" y="361" width="1.2" height="499" fill="#1c1c1c"/><rect x="1145.65" y="361" width="1.2" height="499" fill="#1c1c1c"/><rect x="1160.40" y="361" width="1.8" height="499" fill="#171717"/><rect x="1175.15" y="361" width="1.2" height="499" fill="#1c1c1c"/><rect x="1189.90" y="361" width="1.2" height="499" fill="#1c1c1c"/><rect x="1204.65" y="361" width="1.2" height="499" fill="#1c1c1c"/><rect x="1219.40" y="361" width="1.2" height="499" fill="#1c1c1c"/><rect x="1234.15" y="361" width="1.8" height="499" fill="#171717"/><rect x="1248.90" y="361" width="1.2" height="499" fill="#1c1c1c"/><rect x="1263.65" y="361" width="1.2" height="499" fill="#1c1c1c"/><rect x="1278.40" y="361" width="1.2" height="499" fill="#1c1c1c"/><rect x="1293.15" y="361" width="1.2" height="499" fill="#1c1c1c"/><rect x="1307.90" y="361" width="1.8" height="499" fill="#171717"/><rect x="1322.65" y="361" width="1.2" height="499" fill="#1c1c1c"/><rect x="1337.40" y="361" width="1.2" height="499" fill="#1c1c1c"/><rect x="1352.15" y="361" width="1.2" height="499" fill="#1c1c1c"/><rect x="1366.90" y="361" width="1.2" height="499" fill="#1c1c1c"/><rect x="1381.65" y="361" width="1.8" height="499" fill="#171717"/><rect x="1396.40" y="361" width="1.2" height="499" fill="#1c1c1c"/><rect x="1411.15" y="361" width="1.2" height="499" fill="#1c1c1c"/><rect x="1425.90" y="361" width="1.2" height="499" fill="#1c1c1c"/><rect x="1440.65" y="361" width="1.2" height="499" fill="#1c1c1c"/><rect x="1455.40" y="361" width="1.8" height="499" fill="#171717"/><rect x="1470.15" y="361" width="1.2" height="499" fill="#1c1c1c"/><rect x="1484.90" y="361" width="1.2" height="499" fill="#1c1c1c"/><rect x="1499.65" y="361" width="1.2" height="499" fill="#1c1c1c"/><rect x="1514.40" y="361" width="1.2" height="499" fill="#1c1c1c"/><rect x="1529.15" y="361" width="1.8" height="499" fill="#171717"/><rect x="286" y="369.65" width="1250" height="1.2" fill="#1c1c1c"/><rect x="286" y="384.40" width="1250" height="1.7" fill="#181818"/><rect x="286" y="399.15" width="1250" height="1.2" fill="#1c1c1c"/><rect x="286" y="413.90" width="1250" height="1.2" fill="#1c1c1c"/><rect x="286" y="428.65" width="1250" height="1.2" fill="#1c1c1c"/><rect x="286" y="443.40" width="1250" height="1.2" fill="#1c1c1c"/><rect x="286" y="458.15" width="1250" height="2" fill="#131313"/><rect x="286" y="472.90" width="1250" height="1.2" fill="#1c1c1c"/><rect x="286" y="487.65" width="1250" height="1.2" fill="#1c1c1c"/><rect x="286" y="502.40" width="1250" height="1.2" fill="#1c1c1c"/><rect x="286" y="517.15" width="1250" height="1.2" fill="#1c1c1c"/><rect x="286" y="531.90" width="1250" height="1.7" fill="#181818"/><rect x="286" y="546.65" width="1250" height="1.2" fill="#1c1c1c"/><rect x="286" y="561.40" width="1250" height="1.2" fill="#1c1c1c"/><rect x="286" y="576.15" width="1250" height="1.2" fill="#1c1c1c"/><rect x="286" y="590.90" width="1250" height="1.2" fill="#1c1c1c"/><rect x="286" y="605.65" width="1250" height="2" fill="#131313"/><rect x="286" y="620.40" width="1250" height="1.2" fill="#1c1c1c"/><rect x="286" y="635.15" width="1250" height="1.2" fill="#1c1c1c"/><rect x="286" y="649.90" width="1250" height="1.2" fill="#1c1c1c"/><rect x="286" y="664.65" width="1250" height="1.2" fill="#1c1c1c"/><rect x="286" y="679.40" width="1250" height="1.7" fill="#181818"/><rect x="286" y="694.15" width="1250" height="1.2" fill="#1c1c1c"/><rect x="286" y="708.90" width="1250" height="1.2" fill="#1c1c1c"/><rect x="286" y="723.65" width="1250" height="1.2" fill="#1c1c1c"/><rect x="286" y="738.40" width="1250" height="1.2" fill="#1c1c1c"/><rect x="286" y="753.15" width="1250" height="2" fill="#131313"/><rect x="286" y="767.90" width="1250" height="1.2" fill="#1c1c1c"/><rect x="286" y="782.65" width="1250" height="1.2" fill="#1c1c1c"/><rect x="286" y="797.40" width="1250" height="1.2" fill="#1c1c1c"/><rect x="286" y="812.15" width="1250" height="1.2" fill="#1c1c1c"/><rect x="286" y="826.90" width="1250" height="1.7" fill="#181818"/><rect x="286" y="841.65" width="1250" height="1.2" fill="#1c1c1c"/><rect x="286" y="856.40" width="1250" height="1.2" fill="#1c1c1c"/></svg><div class="a" style="left:286px;top:331px;width:1250px;height:30px;background:#3a3a3a;border-radius:5px 0 0 0"></div><div class="a" style="left:295.2px;top:335.8px;width:37.3px;height:23.1px;background:#2e2e2e;border-radius:4px"></div><svg class="a" style="left:295px;top:335px" width="40" height="25"><circle cx="14.2" cy="12.3" r="8.4" fill="none" stroke="#d8d8d8" stroke-width="1.3"/><path d="M9.8 10.8 L12.2 7.8" stroke="#e6e6e6" stroke-width="1.8" stroke-linecap="round"/><circle cx="15.6" cy="6.9" r="1.1" fill="#e6e6e6"/><path d="M29.5 10.5 L32 13 L34.5 10.5" stroke="#e0e0e0" stroke-width="1.2" fill="none"/></svg><div class="a" style="left:339.9px;top:335.8px;width:106.7px;height:23.1px;background:#2e2e2e;border-radius:4px"></div><svg class="a" style="left:340px;top:335px" width="107" height="25"><g transform="translate(-1,0.3)"><g stroke="#8f8f8f" stroke-width="1.5" fill="none"><path d="M5.95 8.4V4.35H10M18.8 4.35H22.85V8.4M22.85 16.9V20.95H18.8M10 20.95H5.95V16.9"/></g><rect x="8.9" y="7.4" width="10" height="10" fill="#d8d8d8"/></g><path d="M93.5 10.5 L96.5 13.5 L99.5 10.5" stroke="#e0e0e0" stroke-width="1.3" fill="none"/></svg><div class="t" style="left:370px;top:341px;font-size:13.8px;color:#e6e6e6">Object</div><div class="t" style="left:461.8px;top:341px;font-size:13.8px;color:#e6e6e6">View</div><div class="t" style="left:510px;top:341px;font-size:13.8px;color:#e6e6e6">Select</div><div class="t" style="left:566px;top:341px;font-size:13.8px;color:#e6e6e6">Add</div><div class="t" style="left:609px;top:341px;font-size:13.8px;color:#e6e6e6">Node</div><div class="a" style="left:658.5px;top:338.5px;width:17px;height:17px;background:#5680c2;border-radius:3px"></div><svg class="a" style="left:658.5px;top:338.5px" width="17" height="17"><path d="M4 8.5 L7.3 12 L13.3 4.8" stroke="#fff" stroke-width="1.8" fill="none"/></svg><div class="t" style="left:679.5px;top:341px;font-size:13.8px;color:#e6e6e6">Use Nodes</div><div class="a" style="left:786px;top:336px;width:95.5px;height:22.5px;background:#2e2e2e;border-radius:4px"></div><div class="t" style="left:795px;top:341px;font-size:13.8px;color:#e6e6e6">Slot 1</div><svg class="a" style="left:860px;top:336px" width="22" height="22"><path d="M8 10 L11 13 L14 10" stroke="#e0e0e0" stroke-width="1.3" fill="none"/></svg><div class="a" style="left:889px;top:336px;width:38px;height:22.5px;background:#2e2e2e;border-radius:4px 0 0 4px"></div><svg class="a" style="left:889px;top:336px" width="38" height="23"><circle cx="13.5" cy="11.2" r="7.5" fill="#fff" stroke="#e6e6e6" stroke-width="1"/><path d="M13.5 3.7 A7.5 7.5 0 0 0 6 11.2 H13.5 V18.7 A7.5 7.5 0 0 0 21 11.2 H13.5Z" fill="#2e2e2e"/><circle cx="13.5" cy="11.2" r="7.5" fill="none" stroke="#e6e6e6" stroke-width="1.2"/><path d="M24.5 10 L27.5 13 L30.5 10" stroke="#e0e0e0" stroke-width="1.2" fill="none"/></svg><div class="a" style="left:926.4px;top:336px;width:146.1px;height:22.5px;background:#1d1d1d"></div><div class="t" style="left:935px;top:341px;font-size:13.8px;color:#e6e6e6">Material.001</div><div class="a" style="left:1072.5px;top:336px;width:101.5px;height:22.5px;background:#555555;border-radius:0 4px 4px 0"></div><div class="a" style="left:1101.3px;top:336px;width:1px;height:22.5px;background:#3d3d3d"></div><div class="a" style="left:1125px;top:336px;width:1px;height:22.5px;background:#3d3d3d"></div><div class="a" style="left:1149.7px;top:336px;width:1px;height:22.5px;background:#3d3d3d"></div><div class="t" style="left:1082px;top:341px;font-size:13.8px;color:#e6e6e6">7</div><svg class="a" style="left:1100px;top:336px" width="110" height="23"><path d="M13 4.5 Q17 6.5 21 6 V11 Q21 16.5 13 19 Q5 16.5 5 11 V6 Q9 6.5 13 4.5Z" fill="none" stroke="#a5a5a5" stroke-width="1.2"/><path d="M30 8.5 H35 V18.5 H30Z M35 15.5 H42.5 V4.5 H37 L35 6.5" fill="none" stroke="#e0e0e0" stroke-width="1.2"/><path d="M38 4.5 V8 H42.5" fill="none" stroke="#e0e0e0" stroke-width="1.2"/><path d="M57 6.5 L66 15.5 M66 6.5 L57 15.5" stroke="#e6e6e6" stroke-width="1.5"/><path d="M87.2 10.4 L94.2 17.4 M90.3 10.7 L93.8 7.2 L93.1 6.5 L95.9 3.7 L100.9 8.7 L98.1 11.5 L97.4 10.8 L93.9 14.3 M90.7 13.9 L85.0 19.6" fill="none" stroke="#bdbdbd" stroke-width="1.2" stroke-linejoin="round"/></svg><div class="a" style="left:1439px;top:336.3px;width:22.6px;height:21.9px;background:#404040;border-radius:4px"></div><div class="a" style="left:1469px;top:336.3px;width:61px;height:21.9px;background:#2e2e2e;border-radius:4px"></div><div class="a" style="left:1469px;top:336.3px;width:23px;height:21.9px;background:#555;border-radius:4px 0 0 4px"></div><svg class="a" style="left:1436px;top:335px" width="100" height="25"><path d="M14 6.5 V19 H22 M10.5 10 L14 6.5 L17.5 10" stroke="#7a7a7a" stroke-width="1.3" fill="none"/><path d="M40 18 L37 15 Q35 11 38.5 8 Q42 5.5 45.5 8.5 L50 13 L47 16 L43 11.5 Q41.5 10.5 40.5 11.5 Q39.5 12.5 40.5 14 L43 16.5" fill="none" stroke="#999" stroke-width="1.3"/><rect x="63" y="5" width="5" height="5" fill="#eaeaea"/><path d="M63 12.5 H76 M63 17.5 H76 M66 10 V21 M71.5 5 V21" stroke="#d0d0d0" stroke-width="1.1"/><path d="M84 12 L87 15 L90 12" stroke="#e0e0e0" stroke-width="1.3" fill="none"/></svg><div class="a" style="left:292px;top:380px;width:8px;height:4px;background:#6a6a6a"></div><svg class="a" style="left:285px;top:382px" width="8" height="12"><path d="M1.5 1.5 L5.5 6 L1.5 10.5" stroke="#8a8a8a" stroke-width="1.2" fill="none"/></svg><div class="a" style="left:292px;top:388px;width:8px;height:11px;background:#6a6a6a"></div><div class="t" style="left:321px;top:830.5px;font-size:13.8px;color:#e6e6e6;text-shadow:1px 1px 1px #000">Material.001</div><svg class="a" style="left:0;top:0" width="1536" height="860"><path d="M701 573.3 C824.4 573.3 824.4 468.4 947.7 468.4" stroke="#1a1a1a" stroke-width="4.8" fill="none" opacity=".7"/><path d="M701 573.3 C824.4 573.3 824.4 580.2 947.7 580.2" stroke="#1a1a1a" stroke-width="4.8" fill="none" opacity=".7"/><path d="M701 573.3 C743.0 573.3 743.0 817 785 817" stroke="#1a1a1a" stroke-width="4.8" fill="none" opacity=".7"/><path d="M888 745 C917.9 745 917.9 787.6 947.7 787.6" stroke="#1a1a1a" stroke-width="4.8" fill="none" opacity=".7"/><path d="M1124.9 410.2 C1143.4 410.2 1143.4 428.7 1161.9 428.7" stroke="#1a1a1a" stroke-width="4.8" fill="none" opacity=".7"/><path d="M701 573.3 C824.4 573.3 824.4 468.4 947.7 468.4" stroke="#959595" stroke-width="3.1" fill="none"/><path d="M701 573.3 C824.4 573.3 824.4 580.2 947.7 580.2" stroke="#959595" stroke-width="3.1" fill="none"/><path d="M701 573.3 C743.0 573.3 743.0 817 785 817" stroke="#959595" stroke-width="3.1" fill="none"/><path d="M888 745 C917.9 745 917.9 787.6 947.7 787.6" stroke="#959595" stroke-width="3.1" fill="none"/><path d="M1124.9 410.2 C1143.4 410.2 1143.4 428.7 1161.9 428.7" stroke="#959595" stroke-width="3.1" fill="none"/></svg><div class="nd" style="left:523.8px;top:548.1px;width:176.8px;height:184.5px"></div><div class="a" style="left:523.8px;top:548.1px;width:176.8px;height:14.5px;background:#aa6a3d;border-radius:4px 4px 0 0"></div><svg class="a" style="left:530.3px;top:552.9px" width="7" height="6"><path d="M.5 .5 H6 L3.25 5.3Z" fill="#e8e8e8"/></svg><div class="nt" style="left:541.3px;top:550.6px;color:#ececec;text-shadow:0 1px 1px rgba(0,0,0,.45)">Castle wall 2.jpg</div><div class="nt" style="right:843.8px;top:569.2px;font-size:8.5px;color:#e2e2e2">Color</div><div class="a" style="left:697.5px;top:570.2px;width:6.2px;height:6.2px;border-radius:50%;background:#c7c729;box-shadow:0 0 0 .7px #1a1a1a"></div><div class="nt" style="right:843.8px;top:585.9px;font-size:8.5px;color:#e2e2e2">Alpha</div><div class="a" style="left:697.5px;top:586.9px;width:6.2px;height:6.2px;border-radius:50%;background:#a1a1a1;box-shadow:0 0 0 .7px #1a1a1a"></div><div class="a" style="left:532.4px;top:605.6px;width:23.1px;height:12.3px;background:#3a3a3a;border-radius:3px 0 0 3px;border:1px solid #2e2e2e"></div><svg class="a" style="left:532.4px;top:605.6px" width="24" height="13"><path d="M3 2 H10 V10.5 H3Z" fill="none" stroke="#d0d0d0" stroke-width=".9"/><path d="M3.2 10.5 L6.5 5.5 L9.8 10.5Z" fill="#e6e6e6"/><circle cx="8.3" cy="4" r="1" fill="#e6e6e6"/><path d="M14.5 5 L16.3 6.8 L18.1 5" stroke="#dcdcdc" stroke-width="1" fill="none"/></svg><div class="a" style="left:555.5px;top:605.6px;width:79.3px;height:12.3px;background:#282828"></div><div class="nt" style="left:560.0px;top:607.6px;font-size:8.2px;color:#e2e2e2">Castle wall 2.jpg</div><div class="a" style="left:634.8px;top:605.6px;width:59.2px;height:12.3px;background:#545454;border-radius:0 3px 3px 0"></div><div class="a" style="left:649.6px;top:605.6px;width:.8px;height:12.3px;background:#3a3a3a"></div><div class="a" style="left:664.4px;top:605.6px;width:.8px;height:12.3px;background:#3a3a3a"></div><div class="a" style="left:679.2px;top:605.6px;width:.8px;height:12.3px;background:#3a3a3a"></div><svg class="a" style="left:634.8px;top:605.6px" width="60" height="13"><path d="M7.4 2.5 Q9.5 3.5 11 3.2 V6.5 Q11 9.5 7.4 10.8 Q3.8 9.5 3.8 6.5 V3.2 Q5.3 3.5 7.4 2.5Z" fill="none" stroke="#a0a0a0" stroke-width=".9"/><path d="M18.5 5 H21 V10.5 H18.5Z M21 9 H25.5 V2.5 H22.5 L21 4" fill="none" stroke="#e0e0e0" stroke-width=".9"/><path d="M33 3.5 H36 L37 4.5 H41.5 V10.5 H33Z" fill="#e6e6e6"/><path d="M33 6 H41.5" stroke="#545454" stroke-width=".8"/><path d="M49 3.5 L54 8.5 M54 3.5 L49 8.5" stroke="#e6e6e6" stroke-width="1.1"/></svg><div class="dd" style="left:532.4px;top:624.2px;width:161.6px;height:11.6px"></div><div class="nt" style="left:537.6px;top:625.9px;font-size:8.5px;color:#e2e2e2">Linear</div><svg class="a" style="left:686.2px;top:628.4px" width="7" height="5"><path d="M1 1 L3.5 3.5 L6 1" stroke="#dcdcdc" stroke-width="1" fill="none"/></svg><div class="dd" style="left:532.4px;top:642.3px;width:161.6px;height:12.8px"></div><div class="nt" style="left:537.6px;top:644.6px;font-size:8.5px;color:#e2e2e2">Flat</div><svg class="a" style="left:686.2px;top:647.1px" width="7" height="5"><path d="M1 1 L3.5 3.5 L6 1" stroke="#dcdcdc" stroke-width="1" fill="none"/></svg><div class="dd" style="left:532.4px;top:660.5px;width:161.6px;height:12.5px"></div><div class="nt" style="left:537.6px;top:662.7px;font-size:8.5px;color:#e2e2e2">Repeat</div><svg class="a" style="left:686.2px;top:665.2px" width="7" height="5"><path d="M1 1 L3.5 3.5 L6 1" stroke="#dcdcdc" stroke-width="1" fill="none"/></svg><div class="dd" style="left:532.4px;top:678.4px;width:161.6px;height:12.8px"></div><div class="nt" style="left:537.6px;top:680.7px;font-size:8.5px;color:#e2e2e2">Single Image</div><svg class="a" style="left:686.2px;top:683.2px" width="7" height="5"><path d="M1 1 L3.5 3.5 L6 1" stroke="#dcdcdc" stroke-width="1" fill="none"/></svg><div class="nt" style="left:532.0px;top:698.7px;font-size:8.5px;color:#e2e2e2">Color Space</div><div class="dd" style="left:617.3px;top:697.0px;width:76.7px;height:11.6px"></div><div class="nt" style="left:622.0px;top:698.7px;font-size:8.5px;color:#e2e2e2">sRGB</div><svg class="a" style="left:686.2px;top:701.2px" width="7" height="5"><path d="M1 1 L3.5 3.5 L6 1" stroke="#dcdcdc" stroke-width="1" fill="none"/></svg><div class="a" style="left:520.7px;top:717.8px;width:6.2px;height:6.2px;border-radius:50%;background:#6363c7;box-shadow:0 0 0 .7px #1a1a1a"></div><div class="nt" style="left:532.0px;top:716.8px;font-size:8.5px;color:#e2e2e2">Vector</div><div class="nd" style="left:947.7px;top:385.1px;width:177.2px;height:445.2px"></div><div class="a" style="left:947.7px;top:385.1px;width:177.2px;height:14.2px;background:#4e9a4e;border-radius:4px 4px 0 0"></div><svg class="a" style="left:954.2px;top:389.7px" width="7" height="6"><path d="M.5 .5 H6 L3.25 5.3Z" fill="#e8e8e8"/></svg><div class="nt" style="left:965.2px;top:387.4px;color:#ececec;text-shadow:0 1px 1px rgba(0,0,0,.45)">Principled BSDF</div><div class="nt" style="right:422.0px;top:406.1px;font-size:8.5px;color:#e2e2e2">BSDF</div><div class="a" style="left:1121.8px;top:407.1px;width:6.2px;height:6.2px;border-radius:50%;background:#63c763;box-shadow:0 0 0 .7px #1a1a1a"></div><div class="dd" style="left:955.1px;top:426.0px;width:160.5px;height:11.7px"></div><div class="nt" style="left:960.3px;top:427.8px;font-size:8.5px;color:#e2e2e2">GGX</div><svg class="a" style="left:1107.8px;top:430.3px" width="7" height="5"><path d="M1 1 L3.5 3.5 L6 1" stroke="#dcdcdc" stroke-width="1" fill="none"/></svg><div class="dd" style="left:955.1px;top:444.4px;width:160.5px;height:12.3px"></div><div class="nt" style="left:960.3px;top:446.4px;font-size:8.5px;color:#e2e2e2">Christensen-Burley</div><svg class="a" style="left:1107.8px;top:448.9px" width="7" height="5"><path d="M1 1 L3.5 3.5 L6 1" stroke="#dcdcdc" stroke-width="1" fill="none"/></svg><div class="a" style="left:944.6px;top:465.3px;width:6.2px;height:6.2px;border-radius:50%;background:#c7c729;box-shadow:0 0 0 .7px #1a1a1a"></div><div class="nt" style="left:955.6px;top:464.3px;font-size:8.5px;color:#e2e2e2">Base Color</div><div class="a" style="left:944.6px;top:481.5px;width:6.2px;height:6.2px;border-radius:50%;background:#a1a1a1;box-shadow:0 0 0 .7px #1a1a1a"></div><div class="sl" style="left:955.1px;top:477.9px;width:160.5px;height:13.5px"></div><div class="nt" style="left:962.1px;top:480.5px;font-size:8.5px;color:#e2e2e2">Subsurface</div><div class="nt" style="right:427.0px;top:480.5px;font-size:8.5px;color:#e2e2e2">0.000</div><div class="a" style="left:944.6px;top:497.4px;width:6.2px;height:6.2px;border-radius:50%;background:#6363c7;box-shadow:0 0 0 .7px #1a1a1a"></div><div class="dd" style="left:955.1px;top:494.6px;width:160.5px;height:12px"></div><div class="nt" style="left:960.3px;top:496.4px;font-size:8.5px;color:#e2e2e2">Subsurface Radius</div><svg class="a" style="left:1107.8px;top:498.9px" width="7" height="5"><path d="M1 1 L3.5 3.5 L6 1" stroke="#dcdcdc" stroke-width="1" fill="none"/></svg><div class="a" style="left:944.6px;top:513.4px;width:6.2px;height:6.2px;border-radius:50%;background:#c7c729;box-shadow:0 0 0 .7px #1a1a1a"></div><div class="nt" style="left:955.6px;top:512.4px;font-size:8.5px;color:#e2e2e2">Subsurface Col</div><div class="a" style="left:1023.7px;top:510.3px;width:91.9px;height:12.6px;background:#eeeeee;border-radius:3px"></div><div class="a" style="left:944.6px;top:529.4px;width:6.2px;height:6.2px;border-radius:50%;background:#a1a1a1;box-shadow:0 0 0 .7px #1a1a1a"></div><div class="sl" style="left:955.1px;top:525.7px;width:160.5px;height:13.5px"></div><div class="nt" style="left:962.1px;top:528.4px;font-size:8.5px;color:#e2e2e2">Metallic</div><div class="nt" style="right:427.0px;top:528.4px;font-size:8.5px;color:#e2e2e2">0.000</div><div class="a" style="left:944.6px;top:545.3px;width:6.2px;height:6.2px;border-radius:50%;background:#a1a1a1;box-shadow:0 0 0 .7px #1a1a1a"></div><div class="sl" style="left:955.1px;top:541.6px;width:160.5px;height:13.5px"></div><div class="nt" style="left:962.1px;top:544.3px;font-size:8.5px;color:#e2e2e2">Specular</div><div class="nt" style="right:427.0px;top:544.3px;font-size:8.5px;color:#e2e2e2">0.000</div><div class="a" style="left:944.6px;top:561.2px;width:6.2px;height:6.2px;border-radius:50%;background:#a1a1a1;box-shadow:0 0 0 .7px #1a1a1a"></div><div class="sl" style="left:955.1px;top:557.6px;width:160.5px;height:13.5px"></div><div class="nt" style="left:962.1px;top:560.2px;font-size:8.5px;color:#e2e2e2">Specular Tint</div><div class="nt" style="right:427.0px;top:560.2px;font-size:8.5px;color:#e2e2e2">0.000</div><div class="a" style="left:944.6px;top:577.2px;width:6.2px;height:6.2px;border-radius:50%;background:#a1a1a1;box-shadow:0 0 0 .7px #1a1a1a"></div><div class="nt" style="left:955.6px;top:576.2px;font-size:8.5px;color:#e2e2e2">Roughness</div><div class="a" style="left:944.6px;top:593.1px;width:6.2px;height:6.2px;border-radius:50%;background:#a1a1a1;box-shadow:0 0 0 .7px #1a1a1a"></div><div class="sl" style="left:955.1px;top:589.5px;width:160.5px;height:13.5px"></div><div class="nt" style="left:962.1px;top:592.1px;font-size:8.5px;color:#e2e2e2">Anisotropic</div><div class="nt" style="right:427.0px;top:592.1px;font-size:8.5px;color:#e2e2e2">0.000</div><div class="a" style="left:944.6px;top:609.1px;width:6.2px;height:6.2px;border-radius:50%;background:#a1a1a1;box-shadow:0 0 0 .7px #1a1a1a"></div><div class="sl" style="left:955.1px;top:605.5px;width:160.5px;height:13.5px"></div><div class="nt" style="left:962.1px;top:608.1px;font-size:8.5px;color:#e2e2e2">Anisotropic Rotation</div><div class="nt" style="right:427.0px;top:608.1px;font-size:8.5px;color:#e2e2e2">0.000</div><div class="a" style="left:944.6px;top:625.0px;width:6.2px;height:6.2px;border-radius:50%;background:#a1a1a1;box-shadow:0 0 0 .7px #1a1a1a"></div><div class="sl" style="left:955.1px;top:621.4px;width:160.5px;height:13.5px"></div><div class="nt" style="left:962.1px;top:624.0px;font-size:8.5px;color:#e2e2e2">Sheen</div><div class="nt" style="right:427.0px;top:624.0px;font-size:8.5px;color:#e2e2e2">0.000</div><div class="a" style="left:944.6px;top:641.0px;width:6.2px;height:6.2px;border-radius:50%;background:#a1a1a1;box-shadow:0 0 0 .7px #1a1a1a"></div><div class="sl" style="left:955.1px;top:637.4px;width:160.5px;height:13.5px"><div class="a" style="left:0;top:0;bottom:0;width:80.2px;background:#5680c2"></div></div><div class="nt" style="left:962.1px;top:640.0px;font-size:8.5px;color:#e2e2e2">Sheen Tint</div><div class="nt" style="right:427.0px;top:640.0px;font-size:8.5px;color:#e2e2e2">0.500</div><div class="a" style="left:944.6px;top:656.9px;width:6.2px;height:6.2px;border-radius:50%;background:#a1a1a1;box-shadow:0 0 0 .7px #1a1a1a"></div><div class="sl" style="left:955.1px;top:653.3px;width:160.5px;height:13.5px"></div><div class="nt" style="left:962.1px;top:655.9px;font-size:8.5px;color:#e2e2e2">Clearcoat</div><div class="nt" style="right:427.0px;top:655.9px;font-size:8.5px;color:#e2e2e2">0.000</div><div class="a" style="left:944.6px;top:672.9px;width:6.2px;height:6.2px;border-radius:50%;background:#a1a1a1;box-shadow:0 0 0 .7px #1a1a1a"></div><div class="sl" style="left:955.1px;top:669.2px;width:160.5px;height:13.5px"><div class="a" style="left:0;top:0;bottom:0;width:4.8px;background:#5680c2"></div></div><div class="nt" style="left:962.1px;top:671.9px;font-size:8.5px;color:#e2e2e2">Clearcoat Roughness</div><div class="nt" style="right:427.0px;top:671.9px;font-size:8.5px;color:#e2e2e2">0.030</div><div class="a" style="left:944.6px;top:688.9px;width:6.2px;height:6.2px;border-radius:50%;background:#a1a1a1;box-shadow:0 0 0 .7px #1a1a1a"></div><div class="sl" style="left:955.1px;top:685.2px;width:160.5px;height:13.5px"></div><div class="nt" style="left:965.7px;top:687.9px;font-size:8.5px;color:#e2e2e2">IOR</div><div class="nt" style="right:430.4px;top:687.9px;font-size:8.5px;color:#e2e2e2">1.450</div><div class="a" style="left:944.6px;top:704.8px;width:6.2px;height:6.2px;border-radius:50%;background:#a1a1a1;box-shadow:0 0 0 .7px #1a1a1a"></div><div class="sl" style="left:955.1px;top:701.1px;width:160.5px;height:13.5px"></div><div class="nt" style="left:962.1px;top:703.8px;font-size:8.5px;color:#e2e2e2">Transmission</div><div class="nt" style="right:427.0px;top:703.8px;font-size:8.5px;color:#e2e2e2">0.000</div><div class="a" style="left:944.6px;top:720.8px;width:6.2px;height:6.2px;border-radius:50%;background:#a1a1a1;box-shadow:0 0 0 .7px #1a1a1a"></div><div class="sl" style="left:955.1px;top:717.1px;width:160.5px;height:13.5px"></div><div class="nt" style="left:962.1px;top:719.8px;font-size:8.5px;color:#e2e2e2">Transmission Roughness</div><div class="nt" style="right:427.0px;top:719.8px;font-size:8.5px;color:#e2e2e2">0.000</div><div class="a" style="left:944.6px;top:736.7px;width:6.2px;height:6.2px;border-radius:50%;background:#c7c729;box-shadow:0 0 0 .7px #1a1a1a"></div><div class="nt" style="left:955.6px;top:735.7px;font-size:8.5px;color:#e2e2e2">Emission</div><div class="a" style="left:1023.7px;top:733.6px;width:91.9px;height:12.6px;background:#000000;border-radius:3px"></div><div class="a" style="left:944.6px;top:752.6px;width:6.2px;height:6.2px;border-radius:50%;background:#a1a1a1;box-shadow:0 0 0 .7px #1a1a1a"></div><div class="sl" style="left:955.1px;top:749.0px;width:160.5px;height:13.5px"></div><div class="nt" style="left:965.7px;top:751.6px;font-size:8.5px;color:#e2e2e2">Emission Strength</div><div class="nt" style="right:430.4px;top:751.6px;font-size:8.5px;color:#e2e2e2">1.000</div><div class="a" style="left:944.6px;top:768.6px;width:6.2px;height:6.2px;border-radius:50%;background:#a1a1a1;box-shadow:0 0 0 .7px #1a1a1a"></div><div class="sl" style="left:955.1px;top:765.0px;width:160.5px;height:13.5px"><div class="a" style="left:0;top:0;bottom:0;width:160.5px;background:#5680c2"></div></div><div class="nt" style="left:962.1px;top:767.6px;font-size:8.5px;color:#e2e2e2">Alpha</div><div class="nt" style="right:427.0px;top:767.6px;font-size:8.5px;color:#e2e2e2">1.000</div><div class="a" style="left:944.6px;top:784.6px;width:6.2px;height:6.2px;border-radius:50%;background:#6363c7;box-shadow:0 0 0 .7px #1a1a1a"></div><div class="nt" style="left:955.6px;top:783.6px;font-size:8.5px;color:#e2e2e2">Normal</div><div class="a" style="left:944.6px;top:800.5px;width:6.2px;height:6.2px;border-radius:50%;background:#6363c7;box-shadow:0 0 0 .7px #1a1a1a"></div><div class="nt" style="left:955.6px;top:799.5px;font-size:8.5px;color:#e2e2e2">Clearcoat Normal</div><div class="a" style="left:944.6px;top:816.4px;width:6.2px;height:6.2px;border-radius:50%;background:#6363c7;box-shadow:0 0 0 .7px #1a1a1a"></div><div class="nt" style="left:955.6px;top:815.4px;font-size:8.5px;color:#e2e2e2">Tangent</div><div class="nd" style="left:1161.9px;top:385px;width:103.1px;height:85.8px"></div><div class="a" style="left:1161.9px;top:385px;width:103.1px;height:14.2px;background:#982f38;border-radius:4px 4px 0 0"></div><svg class="a" style="left:1168.4px;top:389.6px" width="7" height="6"><path d="M.5 .5 H6 L3.25 5.3Z" fill="#e8e8e8"/></svg><div class="nt" style="left:1179.4px;top:387.3px;color:#ececec;text-shadow:0 1px 1px rgba(0,0,0,.45)">Material Output</div><div class="dd" style="left:1169.8px;top:404.3px;width:87.3px;height:12.8px"></div><div class="nt" style="left:1174.3px;top:406.6px;font-size:8.5px;color:#e2e2e2">All</div><svg class="a" style="left:1249.3px;top:409.1px" width="7" height="5"><path d="M1 1 L3.5 3.5 L6 1" stroke="#dcdcdc" stroke-width="1" fill="none"/></svg><div class="a" style="left:1158.8px;top:425.6px;width:6.2px;height:6.2px;border-radius:50%;background:#63c763;box-shadow:0 0 0 .7px #1a1a1a"></div><div class="nt" style="left:1169.8px;top:424.6px;font-size:8.5px;color:#e2e2e2">Surface</div><div class="a" style="left:1158.8px;top:441.5px;width:6.2px;height:6.2px;border-radius:50%;background:#63c763;box-shadow:0 0 0 .7px #1a1a1a"></div><div class="nt" style="left:1169.8px;top:440.5px;font-size:8.5px;color:#e2e2e2">Volume</div><div class="a" style="left:1158.8px;top:458.0px;width:6.2px;height:6.2px;border-radius:50%;background:#6363c7;box-shadow:0 0 0 .7px #1a1a1a"></div><div class="nt" style="left:1169.8px;top:457.0px;font-size:8.5px;color:#e2e2e2">Displacement</div><div class="nd" style="left:785px;top:720.1px;width:103.0px;height:124.2px"></div><div class="a" style="left:785px;top:720.1px;width:103.0px;height:14.6px;background:#6a57ae;border-radius:4px 4px 0 0"></div><svg class="a" style="left:791.5px;top:724.9px" width="7" height="6"><path d="M.5 .5 H6 L3.25 5.3Z" fill="#e8e8e8"/></svg><div class="nt" style="left:802.5px;top:722.6px;color:#ececec;text-shadow:0 1px 1px rgba(0,0,0,.45)">Bump</div><div class="nt" style="right:657.0px;top:740.9px;font-size:8.5px;color:#e2e2e2">Normal</div><div class="a" style="left:884.9px;top:741.9px;width:6.2px;height:6.2px;border-radius:50%;background:#6363c7;box-shadow:0 0 0 .7px #1a1a1a"></div><div class="a" style="left:792.8px;top:762.9px;width:8.9px;height:8.9px;background:#555;border-radius:2px"></div><div class="nt" style="left:804.7px;top:763.2px;font-size:8.5px;color:#e2e2e2">Invert</div><div class="a" style="left:781.9px;top:782.4px;width:6.2px;height:6.2px;border-radius:50%;background:#a1a1a1;box-shadow:0 0 0 .7px #1a1a1a"></div><div class="sl" style="left:792.8px;top:779.1px;width:87.6px;height:12.7px"><div class="a" style="left:0;top:0;bottom:0;width:87.6px;background:#5680c2"></div></div><div class="nt" style="left:799.8px;top:781.4px;font-size:8.5px;color:#e2e2e2">Strength</div><div class="nt" style="right:662.2px;top:781.4px;font-size:8.5px;color:#e2e2e2">1.000</div><div class="a" style="left:781.9px;top:799.3px;width:6.2px;height:6.2px;border-radius:50%;background:#a1a1a1;box-shadow:0 0 0 .7px #1a1a1a"></div><div class="sl" style="left:792.8px;top:796.3px;width:87.6px;height:12.2px"></div><div class="nt" style="left:803.4px;top:798.3px;font-size:8.5px;color:#e2e2e2">Distance</div><div class="nt" style="right:665.6px;top:798.3px;font-size:8.5px;color:#e2e2e2">0.100</div><div class="a" style="left:781.9px;top:813.9px;width:6.2px;height:6.2px;border-radius:50%;background:#a1a1a1;box-shadow:0 0 0 .7px #1a1a1a"></div><div class="nt" style="left:792.6px;top:812.9px;font-size:8.5px;color:#e2e2e2">Height</div><div class="a" style="left:781.9px;top:829.8px;width:6.2px;height:6.2px;border-radius:50%;background:#6363c7;box-shadow:0 0 0 .7px #1a1a1a"></div><div class="nt" style="left:792.6px;top:828.8px;font-size:8.5px;color:#e2e2e2">Normal</div></body></html>
